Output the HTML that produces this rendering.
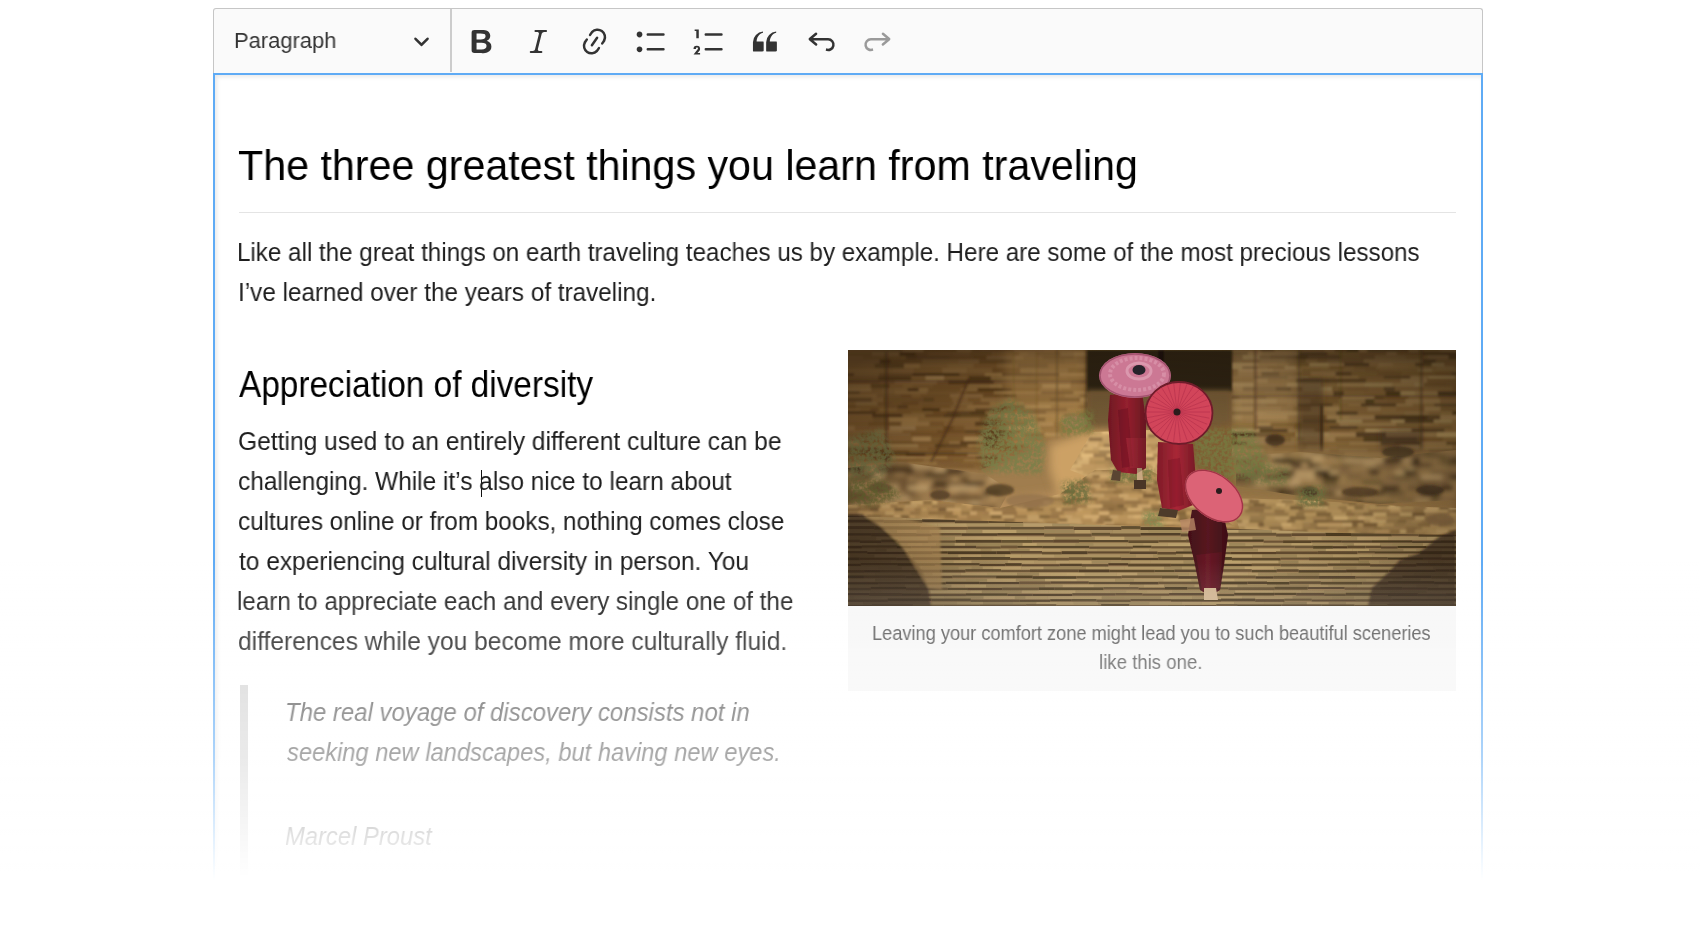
<!DOCTYPE html>
<html><head><meta charset="utf-8">
<style>
html,body{margin:0;padding:0;background:#fff;width:1700px;height:928px;overflow:hidden;position:relative;font-family:"Liberation Sans",sans-serif;}
.a{position:absolute;}
.ln{position:absolute;white-space:nowrap;line-height:1;transform-origin:0 0;will-change:transform;}
#tb{left:213px;top:8px;width:1268px;height:64px;border:1px solid #c6c6c6;border-bottom:none;background:#fafafa;border-radius:3px 3px 0 0;}
#sep{left:450px;top:9px;width:1.5px;height:63px;background:#cccccc;}
#ed{left:213px;top:72.5px;width:1266px;height:900px;border:2px solid #5fabf5;background:#fff;box-shadow:inset 2px 2px 4px rgba(0,0,0,.09);}
.ic{position:absolute;top:24.5px;width:33px;height:33px;}
.ic svg{width:33px;height:33px;display:block;fill:#333;}
.body{color:#222;}
#fade{left:0;top:0;width:1700px;height:928px;background:linear-gradient(to bottom,rgba(255,255,255,0) 0px,rgba(255,255,255,0) 560px,rgba(255,255,255,.5) 760px,rgba(255,255,255,1) 880px);}

</style></head><body>
<div id="tb" class="a"></div>
<div id="ed" class="a"></div>
<div id="sep" class="a"></div>
<!-- toolbar text -->
<svg class="a" style="left:412.8px;top:32.4px;width:17px;height:17px;fill:#333" viewBox="0 0 10 10"><path d="M.941 4.523a.75.75 0 1 1 1.06-1.06l3.006 3.005 3.005-3.005a.75.75 0 1 1 1.06 1.06l-3.549 3.55a.75.75 0 0 1-1.168-.136L.941 4.523z"/></svg>

<div class="ic" style="left:465px"><svg viewBox="0 0 20 20"><path d="M10.187 17H5.773c-.637 0-1.092-.138-1.364-.415-.273-.277-.409-.718-.409-1.323V4.738c0-.617.14-1.062.419-1.332.279-.27.73-.406 1.354-.406h4.68c.69 0 1.288.041 1.793.124.506.083.96.242 1.36.478.341.197.644.447.906.75a3.262 3.262 0 0 1 .808 2.162c0 1.401-.722 2.426-2.167 3.075C15.050 10.175 16 11.337 16 13.060a3.756 3.756 0 0 1-2.296 3.504 6.100 6.100 0 0 1-1.517.377c-.571.073-1.238.11-2 .11zm-.217-6.217H7v4.087h3.069c1.977 0 2.965-.69 2.965-2.072 0-.707-.256-1.220-.768-1.537-.512-.319-1.277-.478-2.296-.478zM7 5.130v3.619h2.606c.729 0 1.292-.067 1.690-.2a1.600 1.600 0 0 0 .910-.765c.165-.267.247-.566.247-.897 0-.707-.260-1.176-.778-1.409-.519-.232-1.310-.348-2.375-.348H7z"/></svg></div>
<div class="ic" style="left:521.6px"><svg viewBox="0 0 20 20"><path d="m9.586 14.633.021.004c-.036.335.095.655.393.962.082.083.173.150.274.201h1.474a.6.6 0 1 1 0 1.200H5.304a.6.6 0 0 1 0-1.200h1.150c.474-.070.809-.182 1.005-.334.157-.122.291-.320.404-.597l2.416-9.550a1.053 1.053 0 0 0-.281-.823 1.120 1.120 0 0 0-.442-.296H8.150a.6.6 0 0 1 0-1.200h6.443a.6.6 0 1 1 0 1.200h-1.195c-.376.056-.650.155-.823.296-.215.175-.423.439-.623.790l-2.366 9.347z"/></svg></div>
<div class="ic" style="left:578.2px"><svg viewBox="0 0 20 20"><path d="m11.077 15 .991-1.416a.75.75 0 1 1 1.229.86l-1.148 1.640a.748.748 0 0 1-.217.206 5.251 5.251 0 0 1-8.503-5.955.741.741 0 0 1 .120-.274l1.147-1.639a.75.75 0 1 1 1.228.860L4.933 10.700l.006.003a3.750 3.750 0 0 0 6.132 4.294l.006.004zm5.494-5.335a.748.748 0 0 1-.120.274l-1.147 1.639a.75.75 0 1 1-1.228-.860l.860-1.230a3.750 3.750 0 0 0-6.144-4.301l-.860 1.229a.75.75 0 0 1-1.229-.860l1.148-1.640a.748.748 0 0 1 .217-.206 5.251 5.251 0 0 1 8.503 5.955zm-4.563-2.532a.75.75 0 0 1 .184 1.045l-3.155 4.505a.75.75 0 1 1-1.229-.860l3.155-4.506a.75.75 0 0 1 1.045-.184z"/></svg></div>
<div class="ic" style="left:635.4px"><svg viewBox="0 0 20 20"><path d="M7 5.75c0 .414.336.75.75.75h9.5a.75.75 0 1 0 0-1.5h-9.5a.75.75 0 0 0-.75.75zm-6 0C1 4.784 1.777 4 2.75 4c.966 0 1.75.777 1.75 1.75 0 .966-.777 1.75-1.75 1.75C1.784 7.5 1 6.723 1 5.75zm6 9c0 .414.336.75.75.75h9.5a.75.75 0 1 0 0-1.5h-9.5a.75.75 0 0 0-.75.75zm-6 0c0-.966.777-1.75 1.75-1.75.966 0 1.75.777 1.75 1.75 0 .966-.777 1.75-1.75 1.75-.966 0-1.75-.777-1.75-1.75z"/></svg></div>
<div class="ic" style="left:692.6px"><svg viewBox="0 0 20 20"><path d="M7 5.75c0 .414.336.75.75.75h9.5a.75.75 0 1 0 0-1.5h-9.5a.75.75 0 0 0-.75.75zM3.5 3v5H2V3.7H1v-1h2.5V3zM.343 17.857l2.59-3.257H2.92a.6.6 0 1 0-1.04 0H.302a2 2 0 1 1 3.995 0h-.001c-.048.405-.16.734-.333.988-.175.254-.59.692-1.244 1.312H4.3v1h-4l.043-.043zM7 14.75a.75.75 0 0 1 .75-.75h9.5a.75.75 0 1 1 0 1.5h-9.5a.75.75 0 0 1-.75-.75z"/></svg></div>
<div class="ic" style="left:748px"><svg viewBox="0 0 20 20"><path d="M3 10.423a6.5 6.5 0 0 1 6.056-6.408l.038.67C6.448 5.423 5.354 7.663 5.22 10H9c.552 0 .5.432.5.986v4.511c0 .554-.448.503-1 .503h-5c-.552 0-.5-.449-.5-1.003v-4.574zm8 0a6.5 6.5 0 0 1 6.056-6.408l.038.67c-2.646.739-3.74 2.979-3.873 5.315H17c.552 0 .5.432.5.986v4.511c0 .554-.448.503-1 .503h-5c-.552 0-.5-.449-.5-1.003v-4.574z"/></svg></div>
<div class="ic" style="left:804.6px"><svg viewBox="0 0 20 20"><path d="m5.042 9.367 2.189 1.837a.75.75 0 0 1-.965 1.149l-3.788-3.18a.747.747 0 0 1-.21-.284.75.75 0 0 1 .17-.945L6.23 4.762a.75.75 0 1 1 .964 1.15L4.863 7.866h8.917A.75.75 0 0 1 14 7.9a4 4 0 1 1-1.477 7.718l.344-1.489a2.5 2.5 0 1 0 1.094-4.73l.008-.032H5.042z"/></svg></div>
<div class="ic" style="left:861.2px"><svg viewBox="0 0 20 20" style="fill:#9a9a9a"><path d="m14.958 9.367-2.189 1.837a.75.75 0 0 0 .965 1.149l3.788-3.18a.747.747 0 0 0 .21-.284.75.75 0 0 0-.17-.945L13.77 4.762a.75.75 0 1 0-.964 1.15l2.331 1.955H6.22A.75.75 0 0 0 6 7.9a4 4 0 1 0 1.477 7.718l-.344-1.489A2.5 2.5 0 1 1 6.039 9.4l-.008-.032h8.927z"/></svg></div>

<!-- content -->
<div class="a" style="left:239px;top:211.5px;width:1217px;height:1.5px;background:#e4e4e4"></div>

<div class="a" style="left:480.5px;top:470px;width:1.5px;height:27px;background:#111"></div>

<!-- blockquote -->
<div class="a" style="left:240px;top:685px;width:8px;height:195px;background:#d6d6d6"></div>

<!-- image -->
<div id="img" class="a" style="left:848px;top:350px;width:608px;height:256px;overflow:hidden"><svg width="608" height="256" viewBox="0 0 608 256" style="display:block">
<defs><filter id="b05" x="-2%" y="-2%" width="104%" height="104%"><feGaussianBlur stdDeviation="0.55"/></filter><filter id="b1" x="-5%" y="-5%" width="110%" height="110%"><feGaussianBlur stdDeviation="0.9"/></filter><filter id="b2" x="-20%" y="-20%" width="140%" height="140%"><feGaussianBlur stdDeviation="2.5"/></filter><filter id="b4" x="-30%" y="-30%" width="160%" height="160%"><feGaussianBlur stdDeviation="5"/></filter><filter id="bush" x="-20%" y="-20%" width="140%" height="140%"><feTurbulence type="fractalNoise" baseFrequency="0.3" numOctaves="2" seed="9" result="t"/><feColorMatrix in="t" values="0 0 0 0 0  0 0 0 0 0  0 0 0 0 0  0 0 0 -3 2.2" result="m"/><feGaussianBlur in="SourceGraphic" stdDeviation="2.5" result="g"/><feComposite in="g" in2="m" operator="in"/><feGaussianBlur stdDeviation="0.5"/></filter><filter id="sat" x="0" y="0" width="100%" height="100%" color-interpolation-filters="sRGB"><feColorMatrix type="saturate" values="1.25"/></filter></defs>
<g filter="url(#sat)">
<rect width="608" height="256" fill="#7a5e3c"/>
<clipPath id="k1"><path d="M0.0 0.0 L240.0 0.0 L240.0 90.0 L192.0 95.0 L132.0 120.0 L0.0 120.0 Z"/></clipPath>
<g clip-path="url(#k1)"><g filter="url(#b1)">
<rect x="-3.0" y="-2.0" width="29.3" height="4.6" fill="#6f5637"/>
<rect x="25.8" y="-2.0" width="29.2" height="4.6" fill="#6b5437"/>
<rect x="54.5" y="-2.0" width="21.5" height="4.6" fill="#7e6545"/>
<rect x="75.5" y="-2.0" width="33.7" height="4.6" fill="#61492c"/>
<rect x="108.7" y="-2.0" width="15.4" height="4.6" fill="#735b3b"/>
<rect x="123.7" y="-2.0" width="8.9" height="4.6" fill="#5e4629"/>
<rect x="132.0" y="-2.0" width="34.2" height="4.6" fill="#624a2d"/>
<rect x="165.7" y="-2.0" width="30.8" height="4.6" fill="#765c3c"/>
<rect x="196.0" y="-2.0" width="12.0" height="4.6" fill="#7b613f"/>
<rect x="207.5" y="-2.0" width="14.4" height="4.6" fill="#7d6341"/>
<rect x="221.4" y="-2.0" width="32.9" height="4.6" fill="#7d6241"/>
<rect x="-3.0" y="2.1" width="27.5" height="4.3" fill="#6a5233"/>
<rect x="24.0" y="2.1" width="27.8" height="4.3" fill="#7c6343"/>
<rect x="51.3" y="2.1" width="16.9" height="4.3" fill="#49351f"/>
<rect x="67.7" y="2.1" width="12.6" height="4.3" fill="#5e462a"/>
<rect x="79.8" y="2.1" width="25.4" height="4.3" fill="#664d2f"/>
<rect x="104.7" y="2.1" width="18.0" height="4.3" fill="#684f31"/>
<rect x="122.1" y="2.1" width="22.0" height="4.3" fill="#62492c"/>
<rect x="143.6" y="2.1" width="28.2" height="4.3" fill="#6c5233"/>
<rect x="171.3" y="2.1" width="9.1" height="4.3" fill="#7f6543"/>
<rect x="179.9" y="2.1" width="9.0" height="4.3" fill="#765d3c"/>
<rect x="188.4" y="2.1" width="24.7" height="4.3" fill="#6a5234"/>
<rect x="212.6" y="2.1" width="13.6" height="4.3" fill="#806747"/>
<rect x="225.7" y="2.1" width="29.7" height="4.3" fill="#8f7551"/>
<rect x="-3.0" y="5.9" width="18.4" height="3.9" fill="#735a3a"/>
<rect x="14.9" y="5.9" width="11.5" height="3.9" fill="#6c5435"/>
<rect x="26.0" y="5.9" width="32.6" height="3.9" fill="#6a5233"/>
<rect x="58.0" y="5.9" width="11.1" height="3.9" fill="#523d25"/>
<rect x="68.6" y="5.9" width="34.2" height="3.9" fill="#584329"/>
<rect x="102.3" y="5.9" width="23.8" height="3.9" fill="#5e462a"/>
<rect x="125.6" y="5.9" width="13.5" height="3.9" fill="#5b4328"/>
<rect x="138.5" y="5.9" width="27.8" height="3.9" fill="#745c3e"/>
<rect x="165.8" y="5.9" width="9.9" height="3.9" fill="#876d4b"/>
<rect x="175.2" y="5.9" width="19.9" height="3.9" fill="#755c3c"/>
<rect x="194.5" y="5.9" width="31.6" height="3.9" fill="#644e32"/>
<rect x="225.7" y="5.9" width="10.1" height="3.9" fill="#6f5738"/>
<rect x="235.2" y="5.9" width="22.3" height="3.9" fill="#715839"/>
<rect x="-3.0" y="9.3" width="35.1" height="4.8" fill="#735a3b"/>
<rect x="31.6" y="9.3" width="11.5" height="4.8" fill="#4d3921"/>
<rect x="42.6" y="9.3" width="32.2" height="4.8" fill="#61492c"/>
<rect x="74.2" y="9.3" width="36.5" height="4.8" fill="#725938"/>
<rect x="110.2" y="9.3" width="21.2" height="4.8" fill="#765d3d"/>
<rect x="130.9" y="9.3" width="21.9" height="4.8" fill="#60482b"/>
<rect x="152.3" y="9.3" width="12.6" height="4.8" fill="#5a442a"/>
<rect x="164.4" y="9.3" width="35.4" height="4.8" fill="#725939"/>
<rect x="199.3" y="9.3" width="18.0" height="4.8" fill="#6f5637"/>
<rect x="216.8" y="9.3" width="30.4" height="4.8" fill="#765c3c"/>
<rect x="-3.0" y="13.6" width="30.2" height="5.0" fill="#785d3a"/>
<rect x="26.7" y="13.6" width="29.8" height="5.0" fill="#5c462a"/>
<rect x="56.0" y="13.6" width="16.4" height="5.0" fill="#8f724b"/>
<rect x="71.8" y="13.6" width="27.8" height="5.0" fill="#7a5e3a"/>
<rect x="99.2" y="13.6" width="26.7" height="5.0" fill="#806541"/>
<rect x="125.4" y="13.6" width="23.8" height="5.0" fill="#755936"/>
<rect x="148.7" y="13.6" width="21.5" height="5.0" fill="#7e623e"/>
<rect x="169.6" y="13.6" width="30.8" height="5.0" fill="#6d5537"/>
<rect x="200.0" y="13.6" width="29.2" height="5.0" fill="#846843"/>
<rect x="228.6" y="13.6" width="32.1" height="5.0" fill="#8a6e48"/>
<rect x="-3.0" y="18.1" width="35.3" height="5.4" fill="#806541"/>
<rect x="31.8" y="18.1" width="13.2" height="5.4" fill="#7d623e"/>
<rect x="44.4" y="18.1" width="21.9" height="5.4" fill="#80633f"/>
<rect x="65.8" y="18.1" width="28.9" height="5.4" fill="#775b37"/>
<rect x="94.2" y="18.1" width="24.8" height="5.4" fill="#886c46"/>
<rect x="118.5" y="18.1" width="26.0" height="5.4" fill="#7e623d"/>
<rect x="144.0" y="18.1" width="28.7" height="5.4" fill="#6b4f2f"/>
<rect x="172.1" y="18.1" width="20.8" height="5.4" fill="#8b704b"/>
<rect x="192.5" y="18.1" width="27.7" height="5.4" fill="#886d48"/>
<rect x="219.7" y="18.1" width="21.7" height="5.4" fill="#765b39"/>
<rect x="240.9" y="18.1" width="12.2" height="5.4" fill="#6b502f"/>
<rect x="-3.0" y="23.0" width="9.5" height="3.5" fill="#564026"/>
<rect x="6.0" y="23.0" width="25.6" height="3.5" fill="#7a603d"/>
<rect x="31.1" y="23.0" width="33.8" height="3.5" fill="#6b5131"/>
<rect x="64.4" y="23.0" width="16.3" height="3.5" fill="#4e3920"/>
<rect x="80.2" y="23.0" width="31.8" height="3.5" fill="#4c371f"/>
<rect x="111.5" y="23.0" width="25.7" height="3.5" fill="#725634"/>
<rect x="136.7" y="23.0" width="18.0" height="3.5" fill="#93764e"/>
<rect x="154.2" y="23.0" width="31.4" height="3.5" fill="#5c452a"/>
<rect x="185.1" y="23.0" width="26.5" height="3.5" fill="#634c30"/>
<rect x="211.1" y="23.0" width="25.2" height="3.5" fill="#9a7d55"/>
<rect x="235.8" y="23.0" width="35.6" height="3.5" fill="#8e724c"/>
<rect x="-3.0" y="26.0" width="8.5" height="5.2" fill="#6e5433"/>
<rect x="5.0" y="26.0" width="25.7" height="5.2" fill="#705534"/>
<rect x="30.3" y="26.0" width="33.5" height="5.2" fill="#574127"/>
<rect x="63.2" y="26.0" width="14.8" height="5.2" fill="#7b5e3a"/>
<rect x="77.5" y="26.0" width="19.1" height="5.2" fill="#a0835b"/>
<rect x="96.2" y="26.0" width="25.2" height="5.2" fill="#7b5e3a"/>
<rect x="120.9" y="26.0" width="22.4" height="5.2" fill="#523c23"/>
<rect x="142.8" y="26.0" width="36.1" height="5.2" fill="#856a45"/>
<rect x="178.3" y="26.0" width="21.9" height="5.2" fill="#816541"/>
<rect x="199.7" y="26.0" width="20.9" height="5.2" fill="#856843"/>
<rect x="220.1" y="26.0" width="31.7" height="5.2" fill="#806440"/>
<rect x="-3.0" y="30.7" width="34.7" height="3.7" fill="#6f5534"/>
<rect x="31.2" y="30.7" width="16.0" height="3.7" fill="#775b39"/>
<rect x="46.7" y="30.7" width="16.7" height="3.7" fill="#896d47"/>
<rect x="62.9" y="30.7" width="26.6" height="3.7" fill="#8e724b"/>
<rect x="88.9" y="30.7" width="11.8" height="3.7" fill="#785c39"/>
<rect x="100.3" y="30.7" width="23.4" height="3.7" fill="#513c23"/>
<rect x="123.2" y="30.7" width="23.3" height="3.7" fill="#533d24"/>
<rect x="146.0" y="30.7" width="29.4" height="3.7" fill="#806541"/>
<rect x="174.9" y="30.7" width="15.6" height="3.7" fill="#725a3b"/>
<rect x="190.0" y="30.7" width="33.4" height="3.7" fill="#876c48"/>
<rect x="222.8" y="30.7" width="30.3" height="3.7" fill="#6c5436"/>
<rect x="-3.0" y="33.9" width="26.2" height="4.8" fill="#876c47"/>
<rect x="22.7" y="33.9" width="19.3" height="4.8" fill="#5f482c"/>
<rect x="41.5" y="33.9" width="14.0" height="4.8" fill="#785b38"/>
<rect x="55.0" y="33.9" width="10.3" height="4.8" fill="#7f633e"/>
<rect x="64.8" y="33.9" width="20.6" height="4.8" fill="#775b37"/>
<rect x="85.0" y="33.9" width="34.0" height="4.8" fill="#715533"/>
<rect x="118.5" y="33.9" width="23.9" height="4.8" fill="#866a45"/>
<rect x="141.8" y="33.9" width="12.8" height="4.8" fill="#90734c"/>
<rect x="154.1" y="33.9" width="10.4" height="4.8" fill="#785b38"/>
<rect x="164.1" y="33.9" width="30.7" height="4.8" fill="#806541"/>
<rect x="194.2" y="33.9" width="28.7" height="4.8" fill="#a58860"/>
<rect x="222.5" y="33.9" width="28.1" height="4.8" fill="#866944"/>
<rect x="-3.0" y="38.2" width="26.6" height="3.5" fill="#8e734e"/>
<rect x="23.1" y="38.2" width="12.3" height="3.5" fill="#755a38"/>
<rect x="34.9" y="38.2" width="12.7" height="3.5" fill="#7d6340"/>
<rect x="47.0" y="38.2" width="13.0" height="3.5" fill="#806541"/>
<rect x="59.6" y="38.2" width="11.5" height="3.5" fill="#4d3820"/>
<rect x="70.6" y="38.2" width="10.1" height="3.5" fill="#8e724b"/>
<rect x="80.2" y="38.2" width="33.1" height="3.5" fill="#705433"/>
<rect x="112.8" y="38.2" width="17.3" height="3.5" fill="#896d47"/>
<rect x="129.6" y="38.2" width="34.8" height="3.5" fill="#4d381f"/>
<rect x="163.9" y="38.2" width="28.0" height="3.5" fill="#745835"/>
<rect x="191.4" y="38.2" width="22.7" height="3.5" fill="#886b46"/>
<rect x="213.6" y="38.2" width="25.9" height="3.5" fill="#806440"/>
<rect x="239.0" y="38.2" width="15.6" height="3.5" fill="#876b46"/>
<rect x="-3.0" y="41.2" width="15.1" height="3.3" fill="#5d462b"/>
<rect x="11.6" y="41.2" width="13.5" height="3.3" fill="#785d3a"/>
<rect x="24.6" y="41.2" width="10.9" height="3.3" fill="#775d3b"/>
<rect x="35.0" y="41.2" width="12.0" height="3.3" fill="#7a603d"/>
<rect x="46.5" y="41.2" width="33.1" height="3.3" fill="#866a45"/>
<rect x="79.0" y="41.2" width="30.8" height="3.3" fill="#765a37"/>
<rect x="109.3" y="41.2" width="10.0" height="3.3" fill="#7b5e3a"/>
<rect x="118.8" y="41.2" width="27.6" height="3.3" fill="#6a4f2e"/>
<rect x="145.9" y="41.2" width="35.7" height="3.3" fill="#90734c"/>
<rect x="181.1" y="41.2" width="12.4" height="3.3" fill="#8e724c"/>
<rect x="193.0" y="41.2" width="15.1" height="3.3" fill="#6c5537"/>
<rect x="207.6" y="41.2" width="18.3" height="3.3" fill="#634c30"/>
<rect x="225.4" y="41.2" width="31.8" height="3.3" fill="#977a53"/>
<rect x="-3.0" y="44.1" width="32.3" height="4.1" fill="#816642"/>
<rect x="28.8" y="44.1" width="24.6" height="4.1" fill="#725837"/>
<rect x="52.9" y="44.1" width="11.2" height="4.1" fill="#6c502f"/>
<rect x="63.6" y="44.1" width="9.6" height="4.1" fill="#7b5f3b"/>
<rect x="72.7" y="44.1" width="29.8" height="4.1" fill="#715533"/>
<rect x="102.0" y="44.1" width="33.4" height="4.1" fill="#886c47"/>
<rect x="134.9" y="44.1" width="21.5" height="4.1" fill="#6b4f2f"/>
<rect x="156.0" y="44.1" width="13.0" height="4.1" fill="#533d24"/>
<rect x="168.4" y="44.1" width="33.1" height="4.1" fill="#7a5f3c"/>
<rect x="201.1" y="44.1" width="16.3" height="4.1" fill="#7b5f3d"/>
<rect x="216.8" y="44.1" width="15.1" height="4.1" fill="#886d48"/>
<rect x="231.4" y="44.1" width="34.4" height="4.1" fill="#735a3b"/>
<rect x="-3.0" y="47.6" width="27.4" height="4.7" fill="#614a2e"/>
<rect x="23.9" y="47.6" width="11.8" height="4.7" fill="#7b613e"/>
<rect x="35.2" y="47.6" width="27.4" height="4.7" fill="#6e5433"/>
<rect x="62.1" y="47.6" width="14.1" height="4.7" fill="#6c5130"/>
<rect x="75.7" y="47.6" width="10.7" height="4.7" fill="#5f482c"/>
<rect x="85.9" y="47.6" width="18.7" height="4.7" fill="#715533"/>
<rect x="104.1" y="47.6" width="16.4" height="4.7" fill="#80633f"/>
<rect x="120.0" y="47.6" width="13.1" height="4.7" fill="#755936"/>
<rect x="132.6" y="47.6" width="34.8" height="4.7" fill="#886c47"/>
<rect x="166.9" y="47.6" width="35.8" height="4.7" fill="#765b39"/>
<rect x="202.2" y="47.6" width="30.3" height="4.7" fill="#614a2f"/>
<rect x="232.0" y="47.6" width="23.9" height="4.7" fill="#9c8059"/>
<rect x="-3.0" y="51.9" width="11.1" height="3.9" fill="#755a38"/>
<rect x="7.6" y="51.9" width="22.3" height="3.9" fill="#816745"/>
<rect x="29.4" y="51.9" width="15.3" height="3.9" fill="#6b5131"/>
<rect x="44.2" y="51.9" width="10.2" height="3.9" fill="#705432"/>
<rect x="53.9" y="51.9" width="17.1" height="3.9" fill="#684d2d"/>
<rect x="70.4" y="51.9" width="35.7" height="3.9" fill="#725634"/>
<rect x="105.7" y="51.9" width="19.8" height="3.9" fill="#816642"/>
<rect x="124.9" y="51.9" width="17.3" height="3.9" fill="#725634"/>
<rect x="141.7" y="51.9" width="34.3" height="3.9" fill="#91744c"/>
<rect x="175.5" y="51.9" width="14.5" height="3.9" fill="#806440"/>
<rect x="189.5" y="51.9" width="22.1" height="3.9" fill="#8f734d"/>
<rect x="211.1" y="51.9" width="26.0" height="3.9" fill="#8f724b"/>
<rect x="236.6" y="51.9" width="17.1" height="3.9" fill="#71583a"/>
<rect x="-3.0" y="55.2" width="11.7" height="3.6" fill="#654b2c"/>
<rect x="8.2" y="55.2" width="30.1" height="3.6" fill="#715735"/>
<rect x="37.9" y="55.2" width="12.1" height="3.6" fill="#6c5130"/>
<rect x="49.5" y="55.2" width="10.9" height="3.6" fill="#574127"/>
<rect x="59.9" y="55.2" width="15.4" height="3.6" fill="#765936"/>
<rect x="74.7" y="55.2" width="9.8" height="3.6" fill="#6d5231"/>
<rect x="84.1" y="55.2" width="19.0" height="3.6" fill="#705432"/>
<rect x="102.5" y="55.2" width="17.3" height="3.6" fill="#7d613c"/>
<rect x="119.3" y="55.2" width="33.6" height="3.6" fill="#8f724b"/>
<rect x="152.4" y="55.2" width="24.6" height="3.6" fill="#5c452a"/>
<rect x="176.5" y="55.2" width="26.9" height="3.6" fill="#a0845c"/>
<rect x="202.9" y="55.2" width="28.1" height="3.6" fill="#856944"/>
<rect x="230.5" y="55.2" width="19.2" height="3.6" fill="#765b39"/>
<rect x="-3.0" y="58.3" width="15.9" height="3.4" fill="#7b613e"/>
<rect x="12.4" y="58.3" width="10.3" height="3.4" fill="#765b39"/>
<rect x="22.1" y="58.3" width="9.3" height="3.4" fill="#664c2d"/>
<rect x="30.9" y="58.3" width="18.5" height="3.4" fill="#7d623e"/>
<rect x="48.9" y="58.3" width="25.6" height="3.4" fill="#705433"/>
<rect x="74.0" y="58.3" width="18.6" height="3.4" fill="#4c371f"/>
<rect x="92.2" y="58.3" width="24.9" height="3.4" fill="#80643f"/>
<rect x="116.5" y="58.3" width="11.2" height="3.4" fill="#836843"/>
<rect x="127.2" y="58.3" width="28.4" height="3.4" fill="#5e472c"/>
<rect x="155.1" y="58.3" width="30.8" height="3.4" fill="#6e5231"/>
<rect x="185.3" y="58.3" width="34.1" height="3.4" fill="#695134"/>
<rect x="219.0" y="58.3" width="20.9" height="3.4" fill="#8f724c"/>
<rect x="239.3" y="58.3" width="23.4" height="3.4" fill="#997d57"/>
<rect x="-3.0" y="61.2" width="31.3" height="3.3" fill="#4f3a21"/>
<rect x="27.8" y="61.2" width="35.9" height="3.3" fill="#6f5433"/>
<rect x="63.2" y="61.2" width="22.0" height="3.3" fill="#795e3a"/>
<rect x="84.7" y="61.2" width="14.5" height="3.3" fill="#6c502f"/>
<rect x="98.7" y="61.2" width="24.2" height="3.3" fill="#5b4429"/>
<rect x="122.5" y="61.2" width="15.3" height="3.3" fill="#503b22"/>
<rect x="137.2" y="61.2" width="36.0" height="3.3" fill="#826640"/>
<rect x="172.7" y="61.2" width="25.8" height="3.3" fill="#634c30"/>
<rect x="198.0" y="61.2" width="31.8" height="3.3" fill="#886d48"/>
<rect x="229.3" y="61.2" width="13.2" height="3.3" fill="#836743"/>
<rect x="242.1" y="61.2" width="33.7" height="3.3" fill="#775b38"/>
<rect x="-3.0" y="64.0" width="27.6" height="3.8" fill="#775c3a"/>
<rect x="24.1" y="64.0" width="30.9" height="3.8" fill="#4e3921"/>
<rect x="54.5" y="64.0" width="22.8" height="3.8" fill="#836843"/>
<rect x="76.9" y="64.0" width="19.4" height="3.8" fill="#684d2d"/>
<rect x="95.8" y="64.0" width="17.2" height="3.8" fill="#553f25"/>
<rect x="112.5" y="64.0" width="28.2" height="3.8" fill="#5f482c"/>
<rect x="140.2" y="64.0" width="31.3" height="3.8" fill="#9b7f58"/>
<rect x="171.0" y="64.0" width="27.3" height="3.8" fill="#977a53"/>
<rect x="197.8" y="64.0" width="18.7" height="3.8" fill="#957851"/>
<rect x="215.9" y="64.0" width="23.1" height="3.8" fill="#775b3a"/>
<rect x="238.6" y="64.0" width="10.9" height="3.8" fill="#6c5436"/>
<rect x="-3.0" y="67.3" width="28.5" height="4.9" fill="#765a38"/>
<rect x="25.0" y="67.3" width="16.2" height="4.9" fill="#6c5232"/>
<rect x="40.7" y="67.3" width="29.6" height="4.9" fill="#93764e"/>
<rect x="69.8" y="67.3" width="33.6" height="4.9" fill="#826640"/>
<rect x="102.9" y="67.3" width="29.2" height="4.9" fill="#846843"/>
<rect x="131.6" y="67.3" width="23.0" height="4.9" fill="#765b38"/>
<rect x="154.1" y="67.3" width="35.8" height="4.9" fill="#876c46"/>
<rect x="189.3" y="67.3" width="8.6" height="4.9" fill="#644d30"/>
<rect x="197.4" y="67.3" width="26.8" height="4.9" fill="#8f724b"/>
<rect x="223.7" y="67.3" width="25.7" height="4.9" fill="#624b30"/>
<rect x="-3.0" y="71.7" width="24.0" height="4.7" fill="#725836"/>
<rect x="20.5" y="71.7" width="33.3" height="4.7" fill="#694f2f"/>
<rect x="53.3" y="71.7" width="16.0" height="4.7" fill="#91754d"/>
<rect x="68.8" y="71.7" width="13.2" height="4.7" fill="#8f724b"/>
<rect x="81.5" y="71.7" width="14.8" height="4.7" fill="#735734"/>
<rect x="95.8" y="71.7" width="31.7" height="4.7" fill="#80643f"/>
<rect x="127.0" y="71.7" width="20.2" height="4.7" fill="#564026"/>
<rect x="146.7" y="71.7" width="33.8" height="4.7" fill="#6d5230"/>
<rect x="180.0" y="71.7" width="25.5" height="4.7" fill="#957a55"/>
<rect x="205.0" y="71.7" width="9.4" height="4.7" fill="#806440"/>
<rect x="213.9" y="71.7" width="25.4" height="4.7" fill="#795d3b"/>
<rect x="238.8" y="71.7" width="25.1" height="4.7" fill="#957851"/>
<rect x="-3.0" y="75.9" width="10.2" height="4.8" fill="#866b46"/>
<rect x="6.7" y="75.9" width="35.3" height="4.8" fill="#745937"/>
<rect x="41.5" y="75.9" width="26.6" height="4.8" fill="#927752"/>
<rect x="67.6" y="75.9" width="28.0" height="4.8" fill="#7b5f3b"/>
<rect x="95.1" y="75.9" width="11.3" height="4.8" fill="#6b4f2f"/>
<rect x="105.9" y="75.9" width="11.1" height="4.8" fill="#745835"/>
<rect x="116.5" y="75.9" width="11.4" height="4.8" fill="#80643f"/>
<rect x="127.5" y="75.9" width="31.4" height="4.8" fill="#80633e"/>
<rect x="158.3" y="75.9" width="34.4" height="4.8" fill="#9a7e57"/>
<rect x="192.2" y="75.9" width="35.5" height="4.8" fill="#775c3a"/>
<rect x="227.2" y="75.9" width="10.3" height="4.8" fill="#7c613e"/>
<rect x="237.0" y="75.9" width="21.3" height="4.8" fill="#8b6f49"/>
<rect x="-3.0" y="80.2" width="19.8" height="3.2" fill="#7d623f"/>
<rect x="16.3" y="80.2" width="11.8" height="3.2" fill="#7c623f"/>
<rect x="27.6" y="80.2" width="27.6" height="3.2" fill="#886d47"/>
<rect x="54.7" y="80.2" width="35.0" height="3.2" fill="#775a37"/>
<rect x="89.2" y="80.2" width="28.7" height="3.2" fill="#6a4f2e"/>
<rect x="117.4" y="80.2" width="21.9" height="3.2" fill="#5a4429"/>
<rect x="138.8" y="80.2" width="34.2" height="3.2" fill="#513c23"/>
<rect x="172.5" y="80.2" width="22.5" height="3.2" fill="#8c704a"/>
<rect x="194.5" y="80.2" width="24.6" height="3.2" fill="#7c603d"/>
<rect x="218.6" y="80.2" width="32.2" height="3.2" fill="#886d48"/>
<rect x="-3.0" y="82.9" width="15.2" height="4.1" fill="#765d3b"/>
<rect x="11.7" y="82.9" width="16.1" height="4.1" fill="#6d5232"/>
<rect x="27.2" y="82.9" width="36.1" height="4.1" fill="#7d623f"/>
<rect x="62.8" y="82.9" width="34.6" height="4.1" fill="#6f5331"/>
<rect x="97.0" y="82.9" width="31.2" height="4.1" fill="#775a37"/>
<rect x="127.7" y="82.9" width="18.6" height="4.1" fill="#6d5130"/>
<rect x="145.8" y="82.9" width="21.3" height="4.1" fill="#564026"/>
<rect x="166.6" y="82.9" width="10.0" height="4.1" fill="#886c46"/>
<rect x="176.1" y="82.9" width="20.9" height="4.1" fill="#624b2f"/>
<rect x="196.5" y="82.9" width="16.3" height="4.1" fill="#9f835c"/>
<rect x="212.3" y="82.9" width="22.7" height="4.1" fill="#7d613e"/>
<rect x="234.5" y="82.9" width="30.3" height="4.1" fill="#6c5436"/>
<rect x="-3.0" y="86.5" width="26.6" height="5.3" fill="#765c3b"/>
<rect x="23.1" y="86.5" width="9.2" height="5.3" fill="#735837"/>
<rect x="31.7" y="86.5" width="33.0" height="5.3" fill="#7d613e"/>
<rect x="64.2" y="86.5" width="19.1" height="5.3" fill="#9d8059"/>
<rect x="82.8" y="86.5" width="33.5" height="5.3" fill="#775b37"/>
<rect x="115.8" y="86.5" width="20.3" height="5.3" fill="#a1845c"/>
<rect x="135.6" y="86.5" width="14.6" height="5.3" fill="#513b22"/>
<rect x="149.7" y="86.5" width="21.7" height="5.3" fill="#755836"/>
<rect x="170.8" y="86.5" width="12.0" height="5.3" fill="#7e623f"/>
<rect x="182.3" y="86.5" width="10.6" height="5.3" fill="#725a3b"/>
<rect x="192.3" y="86.5" width="33.3" height="5.3" fill="#755a39"/>
<rect x="225.1" y="86.5" width="31.7" height="5.3" fill="#9d815a"/>
<rect x="-3.0" y="91.2" width="15.1" height="3.3" fill="#927752"/>
<rect x="11.6" y="91.2" width="9.4" height="3.3" fill="#6c5131"/>
<rect x="20.5" y="91.2" width="16.0" height="3.3" fill="#725836"/>
<rect x="36.0" y="91.2" width="30.2" height="3.3" fill="#6d5332"/>
<rect x="65.7" y="91.2" width="35.8" height="3.3" fill="#735836"/>
<rect x="101.0" y="91.2" width="11.6" height="3.3" fill="#876b46"/>
<rect x="112.1" y="91.2" width="18.8" height="3.3" fill="#574127"/>
<rect x="130.4" y="91.2" width="35.5" height="3.3" fill="#735734"/>
<rect x="165.4" y="91.2" width="15.9" height="3.3" fill="#8e724b"/>
<rect x="180.8" y="91.2" width="12.2" height="3.3" fill="#8e714a"/>
<rect x="192.5" y="91.2" width="8.7" height="3.3" fill="#7a5e3a"/>
<rect x="200.8" y="91.2" width="22.6" height="3.3" fill="#8f734c"/>
<rect x="222.9" y="91.2" width="10.1" height="3.3" fill="#806541"/>
<rect x="232.5" y="91.2" width="19.3" height="3.3" fill="#4c371f"/>
<rect x="-3.0" y="94.1" width="21.1" height="3.7" fill="#876c47"/>
<rect x="17.6" y="94.1" width="18.9" height="3.7" fill="#836844"/>
<rect x="36.0" y="94.1" width="34.7" height="3.7" fill="#937852"/>
<rect x="70.2" y="94.1" width="16.9" height="3.7" fill="#7a5d3a"/>
<rect x="86.7" y="94.1" width="10.7" height="3.7" fill="#5a4429"/>
<rect x="96.8" y="94.1" width="23.3" height="3.7" fill="#5e472b"/>
<rect x="119.6" y="94.1" width="16.9" height="3.7" fill="#90734c"/>
<rect x="136.0" y="94.1" width="12.4" height="3.7" fill="#553f25"/>
<rect x="147.9" y="94.1" width="24.3" height="3.7" fill="#715533"/>
<rect x="171.7" y="94.1" width="10.2" height="3.7" fill="#6e5331"/>
<rect x="181.4" y="94.1" width="12.5" height="3.7" fill="#937752"/>
<rect x="193.4" y="94.1" width="16.2" height="3.7" fill="#80643f"/>
<rect x="209.1" y="94.1" width="15.8" height="3.7" fill="#7e623d"/>
<rect x="224.5" y="94.1" width="19.4" height="3.7" fill="#846944"/>
<rect x="-3.0" y="97.3" width="33.0" height="3.7" fill="#60492d"/>
<rect x="29.5" y="97.3" width="13.5" height="3.7" fill="#644a2c"/>
<rect x="42.5" y="97.3" width="29.2" height="3.7" fill="#806541"/>
<rect x="71.2" y="97.3" width="9.7" height="3.7" fill="#7b5f3b"/>
<rect x="80.4" y="97.3" width="32.9" height="3.7" fill="#735735"/>
<rect x="112.8" y="97.3" width="11.8" height="3.7" fill="#7e623d"/>
<rect x="124.1" y="97.3" width="25.6" height="3.7" fill="#7a5e3a"/>
<rect x="149.2" y="97.3" width="11.6" height="3.7" fill="#755936"/>
<rect x="160.4" y="97.3" width="11.1" height="3.7" fill="#715533"/>
<rect x="171.0" y="97.3" width="26.7" height="3.7" fill="#80633f"/>
<rect x="197.1" y="97.3" width="10.4" height="3.7" fill="#90744c"/>
<rect x="207.1" y="97.3" width="11.9" height="3.7" fill="#775b38"/>
<rect x="218.4" y="97.3" width="16.9" height="3.7" fill="#775a37"/>
<rect x="234.8" y="97.3" width="22.9" height="3.7" fill="#7b5f3b"/>
<rect x="-3.0" y="100.5" width="14.6" height="3.4" fill="#765b38"/>
<rect x="11.1" y="100.5" width="14.2" height="3.4" fill="#6a5030"/>
<rect x="24.8" y="100.5" width="10.7" height="3.4" fill="#5a4429"/>
<rect x="35.0" y="100.5" width="26.7" height="3.4" fill="#664c2d"/>
<rect x="61.2" y="100.5" width="22.3" height="3.4" fill="#7a5f3b"/>
<rect x="83.0" y="100.5" width="24.6" height="3.4" fill="#745937"/>
<rect x="107.0" y="100.5" width="16.0" height="3.4" fill="#8a6e48"/>
<rect x="122.5" y="100.5" width="33.7" height="3.4" fill="#8d704a"/>
<rect x="155.7" y="100.5" width="20.2" height="3.4" fill="#826640"/>
<rect x="175.5" y="100.5" width="16.7" height="3.4" fill="#6d5130"/>
<rect x="191.7" y="100.5" width="18.5" height="3.4" fill="#775b38"/>
<rect x="209.7" y="100.5" width="26.1" height="3.4" fill="#93764e"/>
<rect x="235.4" y="100.5" width="11.8" height="3.4" fill="#785d39"/>
<rect x="-3.0" y="103.4" width="26.2" height="3.3" fill="#765b39"/>
<rect x="22.7" y="103.4" width="9.9" height="3.3" fill="#876d4a"/>
<rect x="32.1" y="103.4" width="26.3" height="3.3" fill="#705635"/>
<rect x="57.9" y="103.4" width="19.9" height="3.3" fill="#4d3820"/>
<rect x="77.3" y="103.4" width="10.3" height="3.3" fill="#7a5e3a"/>
<rect x="87.1" y="103.4" width="32.9" height="3.3" fill="#6e5231"/>
<rect x="119.5" y="103.4" width="13.5" height="3.3" fill="#9d815a"/>
<rect x="132.5" y="103.4" width="33.6" height="3.3" fill="#826642"/>
<rect x="165.6" y="103.4" width="20.2" height="3.3" fill="#684d2d"/>
<rect x="185.3" y="103.4" width="24.3" height="3.3" fill="#6a4e2e"/>
<rect x="209.1" y="103.4" width="22.8" height="3.3" fill="#a0845c"/>
<rect x="231.4" y="103.4" width="21.6" height="3.3" fill="#775a37"/>
<rect x="-3.0" y="106.1" width="23.5" height="3.3" fill="#775b39"/>
<rect x="20.0" y="106.1" width="23.7" height="3.3" fill="#533e24"/>
<rect x="43.2" y="106.1" width="23.9" height="3.3" fill="#967a54"/>
<rect x="66.7" y="106.1" width="14.4" height="3.3" fill="#92754d"/>
<rect x="80.5" y="106.1" width="19.2" height="3.3" fill="#92754d"/>
<rect x="99.2" y="106.1" width="17.6" height="3.3" fill="#7c603c"/>
<rect x="116.3" y="106.1" width="12.4" height="3.3" fill="#7a5d3a"/>
<rect x="128.2" y="106.1" width="21.5" height="3.3" fill="#5e472b"/>
<rect x="149.3" y="106.1" width="24.6" height="3.3" fill="#856a44"/>
<rect x="173.4" y="106.1" width="29.3" height="3.3" fill="#715533"/>
<rect x="202.2" y="106.1" width="29.7" height="3.3" fill="#826742"/>
<rect x="231.4" y="106.1" width="14.2" height="3.3" fill="#80643f"/>
<rect x="-3.0" y="108.9" width="36.4" height="3.3" fill="#664d2d"/>
<rect x="32.9" y="108.9" width="11.0" height="3.3" fill="#5a4429"/>
<rect x="43.4" y="108.9" width="32.5" height="3.3" fill="#755936"/>
<rect x="75.4" y="108.9" width="11.4" height="3.3" fill="#856944"/>
<rect x="86.4" y="108.9" width="18.5" height="3.3" fill="#765937"/>
<rect x="104.4" y="108.9" width="11.9" height="3.3" fill="#785d39"/>
<rect x="115.8" y="108.9" width="25.1" height="3.3" fill="#896d47"/>
<rect x="140.4" y="108.9" width="33.0" height="3.3" fill="#775c38"/>
<rect x="172.8" y="108.9" width="17.8" height="3.3" fill="#745936"/>
<rect x="190.2" y="108.9" width="20.3" height="3.3" fill="#5f482c"/>
<rect x="209.9" y="108.9" width="12.1" height="3.3" fill="#8f724b"/>
<rect x="221.5" y="108.9" width="28.9" height="3.3" fill="#7a5d3a"/>
<rect x="-3.0" y="111.7" width="32.4" height="3.8" fill="#7d6340"/>
<rect x="28.9" y="111.7" width="32.0" height="3.8" fill="#7c623f"/>
<rect x="60.3" y="111.7" width="29.0" height="3.8" fill="#8e714a"/>
<rect x="88.8" y="111.7" width="25.7" height="3.8" fill="#755937"/>
<rect x="114.0" y="111.7" width="22.3" height="3.8" fill="#775b38"/>
<rect x="135.9" y="111.7" width="30.1" height="3.8" fill="#725735"/>
<rect x="165.5" y="111.7" width="23.5" height="3.8" fill="#4e3920"/>
<rect x="188.5" y="111.7" width="14.2" height="3.8" fill="#9f825a"/>
<rect x="202.1" y="111.7" width="15.2" height="3.8" fill="#7f623e"/>
<rect x="216.8" y="111.7" width="19.3" height="3.8" fill="#846944"/>
<rect x="235.6" y="111.7" width="16.2" height="3.8" fill="#755836"/>
<rect x="-3.0" y="115.0" width="29.3" height="4.5" fill="#7e6340"/>
<rect x="25.8" y="115.0" width="17.1" height="4.5" fill="#725836"/>
<rect x="42.4" y="115.0" width="25.2" height="4.5" fill="#7a5f3b"/>
<rect x="67.1" y="115.0" width="27.7" height="4.5" fill="#6d5130"/>
<rect x="94.3" y="115.0" width="32.0" height="4.5" fill="#694e2d"/>
<rect x="125.9" y="115.0" width="8.9" height="4.5" fill="#745836"/>
<rect x="134.3" y="115.0" width="21.3" height="4.5" fill="#5c452a"/>
<rect x="155.1" y="115.0" width="21.8" height="4.5" fill="#806541"/>
<rect x="176.4" y="115.0" width="30.8" height="4.5" fill="#7e623d"/>
<rect x="206.7" y="115.0" width="31.9" height="4.5" fill="#8e714b"/>
<rect x="238.1" y="115.0" width="32.3" height="4.5" fill="#806541"/>
<rect x="-3.0" y="118.9" width="36.2" height="5.2" fill="#644b2c"/>
<rect x="32.7" y="118.9" width="18.0" height="5.2" fill="#6a5030"/>
<rect x="50.2" y="118.9" width="11.0" height="5.2" fill="#684d2d"/>
<rect x="60.7" y="118.9" width="20.5" height="5.2" fill="#765a37"/>
<rect x="80.7" y="118.9" width="19.4" height="5.2" fill="#7b5e3a"/>
<rect x="99.6" y="118.9" width="33.5" height="5.2" fill="#765a38"/>
<rect x="132.7" y="118.9" width="19.8" height="5.2" fill="#543e24"/>
<rect x="151.9" y="118.9" width="9.2" height="5.2" fill="#5b4429"/>
<rect x="160.7" y="118.9" width="27.9" height="5.2" fill="#7f633e"/>
<rect x="188.1" y="118.9" width="29.9" height="5.2" fill="#846741"/>
<rect x="217.4" y="118.9" width="30.7" height="5.2" fill="#594228"/>
</g></g>
<clipPath id="k2"><path d="M383.0 0.0 L608.0 0.0 L608.0 108.0 L384.0 112.0 Z"/></clipPath>
<g clip-path="url(#k2)"><g filter="url(#b1)">
<rect x="380.0" y="-2.0" width="33.2" height="4.6" fill="#6c5638"/>
<rect x="412.7" y="-2.0" width="13.8" height="4.6" fill="#4a3924"/>
<rect x="426.1" y="-2.0" width="27.6" height="4.6" fill="#675234"/>
<rect x="453.2" y="-2.0" width="23.4" height="4.6" fill="#6a5537"/>
<rect x="476.1" y="-2.0" width="11.2" height="4.6" fill="#745e40"/>
<rect x="486.7" y="-2.0" width="12.5" height="4.6" fill="#5c472c"/>
<rect x="498.8" y="-2.0" width="12.7" height="4.6" fill="#473722"/>
<rect x="510.9" y="-2.0" width="8.7" height="4.6" fill="#806949"/>
<rect x="519.1" y="-2.0" width="31.9" height="4.6" fill="#58462e"/>
<rect x="550.5" y="-2.0" width="10.7" height="4.6" fill="#5c472c"/>
<rect x="560.7" y="-2.0" width="10.1" height="4.6" fill="#7c6646"/>
<rect x="570.3" y="-2.0" width="21.9" height="4.6" fill="#6c5638"/>
<rect x="591.7" y="-2.0" width="34.2" height="4.6" fill="#776243"/>
<rect x="380.0" y="2.1" width="20.4" height="3.4" fill="#56442c"/>
<rect x="399.9" y="2.1" width="14.9" height="3.4" fill="#806948"/>
<rect x="414.4" y="2.1" width="10.5" height="3.4" fill="#715c3e"/>
<rect x="424.4" y="2.1" width="27.1" height="3.4" fill="#6e5a3d"/>
<rect x="451.0" y="2.1" width="28.9" height="3.4" fill="#4c3b25"/>
<rect x="479.4" y="2.1" width="32.5" height="3.4" fill="#695436"/>
<rect x="511.4" y="2.1" width="27.5" height="3.4" fill="#665033"/>
<rect x="538.4" y="2.1" width="10.8" height="3.4" fill="#7f6848"/>
<rect x="548.7" y="2.1" width="26.3" height="3.4" fill="#665033"/>
<rect x="574.5" y="2.1" width="21.6" height="3.4" fill="#483823"/>
<rect x="595.7" y="2.1" width="16.3" height="3.4" fill="#473622"/>
<rect x="380.0" y="5.1" width="15.3" height="4.7" fill="#5e492d"/>
<rect x="394.8" y="5.1" width="17.0" height="4.7" fill="#887453"/>
<rect x="411.3" y="5.1" width="11.2" height="4.7" fill="#58462e"/>
<rect x="422.0" y="5.1" width="11.0" height="4.7" fill="#493924"/>
<rect x="432.4" y="5.1" width="27.6" height="4.7" fill="#473722"/>
<rect x="459.5" y="5.1" width="32.6" height="4.7" fill="#53412a"/>
<rect x="491.7" y="5.1" width="21.2" height="4.7" fill="#644f32"/>
<rect x="512.4" y="5.1" width="14.9" height="4.7" fill="#614c30"/>
<rect x="526.7" y="5.1" width="31.5" height="4.7" fill="#735e40"/>
<rect x="557.8" y="5.1" width="22.7" height="4.7" fill="#6e5839"/>
<rect x="579.9" y="5.1" width="21.1" height="4.7" fill="#796344"/>
<rect x="600.6" y="5.1" width="19.9" height="4.7" fill="#483723"/>
<rect x="380.0" y="9.3" width="33.1" height="4.1" fill="#634e31"/>
<rect x="412.6" y="9.3" width="25.4" height="4.1" fill="#705b3e"/>
<rect x="437.5" y="9.3" width="21.0" height="4.1" fill="#644f32"/>
<rect x="458.0" y="9.3" width="11.5" height="4.1" fill="#755e3e"/>
<rect x="469.0" y="9.3" width="10.4" height="4.1" fill="#685235"/>
<rect x="478.9" y="9.3" width="16.5" height="4.1" fill="#6d593c"/>
<rect x="494.9" y="9.3" width="21.3" height="4.1" fill="#624d31"/>
<rect x="515.7" y="9.3" width="27.9" height="4.1" fill="#7e6747"/>
<rect x="543.1" y="9.3" width="32.1" height="4.1" fill="#7d6747"/>
<rect x="574.7" y="9.3" width="13.5" height="4.1" fill="#4c3b25"/>
<rect x="587.6" y="9.3" width="26.0" height="4.1" fill="#6d5738"/>
<rect x="380.0" y="12.9" width="30.4" height="3.9" fill="#a28b64"/>
<rect x="409.9" y="12.9" width="19.4" height="3.9" fill="#876e48"/>
<rect x="428.9" y="12.9" width="12.1" height="3.9" fill="#826a45"/>
<rect x="440.5" y="12.9" width="21.3" height="3.9" fill="#6d5635"/>
<rect x="461.3" y="12.9" width="20.0" height="3.9" fill="#98825c"/>
<rect x="480.9" y="12.9" width="15.7" height="3.9" fill="#8a724f"/>
<rect x="496.0" y="12.9" width="25.7" height="3.9" fill="#4f3e27"/>
<rect x="521.2" y="12.9" width="9.5" height="3.9" fill="#816844"/>
<rect x="530.2" y="12.9" width="15.3" height="3.9" fill="#8d7551"/>
<rect x="545.0" y="12.9" width="22.6" height="3.9" fill="#836b45"/>
<rect x="567.1" y="12.9" width="17.1" height="3.9" fill="#56442b"/>
<rect x="583.7" y="12.9" width="13.0" height="3.9" fill="#907b57"/>
<rect x="596.2" y="12.9" width="22.5" height="3.9" fill="#745c3a"/>
<rect x="380.0" y="16.3" width="14.8" height="3.1" fill="#9f8962"/>
<rect x="394.3" y="16.3" width="14.7" height="3.1" fill="#645137"/>
<rect x="408.5" y="16.3" width="11.9" height="3.1" fill="#7d6440"/>
<rect x="419.9" y="16.3" width="17.2" height="3.1" fill="#6b5433"/>
<rect x="436.6" y="16.3" width="11.6" height="3.1" fill="#9e8861"/>
<rect x="447.7" y="16.3" width="34.3" height="3.1" fill="#836b45"/>
<rect x="481.5" y="16.3" width="15.6" height="3.1" fill="#6f5736"/>
<rect x="496.6" y="16.3" width="10.3" height="3.1" fill="#785f3d"/>
<rect x="506.4" y="16.3" width="22.2" height="3.1" fill="#705837"/>
<rect x="528.2" y="16.3" width="32.3" height="3.1" fill="#826a45"/>
<rect x="560.0" y="16.3" width="29.0" height="3.1" fill="#7f6742"/>
<rect x="588.4" y="16.3" width="19.2" height="3.1" fill="#87704c"/>
<rect x="607.2" y="16.3" width="9.5" height="3.1" fill="#735b39"/>
<rect x="380.0" y="18.9" width="10.8" height="3.3" fill="#715938"/>
<rect x="390.3" y="18.9" width="35.3" height="3.3" fill="#9b835d"/>
<rect x="425.1" y="18.9" width="29.3" height="3.3" fill="#88704d"/>
<rect x="453.9" y="18.9" width="19.5" height="3.3" fill="#765e3b"/>
<rect x="472.9" y="18.9" width="32.4" height="3.3" fill="#79623f"/>
<rect x="504.8" y="18.9" width="12.7" height="3.3" fill="#755d3b"/>
<rect x="517.0" y="18.9" width="14.9" height="3.3" fill="#705837"/>
<rect x="531.4" y="18.9" width="14.9" height="3.3" fill="#775e3c"/>
<rect x="545.8" y="18.9" width="24.9" height="3.3" fill="#78603d"/>
<rect x="570.2" y="18.9" width="14.3" height="3.3" fill="#927d58"/>
<rect x="583.9" y="18.9" width="25.1" height="3.3" fill="#826a45"/>
<rect x="608.5" y="18.9" width="22.1" height="3.3" fill="#806843"/>
<rect x="380.0" y="21.7" width="10.7" height="4.7" fill="#735b39"/>
<rect x="390.2" y="21.7" width="23.8" height="4.7" fill="#89704c"/>
<rect x="413.5" y="21.7" width="18.2" height="4.7" fill="#54422a"/>
<rect x="431.2" y="21.7" width="32.0" height="4.7" fill="#755d3a"/>
<rect x="462.7" y="21.7" width="25.5" height="4.7" fill="#88704d"/>
<rect x="487.6" y="21.7" width="16.3" height="4.7" fill="#56432b"/>
<rect x="503.4" y="21.7" width="26.6" height="4.7" fill="#725b39"/>
<rect x="529.5" y="21.7" width="24.2" height="4.7" fill="#6c5434"/>
<rect x="553.2" y="21.7" width="34.5" height="4.7" fill="#735b39"/>
<rect x="587.2" y="21.7" width="16.8" height="4.7" fill="#6f5736"/>
<rect x="603.4" y="21.7" width="13.0" height="4.7" fill="#5c492f"/>
<rect x="380.0" y="25.9" width="18.3" height="3.2" fill="#806843"/>
<rect x="397.8" y="25.9" width="9.1" height="3.2" fill="#7f6845"/>
<rect x="406.4" y="25.9" width="33.6" height="3.2" fill="#68553a"/>
<rect x="439.5" y="25.9" width="21.9" height="3.2" fill="#846d4b"/>
<rect x="460.9" y="25.9" width="27.2" height="3.2" fill="#7d6541"/>
<rect x="487.6" y="25.9" width="23.5" height="3.2" fill="#876e48"/>
<rect x="510.7" y="25.9" width="25.7" height="3.2" fill="#745c3a"/>
<rect x="535.8" y="25.9" width="27.0" height="3.2" fill="#57452c"/>
<rect x="562.4" y="25.9" width="18.8" height="3.2" fill="#8e7651"/>
<rect x="580.7" y="25.9" width="27.3" height="3.2" fill="#9e8760"/>
<rect x="607.4" y="25.9" width="28.4" height="3.2" fill="#78613e"/>
<rect x="380.0" y="28.6" width="25.9" height="4.5" fill="#79603d"/>
<rect x="405.4" y="28.6" width="14.8" height="4.5" fill="#957d58"/>
<rect x="419.7" y="28.6" width="28.7" height="4.5" fill="#7d6541"/>
<rect x="447.9" y="28.6" width="34.8" height="4.5" fill="#55432a"/>
<rect x="482.3" y="28.6" width="36.3" height="4.5" fill="#58452c"/>
<rect x="518.0" y="28.6" width="35.3" height="4.5" fill="#79603d"/>
<rect x="552.8" y="28.6" width="26.8" height="4.5" fill="#917954"/>
<rect x="579.0" y="28.6" width="32.6" height="4.5" fill="#735b39"/>
<rect x="380.0" y="32.7" width="28.1" height="4.5" fill="#a08962"/>
<rect x="407.6" y="32.7" width="31.7" height="4.5" fill="#826a47"/>
<rect x="438.8" y="32.7" width="34.1" height="4.5" fill="#9f8861"/>
<rect x="472.3" y="32.7" width="17.8" height="4.5" fill="#7e6642"/>
<rect x="489.7" y="32.7" width="27.2" height="4.5" fill="#937a55"/>
<rect x="516.4" y="32.7" width="28.5" height="4.5" fill="#99835d"/>
<rect x="544.4" y="32.7" width="22.3" height="4.5" fill="#8d7550"/>
<rect x="566.2" y="32.7" width="9.9" height="4.5" fill="#96805b"/>
<rect x="575.6" y="32.7" width="22.5" height="4.5" fill="#6d5635"/>
<rect x="597.5" y="32.7" width="34.5" height="4.5" fill="#6f5837"/>
<rect x="380.0" y="36.7" width="15.3" height="5.0" fill="#8d7550"/>
<rect x="394.8" y="36.7" width="33.6" height="5.0" fill="#6a563b"/>
<rect x="427.9" y="36.7" width="15.8" height="5.0" fill="#4a3923"/>
<rect x="443.1" y="36.7" width="11.8" height="5.0" fill="#705837"/>
<rect x="454.5" y="36.7" width="30.0" height="5.0" fill="#97815b"/>
<rect x="484.0" y="36.7" width="15.5" height="5.0" fill="#765e3b"/>
<rect x="499.0" y="36.7" width="21.9" height="5.0" fill="#745c3a"/>
<rect x="520.4" y="36.7" width="16.0" height="5.0" fill="#79613d"/>
<rect x="535.9" y="36.7" width="11.4" height="5.0" fill="#59462d"/>
<rect x="546.8" y="36.7" width="23.7" height="5.0" fill="#7a623f"/>
<rect x="570.0" y="36.7" width="35.0" height="5.0" fill="#7b633f"/>
<rect x="604.5" y="36.7" width="20.4" height="5.0" fill="#6f5736"/>
<rect x="380.0" y="41.2" width="28.6" height="5.5" fill="#846b46"/>
<rect x="408.1" y="41.2" width="8.7" height="5.5" fill="#735b39"/>
<rect x="416.2" y="41.2" width="34.0" height="5.5" fill="#765f3d"/>
<rect x="449.7" y="41.2" width="36.1" height="5.5" fill="#88704d"/>
<rect x="485.3" y="41.2" width="10.8" height="5.5" fill="#54422a"/>
<rect x="495.7" y="41.2" width="21.2" height="5.5" fill="#7c6440"/>
<rect x="516.4" y="41.2" width="21.8" height="5.5" fill="#79603d"/>
<rect x="537.7" y="41.2" width="15.3" height="5.5" fill="#4c3a24"/>
<rect x="552.5" y="41.2" width="15.2" height="5.5" fill="#9c865f"/>
<rect x="567.2" y="41.2" width="23.2" height="5.5" fill="#8f7752"/>
<rect x="589.8" y="41.2" width="23.1" height="5.5" fill="#4c3b25"/>
<rect x="380.0" y="46.2" width="11.9" height="3.1" fill="#4a3923"/>
<rect x="391.4" y="46.2" width="27.4" height="3.1" fill="#68553a"/>
<rect x="418.3" y="46.2" width="17.3" height="3.1" fill="#866e4b"/>
<rect x="435.1" y="46.2" width="32.4" height="3.1" fill="#836c49"/>
<rect x="466.9" y="46.2" width="10.9" height="3.1" fill="#7f6743"/>
<rect x="477.3" y="46.2" width="16.7" height="3.1" fill="#745d3b"/>
<rect x="493.5" y="46.2" width="33.4" height="3.1" fill="#9d8660"/>
<rect x="526.4" y="46.2" width="9.9" height="3.1" fill="#5a482e"/>
<rect x="535.8" y="46.2" width="25.1" height="3.1" fill="#6e5736"/>
<rect x="560.4" y="46.2" width="10.3" height="3.1" fill="#856e4b"/>
<rect x="570.2" y="46.2" width="21.0" height="3.1" fill="#866d47"/>
<rect x="590.6" y="46.2" width="22.3" height="3.1" fill="#765f3c"/>
<rect x="380.0" y="48.8" width="32.7" height="5.4" fill="#937a55"/>
<rect x="412.2" y="48.8" width="16.8" height="5.4" fill="#96805b"/>
<rect x="428.6" y="48.8" width="34.4" height="5.4" fill="#866d48"/>
<rect x="462.4" y="48.8" width="28.9" height="5.4" fill="#6f5836"/>
<rect x="490.8" y="48.8" width="26.9" height="5.4" fill="#816944"/>
<rect x="517.2" y="48.8" width="9.6" height="5.4" fill="#503f27"/>
<rect x="526.2" y="48.8" width="13.3" height="5.4" fill="#745c3a"/>
<rect x="539.0" y="48.8" width="18.9" height="5.4" fill="#725a38"/>
<rect x="557.5" y="48.8" width="35.0" height="5.4" fill="#917853"/>
<rect x="592.0" y="48.8" width="34.6" height="5.4" fill="#7b623f"/>
<rect x="380.0" y="53.6" width="14.0" height="3.2" fill="#836a45"/>
<rect x="393.5" y="53.6" width="25.7" height="3.2" fill="#725d40"/>
<rect x="418.7" y="53.6" width="20.5" height="3.2" fill="#6e5636"/>
<rect x="438.7" y="53.6" width="11.7" height="3.2" fill="#7d6440"/>
<rect x="449.8" y="53.6" width="35.1" height="3.2" fill="#524028"/>
<rect x="484.5" y="53.6" width="16.3" height="3.2" fill="#7d6541"/>
<rect x="500.3" y="53.6" width="13.3" height="3.2" fill="#866d48"/>
<rect x="513.0" y="53.6" width="9.8" height="3.2" fill="#4e3c26"/>
<rect x="522.3" y="53.6" width="26.4" height="3.2" fill="#4f3e27"/>
<rect x="548.2" y="53.6" width="17.0" height="3.2" fill="#8c7450"/>
<rect x="564.7" y="53.6" width="22.2" height="3.2" fill="#7d6541"/>
<rect x="586.4" y="53.6" width="35.0" height="3.2" fill="#59472e"/>
<rect x="380.0" y="56.4" width="25.9" height="5.3" fill="#917954"/>
<rect x="405.4" y="56.4" width="28.4" height="5.3" fill="#826a47"/>
<rect x="433.3" y="56.4" width="12.9" height="5.3" fill="#775f3c"/>
<rect x="445.7" y="56.4" width="17.7" height="5.3" fill="#6a5333"/>
<rect x="462.9" y="56.4" width="9.1" height="5.3" fill="#89714e"/>
<rect x="471.6" y="56.4" width="20.7" height="5.3" fill="#947b55"/>
<rect x="491.8" y="56.4" width="28.1" height="5.3" fill="#7d6440"/>
<rect x="519.4" y="56.4" width="13.6" height="5.3" fill="#8e7652"/>
<rect x="532.6" y="56.4" width="16.5" height="5.3" fill="#806743"/>
<rect x="548.6" y="56.4" width="28.4" height="5.3" fill="#7a613e"/>
<rect x="576.5" y="56.4" width="16.5" height="5.3" fill="#907853"/>
<rect x="592.5" y="56.4" width="17.5" height="5.3" fill="#705837"/>
<rect x="609.5" y="56.4" width="35.9" height="5.3" fill="#8b734f"/>
<rect x="380.0" y="61.2" width="26.9" height="4.4" fill="#6b5434"/>
<rect x="406.4" y="61.2" width="11.6" height="4.4" fill="#967e59"/>
<rect x="417.4" y="61.2" width="35.9" height="4.4" fill="#937a54"/>
<rect x="452.8" y="61.2" width="36.1" height="4.4" fill="#8a724e"/>
<rect x="488.4" y="61.2" width="21.7" height="4.4" fill="#59462d"/>
<rect x="509.6" y="61.2" width="24.6" height="4.4" fill="#7d6440"/>
<rect x="533.7" y="61.2" width="23.2" height="4.4" fill="#7e6642"/>
<rect x="556.5" y="61.2" width="25.0" height="4.4" fill="#846d4a"/>
<rect x="580.9" y="61.2" width="12.2" height="4.4" fill="#7a633f"/>
<rect x="592.6" y="61.2" width="12.1" height="4.4" fill="#826a45"/>
<rect x="604.2" y="61.2" width="29.9" height="4.4" fill="#4c3b24"/>
<rect x="380.0" y="65.1" width="14.5" height="4.9" fill="#8f7752"/>
<rect x="394.0" y="65.1" width="16.2" height="4.9" fill="#866d4a"/>
<rect x="409.7" y="65.1" width="30.6" height="4.9" fill="#957c56"/>
<rect x="439.8" y="65.1" width="14.9" height="4.9" fill="#7c6441"/>
<rect x="454.2" y="65.1" width="24.7" height="4.9" fill="#6e5736"/>
<rect x="478.5" y="65.1" width="23.9" height="4.9" fill="#947b55"/>
<rect x="501.8" y="65.1" width="25.4" height="4.9" fill="#8f7652"/>
<rect x="526.7" y="65.1" width="26.1" height="4.9" fill="#4f3d26"/>
<rect x="552.3" y="65.1" width="27.6" height="4.9" fill="#4a3923"/>
<rect x="579.4" y="65.1" width="13.3" height="4.9" fill="#57452c"/>
<rect x="592.2" y="65.1" width="26.9" height="4.9" fill="#927954"/>
<rect x="380.0" y="69.5" width="18.3" height="3.8" fill="#816944"/>
<rect x="397.8" y="69.5" width="20.4" height="3.8" fill="#816a47"/>
<rect x="417.8" y="69.5" width="23.5" height="3.8" fill="#856c47"/>
<rect x="440.8" y="69.5" width="13.9" height="3.8" fill="#7e6642"/>
<rect x="454.2" y="69.5" width="34.7" height="3.8" fill="#57442c"/>
<rect x="488.4" y="69.5" width="26.5" height="3.8" fill="#96815b"/>
<rect x="514.3" y="69.5" width="19.4" height="3.8" fill="#775f3c"/>
<rect x="533.2" y="69.5" width="10.5" height="3.8" fill="#765f3d"/>
<rect x="543.2" y="69.5" width="13.8" height="3.8" fill="#99835d"/>
<rect x="556.6" y="69.5" width="29.6" height="3.8" fill="#4e3d26"/>
<rect x="585.7" y="69.5" width="18.8" height="3.8" fill="#937e59"/>
<rect x="604.0" y="69.5" width="33.8" height="3.8" fill="#816944"/>
<rect x="380.0" y="72.8" width="29.0" height="3.7" fill="#7f6743"/>
<rect x="408.5" y="72.8" width="14.7" height="3.7" fill="#957c56"/>
<rect x="422.6" y="72.8" width="25.0" height="3.7" fill="#6e5635"/>
<rect x="447.2" y="72.8" width="26.1" height="3.7" fill="#6a5333"/>
<rect x="472.8" y="72.8" width="19.0" height="3.7" fill="#735b39"/>
<rect x="491.3" y="72.8" width="10.6" height="3.7" fill="#8f7752"/>
<rect x="501.3" y="72.8" width="17.4" height="3.7" fill="#8c7450"/>
<rect x="518.2" y="72.8" width="30.6" height="3.7" fill="#8e7651"/>
<rect x="548.3" y="72.8" width="24.3" height="3.7" fill="#755e3c"/>
<rect x="572.1" y="72.8" width="11.7" height="3.7" fill="#846c46"/>
<rect x="583.3" y="72.8" width="8.7" height="3.7" fill="#806743"/>
<rect x="591.5" y="72.8" width="32.5" height="3.7" fill="#7b6340"/>
<rect x="380.0" y="76.0" width="29.9" height="3.3" fill="#7d6541"/>
<rect x="409.4" y="76.0" width="16.1" height="3.3" fill="#5c4930"/>
<rect x="425.0" y="76.0" width="21.5" height="3.3" fill="#7d6440"/>
<rect x="446.0" y="76.0" width="35.9" height="3.3" fill="#6d5635"/>
<rect x="481.4" y="76.0" width="28.9" height="3.3" fill="#534129"/>
<rect x="509.8" y="76.0" width="27.7" height="3.3" fill="#755d3b"/>
<rect x="536.9" y="76.0" width="14.2" height="3.3" fill="#745c3a"/>
<rect x="550.7" y="76.0" width="20.5" height="3.3" fill="#765f3d"/>
<rect x="570.6" y="76.0" width="34.2" height="3.3" fill="#705937"/>
<rect x="604.3" y="76.0" width="11.5" height="3.3" fill="#7d6440"/>
<rect x="380.0" y="78.8" width="31.9" height="3.9" fill="#9d8760"/>
<rect x="411.4" y="78.8" width="13.7" height="3.9" fill="#4d3c25"/>
<rect x="424.6" y="78.8" width="15.5" height="3.9" fill="#4d3b25"/>
<rect x="439.6" y="78.8" width="27.5" height="3.9" fill="#87704d"/>
<rect x="466.6" y="78.8" width="15.6" height="3.9" fill="#6c5534"/>
<rect x="481.7" y="78.8" width="20.8" height="3.9" fill="#745c3a"/>
<rect x="502.0" y="78.8" width="15.6" height="3.9" fill="#79613e"/>
<rect x="517.2" y="78.8" width="32.5" height="3.9" fill="#a28b64"/>
<rect x="549.1" y="78.8" width="14.9" height="3.9" fill="#99835d"/>
<rect x="563.5" y="78.8" width="33.3" height="3.9" fill="#54422a"/>
<rect x="596.3" y="78.8" width="15.7" height="3.9" fill="#7b6340"/>
<rect x="380.0" y="82.2" width="28.3" height="5.2" fill="#4a3923"/>
<rect x="407.8" y="82.2" width="16.0" height="5.2" fill="#6b573b"/>
<rect x="423.3" y="82.2" width="24.8" height="5.2" fill="#735b39"/>
<rect x="447.6" y="82.2" width="33.5" height="5.2" fill="#9d8760"/>
<rect x="480.6" y="82.2" width="27.7" height="5.2" fill="#957c56"/>
<rect x="507.9" y="82.2" width="30.6" height="5.2" fill="#534129"/>
<rect x="538.0" y="82.2" width="34.8" height="5.2" fill="#8d7551"/>
<rect x="572.3" y="82.2" width="17.1" height="5.2" fill="#8b734f"/>
<rect x="588.9" y="82.2" width="34.9" height="5.2" fill="#a38c64"/>
<rect x="380.0" y="86.9" width="9.7" height="5.4" fill="#705937"/>
<rect x="389.2" y="86.9" width="31.7" height="5.4" fill="#907854"/>
<rect x="420.4" y="86.9" width="11.3" height="5.4" fill="#6c5534"/>
<rect x="431.2" y="86.9" width="12.5" height="5.4" fill="#77603d"/>
<rect x="443.2" y="86.9" width="13.2" height="5.4" fill="#846d4a"/>
<rect x="455.9" y="86.9" width="31.8" height="5.4" fill="#937a55"/>
<rect x="487.2" y="86.9" width="28.8" height="5.4" fill="#79613e"/>
<rect x="515.5" y="86.9" width="20.3" height="5.4" fill="#514028"/>
<rect x="535.4" y="86.9" width="34.0" height="5.4" fill="#59472e"/>
<rect x="568.9" y="86.9" width="26.2" height="5.4" fill="#6e5635"/>
<rect x="594.6" y="86.9" width="24.7" height="5.4" fill="#78613e"/>
<rect x="380.0" y="91.8" width="19.1" height="3.6" fill="#524028"/>
<rect x="398.6" y="91.8" width="34.4" height="3.6" fill="#907955"/>
<rect x="432.5" y="91.8" width="18.1" height="3.6" fill="#856d4b"/>
<rect x="450.1" y="91.8" width="19.5" height="3.6" fill="#775e3c"/>
<rect x="469.1" y="91.8" width="32.8" height="3.6" fill="#7f6743"/>
<rect x="501.3" y="91.8" width="19.3" height="3.6" fill="#8d7450"/>
<rect x="520.1" y="91.8" width="13.4" height="3.6" fill="#8b734f"/>
<rect x="533.1" y="91.8" width="14.0" height="3.6" fill="#5a482e"/>
<rect x="546.6" y="91.8" width="26.5" height="3.6" fill="#4e3d26"/>
<rect x="572.5" y="91.8" width="26.1" height="3.6" fill="#87704d"/>
<rect x="598.2" y="91.8" width="21.7" height="3.6" fill="#56442b"/>
<rect x="380.0" y="94.9" width="18.9" height="5.2" fill="#8d7550"/>
<rect x="398.4" y="94.9" width="27.2" height="5.2" fill="#7f6745"/>
<rect x="425.1" y="94.9" width="34.3" height="5.2" fill="#775f3c"/>
<rect x="458.9" y="94.9" width="15.8" height="5.2" fill="#8b734f"/>
<rect x="474.2" y="94.9" width="15.2" height="5.2" fill="#7d6440"/>
<rect x="488.9" y="94.9" width="9.6" height="5.2" fill="#78603d"/>
<rect x="498.0" y="94.9" width="18.9" height="5.2" fill="#79603d"/>
<rect x="516.4" y="94.9" width="36.0" height="5.2" fill="#785f3c"/>
<rect x="551.9" y="94.9" width="19.6" height="5.2" fill="#9b855f"/>
<rect x="571.0" y="94.9" width="33.6" height="5.2" fill="#846d4a"/>
<rect x="604.0" y="94.9" width="20.9" height="5.2" fill="#775f3d"/>
<rect x="380.0" y="99.6" width="36.2" height="3.2" fill="#9d8660"/>
<rect x="415.7" y="99.6" width="10.3" height="3.2" fill="#876e48"/>
<rect x="425.5" y="99.6" width="30.4" height="3.2" fill="#7c6441"/>
<rect x="455.4" y="99.6" width="26.2" height="3.2" fill="#99835d"/>
<rect x="481.1" y="99.6" width="10.6" height="3.2" fill="#7d6440"/>
<rect x="491.2" y="99.6" width="28.4" height="3.2" fill="#927d59"/>
<rect x="519.1" y="99.6" width="11.5" height="3.2" fill="#7c6440"/>
<rect x="530.0" y="99.6" width="21.5" height="3.2" fill="#79603d"/>
<rect x="551.0" y="99.6" width="30.4" height="3.2" fill="#7c6441"/>
<rect x="580.9" y="99.6" width="22.2" height="3.2" fill="#534129"/>
<rect x="602.6" y="99.6" width="17.6" height="3.2" fill="#5d4a30"/>
<rect x="380.0" y="102.3" width="12.3" height="5.0" fill="#927954"/>
<rect x="391.8" y="102.3" width="18.2" height="5.0" fill="#947b54"/>
<rect x="409.4" y="102.3" width="10.5" height="5.0" fill="#89714e"/>
<rect x="419.4" y="102.3" width="21.6" height="5.0" fill="#937a55"/>
<rect x="440.5" y="102.3" width="26.2" height="5.0" fill="#78613e"/>
<rect x="466.1" y="102.3" width="30.8" height="5.0" fill="#4d3c25"/>
<rect x="496.5" y="102.3" width="31.0" height="5.0" fill="#866f4c"/>
<rect x="526.9" y="102.3" width="33.5" height="5.0" fill="#8f7752"/>
<rect x="560.0" y="102.3" width="36.1" height="5.0" fill="#54422a"/>
<rect x="595.6" y="102.3" width="23.8" height="5.0" fill="#745c3a"/>
<rect x="380.0" y="106.8" width="28.0" height="5.4" fill="#775f3c"/>
<rect x="407.5" y="106.8" width="25.7" height="5.4" fill="#715d40"/>
<rect x="432.8" y="106.8" width="19.0" height="5.4" fill="#7b6340"/>
<rect x="451.3" y="106.8" width="31.6" height="5.4" fill="#6d5635"/>
<rect x="482.4" y="106.8" width="17.7" height="5.4" fill="#7b623f"/>
<rect x="499.6" y="106.8" width="36.4" height="5.4" fill="#4e3d26"/>
<rect x="535.5" y="106.8" width="33.2" height="5.4" fill="#78613e"/>
<rect x="568.2" y="106.8" width="17.1" height="5.4" fill="#846d4a"/>
<rect x="584.7" y="106.8" width="14.4" height="5.4" fill="#4c3b24"/>
<rect x="598.6" y="106.8" width="12.5" height="5.4" fill="#88704d"/>
<rect x="610.7" y="106.8" width="34.1" height="5.4" fill="#9d8760"/>
<rect x="380.0" y="111.7" width="29.8" height="3.7" fill="#5b482f"/>
<rect x="409.3" y="111.7" width="20.4" height="3.7" fill="#836a45"/>
<rect x="429.1" y="111.7" width="28.2" height="3.7" fill="#7a633f"/>
<rect x="456.8" y="111.7" width="12.8" height="3.7" fill="#5d4a30"/>
<rect x="469.1" y="111.7" width="9.5" height="3.7" fill="#705837"/>
<rect x="478.1" y="111.7" width="20.8" height="3.7" fill="#77603d"/>
<rect x="498.4" y="111.7" width="11.4" height="3.7" fill="#705937"/>
<rect x="509.3" y="111.7" width="28.8" height="3.7" fill="#56442c"/>
<rect x="537.7" y="111.7" width="22.9" height="3.7" fill="#524028"/>
<rect x="560.0" y="111.7" width="9.6" height="3.7" fill="#9e8861"/>
<rect x="569.2" y="111.7" width="11.2" height="3.7" fill="#79613d"/>
<rect x="579.9" y="111.7" width="22.7" height="3.7" fill="#836a45"/>
<rect x="602.1" y="111.7" width="12.6" height="3.7" fill="#78603d"/>
</g></g>
<g filter="url(#b2)">
<path d="M450.0 28.0 L475.0 28.0 L475.0 105.0 L450.0 105.0 Z" fill="#4a3a28" opacity="0.55"/>
<path d="M384.0 0.0 L450.0 0.0 L450.0 70.0 L384.0 70.0 Z" fill="#b09674" opacity="0.25"/>
<path d="M532.0 80.0 L574.0 80.0 L574.0 110.0 L532.0 110.0 Z" fill="#3a2c1e" opacity="0.45"/>
</g>
<g filter="url(#b1)">
<rect x="37" y="2" width="2.5" height="116" fill="#3a2a1a" opacity="0.5"/>
<rect x="208" y="0" width="2" height="90" fill="#3a2a1a" opacity="0.55"/>
<rect x="188" y="2" width="1.5" height="88" fill="#3a2a1a" opacity="0.35"/>
<rect x="237" y="0" width="3" height="88" fill="#3a2a1a" opacity="0.5"/>
<rect x="165" y="2" width="1.5" height="68" fill="#3a2a1a" opacity="0.3"/>
<rect x="406" y="0" width="2.5" height="80" fill="#3a2a1a" opacity="0.55"/>
<rect x="450" y="0" width="2" height="90" fill="#3a2a1a" opacity="0.35"/>
<rect x="472" y="55" width="3" height="47" fill="#3a2a1a" opacity="0.85"/>
<rect x="572" y="0" width="2.5" height="100" fill="#3a2a1a" opacity="0.45"/>
<rect x="492" y="0" width="1.5" height="70" fill="#3a2a1a" opacity="0.3"/>
<path d="M121 28 L104 70 L83 112" stroke="#3e2c1c" stroke-width="2.5" fill="none" opacity="0.55"/>
<rect x="0" y="30" width="240" height="2.5" fill="#3e2c1c" opacity="0.35"/>
<rect x="0" y="102" width="132" height="2.5" fill="#3e2c1c" opacity="0.4"/>
<rect x="383" y="45" width="225" height="2.5" fill="#3e2c1c" opacity="0.3"/>
<rect x="452" y="100" width="156" height="2.5" fill="#3e2c1c" opacity="0.35"/>
</g>
<g filter="url(#b4)">
<rect x="157" y="0" width="80" height="95" fill="#c8a670" opacity="0.35"/>
<rect x="384" y="0" width="60" height="80" fill="#b89a6c" opacity="0.2"/>
</g>
<g filter="url(#b1)">
<path d="M239.0 0.0 L384.0 0.0 L384.0 42.0 L239.0 42.0 Z" fill="#2a2017"/>
<rect x="310" y="0" width="6" height="42" fill="#16110c"/>
</g>
<g filter="url(#b2)">
<path d="M239.0 40.0 L384.0 40.0 L384.0 75.0 L342.0 78.0 L302.0 84.0 L252.0 82.0 L239.0 78.0 Z" fill="#6e5a3e"/>
</g>
<path d="M0.0 112.0 L137.0 120.0 L197.0 90.0 L242.0 78.0 L252.0 170.0 L0.0 170.0 Z" fill="#9a7e58" filter="url(#b4)" opacity="1"/>
<path d="M384.0 100.0 L608.0 100.0 L608.0 158.0 L384.0 150.0 Z" fill="#8a724e" filter="url(#b4)" opacity="1"/>
<path d="M0.0 150.0 L112.0 154.0 L212.0 142.0 L252.0 120.0 L282.0 175.0 L0.0 172.0 Z" fill="#b09068" filter="url(#b4)" opacity="1"/>
<path d="M202.0 95.0 L247.0 80.0 L302.0 80.0 L327.0 92.0 L347.0 125.0 L377.0 150.0 L392.0 178.0 L252.0 178.0 L214.0 155.0 L202.0 120.0 Z" fill="#c4a272" filter="url(#b4)" opacity="1"/>
<path d="M377.0 148.0 L452.0 152.0 L552.0 158.0 L608.0 160.0 L608.0 186.0 L532.0 190.0 L392.0 183.0 Z" fill="#a88c62" filter="url(#b4)" opacity="1"/>
<clipPath id="k3"><path d="M0.0 118.0 L52.0 112.0 L137.0 124.0 L162.0 140.0 L152.0 158.0 L82.0 150.0 L0.0 156.0 Z"/></clipPath>
<g clip-path="url(#k3)"><g filter="url(#b2)">
<rect x="-3.0" y="110.0" width="18.5" height="3.9" fill="#826a4b"/>
<rect x="15.0" y="110.0" width="12.7" height="3.9" fill="#b39a73"/>
<rect x="27.1" y="110.0" width="13.6" height="3.9" fill="#7e6748"/>
<rect x="40.2" y="110.0" width="21.6" height="3.9" fill="#8f7654"/>
<rect x="61.3" y="110.0" width="10.4" height="3.9" fill="#9e825d"/>
<rect x="71.3" y="110.0" width="9.2" height="3.9" fill="#876f4e"/>
<rect x="80.0" y="110.0" width="20.0" height="3.9" fill="#6d573b"/>
<rect x="99.5" y="110.0" width="21.8" height="3.9" fill="#9a7f5a"/>
<rect x="120.8" y="110.0" width="20.2" height="3.9" fill="#4b3b27"/>
<rect x="140.5" y="110.0" width="22.4" height="3.9" fill="#ba9f77"/>
<rect x="162.4" y="110.0" width="18.5" height="3.9" fill="#403020"/>
<rect x="-3.0" y="113.4" width="21.3" height="4.5" fill="#3c2d1d"/>
<rect x="17.8" y="113.4" width="16.8" height="4.5" fill="#88704f"/>
<rect x="34.1" y="113.4" width="14.4" height="4.5" fill="#705a3d"/>
<rect x="47.9" y="113.4" width="16.3" height="4.5" fill="#765f41"/>
<rect x="63.8" y="113.4" width="20.7" height="4.5" fill="#bca279"/>
<rect x="84.0" y="113.4" width="18.0" height="4.5" fill="#9f835d"/>
<rect x="101.5" y="113.4" width="10.8" height="4.5" fill="#a98c64"/>
<rect x="111.7" y="113.4" width="10.2" height="4.5" fill="#8c7452"/>
<rect x="121.4" y="113.4" width="13.0" height="4.5" fill="#997e59"/>
<rect x="133.9" y="113.4" width="16.8" height="4.5" fill="#b59b73"/>
<rect x="150.2" y="113.4" width="16.1" height="4.5" fill="#a38660"/>
<rect x="-3.0" y="117.4" width="19.0" height="5.8" fill="#473725"/>
<rect x="15.5" y="117.4" width="6.5" height="5.8" fill="#9e825c"/>
<rect x="21.6" y="117.4" width="7.7" height="5.8" fill="#a98c64"/>
<rect x="28.7" y="117.4" width="17.4" height="5.8" fill="#493926"/>
<rect x="45.7" y="117.4" width="20.4" height="5.8" fill="#443422"/>
<rect x="65.6" y="117.4" width="12.8" height="5.8" fill="#8f7654"/>
<rect x="77.8" y="117.4" width="8.9" height="5.8" fill="#88704f"/>
<rect x="86.3" y="117.4" width="12.0" height="5.8" fill="#b39972"/>
<rect x="97.8" y="117.4" width="18.4" height="5.8" fill="#473725"/>
<rect x="115.7" y="117.4" width="7.4" height="5.8" fill="#8f7654"/>
<rect x="122.6" y="117.4" width="18.7" height="5.8" fill="#a48861"/>
<rect x="140.8" y="117.4" width="8.4" height="5.8" fill="#423321"/>
<rect x="148.6" y="117.4" width="14.0" height="5.8" fill="#977c57"/>
<rect x="162.2" y="117.4" width="13.5" height="5.8" fill="#997e59"/>
<rect x="-3.0" y="122.7" width="8.5" height="4.5" fill="#a98c64"/>
<rect x="5.0" y="122.7" width="7.4" height="4.5" fill="#846c4c"/>
<rect x="11.9" y="122.7" width="8.4" height="4.5" fill="#6e583c"/>
<rect x="19.8" y="122.7" width="7.4" height="4.5" fill="#3c2d1d"/>
<rect x="26.7" y="122.7" width="11.3" height="4.5" fill="#bea47a"/>
<rect x="37.5" y="122.7" width="9.3" height="4.5" fill="#766042"/>
<rect x="46.3" y="122.7" width="11.5" height="4.5" fill="#9a7f5a"/>
<rect x="57.4" y="122.7" width="20.3" height="4.5" fill="#715a3e"/>
<rect x="77.2" y="122.7" width="21.5" height="4.5" fill="#3f301f"/>
<rect x="98.2" y="122.7" width="14.2" height="4.5" fill="#6d573b"/>
<rect x="111.9" y="122.7" width="16.3" height="4.5" fill="#897150"/>
<rect x="127.8" y="122.7" width="14.6" height="4.5" fill="#866e4e"/>
<rect x="141.9" y="122.7" width="9.6" height="4.5" fill="#b39972"/>
<rect x="151.0" y="122.7" width="9.9" height="4.5" fill="#6d573b"/>
<rect x="160.4" y="122.7" width="7.0" height="4.5" fill="#776042"/>
<rect x="-3.0" y="126.7" width="12.4" height="5.0" fill="#715b3e"/>
<rect x="8.9" y="126.7" width="14.5" height="5.0" fill="#6f593d"/>
<rect x="22.9" y="126.7" width="10.9" height="5.0" fill="#b69c74"/>
<rect x="33.3" y="126.7" width="17.8" height="5.0" fill="#705a3d"/>
<rect x="50.6" y="126.7" width="9.6" height="5.0" fill="#6d573b"/>
<rect x="59.8" y="126.7" width="6.7" height="5.0" fill="#9f835d"/>
<rect x="66.0" y="126.7" width="18.7" height="5.0" fill="#8c7452"/>
<rect x="84.3" y="126.7" width="19.4" height="5.0" fill="#7f6849"/>
<rect x="103.2" y="126.7" width="8.9" height="5.0" fill="#a58962"/>
<rect x="111.6" y="126.7" width="9.5" height="5.0" fill="#665136"/>
<rect x="120.6" y="126.7" width="21.0" height="5.0" fill="#9a7f5a"/>
<rect x="141.1" y="126.7" width="16.0" height="5.0" fill="#ae956f"/>
<rect x="156.7" y="126.7" width="15.8" height="5.0" fill="#473624"/>
<rect x="-3.0" y="131.3" width="19.3" height="5.0" fill="#8d7453"/>
<rect x="15.8" y="131.3" width="11.8" height="5.0" fill="#9f835d"/>
<rect x="27.1" y="131.3" width="6.9" height="5.0" fill="#453523"/>
<rect x="33.5" y="131.3" width="18.4" height="5.0" fill="#8a7251"/>
<rect x="51.4" y="131.3" width="17.6" height="5.0" fill="#725c3f"/>
<rect x="68.5" y="131.3" width="16.7" height="5.0" fill="#a78a63"/>
<rect x="84.8" y="131.3" width="14.1" height="5.0" fill="#3f301f"/>
<rect x="98.3" y="131.3" width="19.8" height="5.0" fill="#725c3f"/>
<rect x="117.6" y="131.3" width="20.0" height="5.0" fill="#473725"/>
<rect x="137.1" y="131.3" width="13.9" height="5.0" fill="#a58962"/>
<rect x="150.5" y="131.3" width="21.2" height="5.0" fill="#967b57"/>
<rect x="-3.0" y="135.8" width="7.8" height="4.9" fill="#6a5539"/>
<rect x="4.3" y="135.8" width="10.4" height="4.9" fill="#b99f77"/>
<rect x="14.1" y="135.8" width="21.2" height="4.9" fill="#9d815c"/>
<rect x="34.9" y="135.8" width="16.4" height="4.9" fill="#b69c74"/>
<rect x="50.8" y="135.8" width="9.5" height="4.9" fill="#6f593c"/>
<rect x="59.7" y="135.8" width="22.0" height="4.9" fill="#bea47a"/>
<rect x="81.2" y="135.8" width="19.8" height="4.9" fill="#6e583c"/>
<rect x="100.5" y="135.8" width="19.8" height="4.9" fill="#b59c74"/>
<rect x="119.9" y="135.8" width="9.5" height="4.9" fill="#b39a73"/>
<rect x="128.9" y="135.8" width="10.7" height="4.9" fill="#a38760"/>
<rect x="139.1" y="135.8" width="16.8" height="4.9" fill="#876f4f"/>
<rect x="155.5" y="135.8" width="14.2" height="4.9" fill="#7e6748"/>
<rect x="-3.0" y="140.2" width="22.3" height="5.3" fill="#675137"/>
<rect x="18.8" y="140.2" width="8.3" height="5.3" fill="#a48861"/>
<rect x="26.6" y="140.2" width="13.1" height="5.3" fill="#8c7452"/>
<rect x="39.2" y="140.2" width="6.9" height="5.3" fill="#9b7f5a"/>
<rect x="45.6" y="140.2" width="10.7" height="5.3" fill="#9b7f5a"/>
<rect x="55.9" y="140.2" width="11.9" height="5.3" fill="#6e583c"/>
<rect x="67.3" y="140.2" width="22.3" height="5.3" fill="#987d58"/>
<rect x="89.1" y="140.2" width="21.0" height="5.3" fill="#a0845e"/>
<rect x="109.5" y="140.2" width="11.4" height="5.3" fill="#8e7554"/>
<rect x="120.4" y="140.2" width="15.6" height="5.3" fill="#9d815c"/>
<rect x="135.5" y="140.2" width="17.8" height="5.3" fill="#413220"/>
<rect x="152.8" y="140.2" width="12.9" height="5.3" fill="#9e825c"/>
<rect x="-3.0" y="145.0" width="12.7" height="6.0" fill="#675237"/>
<rect x="9.2" y="145.0" width="17.9" height="6.0" fill="#6b553a"/>
<rect x="26.6" y="145.0" width="18.9" height="6.0" fill="#977c58"/>
<rect x="45.0" y="145.0" width="16.8" height="6.0" fill="#af956f"/>
<rect x="61.2" y="145.0" width="12.0" height="6.0" fill="#866e4e"/>
<rect x="72.8" y="145.0" width="13.0" height="6.0" fill="#9b805b"/>
<rect x="85.3" y="145.0" width="15.9" height="6.0" fill="#897050"/>
<rect x="100.7" y="145.0" width="22.0" height="6.0" fill="#655035"/>
<rect x="122.2" y="145.0" width="12.0" height="6.0" fill="#655035"/>
<rect x="133.6" y="145.0" width="7.8" height="6.0" fill="#8d7553"/>
<rect x="140.9" y="145.0" width="8.6" height="6.0" fill="#a98c64"/>
<rect x="149.1" y="145.0" width="9.2" height="6.0" fill="#9a7f5a"/>
<rect x="157.7" y="145.0" width="9.8" height="6.0" fill="#9f835d"/>
<rect x="-3.0" y="150.5" width="7.6" height="5.8" fill="#665136"/>
<rect x="4.1" y="150.5" width="19.1" height="5.8" fill="#8d7453"/>
<rect x="22.7" y="150.5" width="15.0" height="5.8" fill="#a48761"/>
<rect x="37.3" y="150.5" width="7.6" height="5.8" fill="#b39a73"/>
<rect x="44.4" y="150.5" width="20.8" height="5.8" fill="#a48861"/>
<rect x="64.7" y="150.5" width="14.4" height="5.8" fill="#9f835d"/>
<rect x="78.6" y="150.5" width="13.4" height="5.8" fill="#a0845e"/>
<rect x="91.5" y="150.5" width="15.0" height="5.8" fill="#b49b73"/>
<rect x="106.0" y="150.5" width="16.3" height="5.8" fill="#a0845e"/>
<rect x="121.8" y="150.5" width="10.3" height="5.8" fill="#b19871"/>
<rect x="131.7" y="150.5" width="11.2" height="5.8" fill="#9b805b"/>
<rect x="142.3" y="150.5" width="15.2" height="5.8" fill="#987d58"/>
<rect x="157.0" y="150.5" width="20.8" height="5.8" fill="#685238"/>
<rect x="-3.0" y="155.8" width="20.0" height="4.7" fill="#c0a57b"/>
<rect x="16.5" y="155.8" width="15.2" height="4.7" fill="#6e583c"/>
<rect x="31.2" y="155.8" width="7.4" height="4.7" fill="#bea47a"/>
<rect x="38.1" y="155.8" width="21.1" height="4.7" fill="#887050"/>
<rect x="58.8" y="155.8" width="19.4" height="4.7" fill="#a1855e"/>
<rect x="77.6" y="155.8" width="9.1" height="4.7" fill="#866e4e"/>
<rect x="86.3" y="155.8" width="9.3" height="4.7" fill="#88704f"/>
<rect x="95.1" y="155.8" width="9.9" height="4.7" fill="#88704f"/>
<rect x="104.5" y="155.8" width="16.5" height="4.7" fill="#826a4b"/>
<rect x="120.4" y="155.8" width="10.9" height="4.7" fill="#40301f"/>
<rect x="130.9" y="155.8" width="17.7" height="4.7" fill="#685237"/>
<rect x="148.1" y="155.8" width="8.5" height="4.7" fill="#a1855f"/>
<rect x="156.0" y="155.8" width="21.1" height="4.7" fill="#8c7452"/>
<rect x="-3.0" y="160.0" width="19.3" height="5.2" fill="#6b553a"/>
<rect x="15.8" y="160.0" width="21.0" height="5.2" fill="#a2865f"/>
<rect x="36.3" y="160.0" width="15.6" height="5.2" fill="#a1855e"/>
<rect x="51.4" y="160.0" width="19.3" height="5.2" fill="#846c4c"/>
<rect x="70.1" y="160.0" width="20.9" height="5.2" fill="#a88b63"/>
<rect x="90.5" y="160.0" width="17.4" height="5.2" fill="#846d4d"/>
<rect x="107.4" y="160.0" width="15.9" height="5.2" fill="#80694a"/>
<rect x="122.8" y="160.0" width="9.4" height="5.2" fill="#bfa47b"/>
<rect x="131.7" y="160.0" width="10.1" height="5.2" fill="#463624"/>
<rect x="141.4" y="160.0" width="11.5" height="5.2" fill="#816a4a"/>
<rect x="152.3" y="160.0" width="19.0" height="5.2" fill="#665137"/>
</g></g>
<clipPath id="k4"><path d="M388.0 106.0 L452.0 102.0 L532.0 108.0 L608.0 100.0 L608.0 150.0 L532.0 154.0 L452.0 146.0 L388.0 136.0 Z"/></clipPath>
<g clip-path="url(#k4)"><g filter="url(#b2)">
<rect x="385.0" y="98.0" width="8.9" height="6.4" fill="#846d4b"/>
<rect x="393.4" y="98.0" width="12.1" height="6.4" fill="#876f4d"/>
<rect x="405.0" y="98.0" width="21.6" height="6.4" fill="#927955"/>
<rect x="426.0" y="98.0" width="9.9" height="6.4" fill="#846d4b"/>
<rect x="435.4" y="98.0" width="8.5" height="6.4" fill="#7b6547"/>
<rect x="443.4" y="98.0" width="10.5" height="6.4" fill="#907853"/>
<rect x="453.4" y="98.0" width="11.6" height="6.4" fill="#8c7451"/>
<rect x="464.4" y="98.0" width="17.9" height="6.4" fill="#69573a"/>
<rect x="481.8" y="98.0" width="9.5" height="6.4" fill="#36291b"/>
<rect x="490.8" y="98.0" width="21.3" height="6.4" fill="#7d6749"/>
<rect x="511.6" y="98.0" width="14.1" height="6.4" fill="#6c5a3d"/>
<rect x="525.2" y="98.0" width="15.8" height="6.4" fill="#a68e69"/>
<rect x="540.4" y="98.0" width="12.9" height="6.4" fill="#a18a65"/>
<rect x="552.8" y="98.0" width="12.0" height="6.4" fill="#88704d"/>
<rect x="564.3" y="98.0" width="20.3" height="6.4" fill="#6c5a3d"/>
<rect x="584.1" y="98.0" width="7.3" height="6.4" fill="#7b6547"/>
<rect x="590.9" y="98.0" width="18.4" height="6.4" fill="#907753"/>
<rect x="608.8" y="98.0" width="19.5" height="6.4" fill="#856e4c"/>
<rect x="385.0" y="103.9" width="18.8" height="4.6" fill="#9f8863"/>
<rect x="403.3" y="103.9" width="11.7" height="4.6" fill="#776245"/>
<rect x="414.5" y="103.9" width="7.9" height="4.6" fill="#826b4c"/>
<rect x="421.9" y="103.9" width="13.6" height="4.6" fill="#ad946d"/>
<rect x="435.0" y="103.9" width="19.9" height="4.6" fill="#927a55"/>
<rect x="454.4" y="103.9" width="21.3" height="4.6" fill="#a8906a"/>
<rect x="475.2" y="103.9" width="12.8" height="4.6" fill="#856e4e"/>
<rect x="487.5" y="103.9" width="19.4" height="4.6" fill="#6f5d3f"/>
<rect x="506.3" y="103.9" width="20.5" height="4.6" fill="#604f34"/>
<rect x="526.3" y="103.9" width="16.3" height="4.6" fill="#8a734f"/>
<rect x="542.1" y="103.9" width="15.6" height="4.6" fill="#6a583c"/>
<rect x="557.2" y="103.9" width="19.6" height="4.6" fill="#786245"/>
<rect x="576.4" y="103.9" width="21.8" height="4.6" fill="#645337"/>
<rect x="597.6" y="103.9" width="18.6" height="4.6" fill="#7c6648"/>
<rect x="385.0" y="108.0" width="19.7" height="5.9" fill="#6a583b"/>
<rect x="404.2" y="108.0" width="21.5" height="5.9" fill="#866f4c"/>
<rect x="425.2" y="108.0" width="20.5" height="5.9" fill="#3e3020"/>
<rect x="445.2" y="108.0" width="19.2" height="5.9" fill="#604f34"/>
<rect x="463.9" y="108.0" width="12.1" height="5.9" fill="#aa926b"/>
<rect x="475.5" y="108.0" width="14.4" height="5.9" fill="#977e58"/>
<rect x="489.4" y="108.0" width="7.8" height="5.9" fill="#937b56"/>
<rect x="496.7" y="108.0" width="21.5" height="5.9" fill="#a58d68"/>
<rect x="517.7" y="108.0" width="18.4" height="5.9" fill="#a9916b"/>
<rect x="535.6" y="108.0" width="19.1" height="5.9" fill="#403222"/>
<rect x="554.2" y="108.0" width="10.6" height="5.9" fill="#a08864"/>
<rect x="564.3" y="108.0" width="8.0" height="5.9" fill="#36291b"/>
<rect x="571.8" y="108.0" width="20.5" height="5.9" fill="#8d7551"/>
<rect x="591.8" y="108.0" width="10.7" height="5.9" fill="#6a583b"/>
<rect x="602.0" y="108.0" width="9.6" height="5.9" fill="#493a28"/>
<rect x="385.0" y="113.4" width="10.0" height="3.9" fill="#866e4c"/>
<rect x="394.5" y="113.4" width="6.7" height="3.9" fill="#856e4e"/>
<rect x="400.7" y="113.4" width="7.1" height="3.9" fill="#7d6749"/>
<rect x="407.3" y="113.4" width="9.8" height="3.9" fill="#745f42"/>
<rect x="416.6" y="113.4" width="16.7" height="3.9" fill="#ab936c"/>
<rect x="432.9" y="113.4" width="10.3" height="3.9" fill="#907853"/>
<rect x="442.7" y="113.4" width="11.2" height="3.9" fill="#443625"/>
<rect x="453.4" y="113.4" width="7.0" height="3.9" fill="#b19870"/>
<rect x="459.9" y="113.4" width="13.0" height="3.9" fill="#3c2e1f"/>
<rect x="472.3" y="113.4" width="20.6" height="3.9" fill="#856e4c"/>
<rect x="492.4" y="113.4" width="14.5" height="3.9" fill="#69573a"/>
<rect x="506.5" y="113.4" width="9.8" height="3.9" fill="#7c6648"/>
<rect x="515.7" y="113.4" width="12.7" height="3.9" fill="#9e8763"/>
<rect x="528.0" y="113.4" width="21.2" height="3.9" fill="#776144"/>
<rect x="548.7" y="113.4" width="13.8" height="3.9" fill="#937b56"/>
<rect x="561.9" y="113.4" width="22.1" height="3.9" fill="#493a28"/>
<rect x="583.5" y="113.4" width="14.1" height="3.9" fill="#826c4c"/>
<rect x="597.1" y="113.4" width="21.3" height="3.9" fill="#68563a"/>
<rect x="385.0" y="116.9" width="21.7" height="3.6" fill="#8f7753"/>
<rect x="406.2" y="116.9" width="16.1" height="3.6" fill="#8b734f"/>
<rect x="421.9" y="116.9" width="11.3" height="3.6" fill="#8b7450"/>
<rect x="432.7" y="116.9" width="12.6" height="3.6" fill="#ab936c"/>
<rect x="444.8" y="116.9" width="21.7" height="3.6" fill="#776144"/>
<rect x="465.9" y="116.9" width="16.3" height="3.6" fill="#ad956e"/>
<rect x="481.7" y="116.9" width="8.7" height="3.6" fill="#6a583b"/>
<rect x="490.0" y="116.9" width="11.5" height="3.6" fill="#7a6446"/>
<rect x="501.0" y="116.9" width="17.8" height="3.6" fill="#957d57"/>
<rect x="518.3" y="116.9" width="22.1" height="3.6" fill="#786345"/>
<rect x="539.9" y="116.9" width="19.8" height="3.6" fill="#745e42"/>
<rect x="559.2" y="116.9" width="7.7" height="3.6" fill="#b19870"/>
<rect x="566.4" y="116.9" width="7.0" height="3.6" fill="#7f684a"/>
<rect x="572.9" y="116.9" width="14.1" height="3.6" fill="#8e7652"/>
<rect x="586.5" y="116.9" width="14.5" height="3.6" fill="#967d57"/>
<rect x="600.5" y="116.9" width="18.3" height="3.6" fill="#907853"/>
<rect x="385.0" y="120.0" width="21.5" height="5.3" fill="#836d4d"/>
<rect x="406.0" y="120.0" width="7.4" height="5.3" fill="#614f35"/>
<rect x="412.9" y="120.0" width="18.5" height="5.3" fill="#947b56"/>
<rect x="430.9" y="120.0" width="16.4" height="5.3" fill="#483a28"/>
<rect x="446.7" y="120.0" width="20.4" height="5.3" fill="#aa926b"/>
<rect x="466.7" y="120.0" width="15.2" height="5.3" fill="#36291b"/>
<rect x="481.4" y="120.0" width="9.6" height="5.3" fill="#a68e68"/>
<rect x="490.5" y="120.0" width="13.7" height="5.3" fill="#796346"/>
<rect x="503.8" y="120.0" width="18.1" height="5.3" fill="#826b4c"/>
<rect x="521.4" y="120.0" width="10.3" height="5.3" fill="#3f3121"/>
<rect x="531.2" y="120.0" width="15.9" height="5.3" fill="#87704d"/>
<rect x="546.6" y="120.0" width="10.4" height="5.3" fill="#ad956d"/>
<rect x="556.5" y="120.0" width="12.6" height="5.3" fill="#3e3021"/>
<rect x="568.6" y="120.0" width="15.1" height="5.3" fill="#8a734f"/>
<rect x="583.2" y="120.0" width="21.8" height="5.3" fill="#745f42"/>
<rect x="604.5" y="120.0" width="8.4" height="5.3" fill="#7a6447"/>
<rect x="385.0" y="124.8" width="16.2" height="5.4" fill="#483927"/>
<rect x="400.7" y="124.8" width="9.0" height="5.4" fill="#776144"/>
<rect x="409.1" y="124.8" width="7.7" height="5.4" fill="#8e7652"/>
<rect x="416.3" y="124.8" width="19.3" height="5.4" fill="#493a28"/>
<rect x="435.2" y="124.8" width="9.5" height="5.4" fill="#69573b"/>
<rect x="444.2" y="124.8" width="16.0" height="5.4" fill="#a8906a"/>
<rect x="459.6" y="124.8" width="8.1" height="5.4" fill="#ad956e"/>
<rect x="467.3" y="124.8" width="7.6" height="5.4" fill="#725d41"/>
<rect x="474.4" y="124.8" width="17.4" height="5.4" fill="#3b2e1f"/>
<rect x="491.3" y="124.8" width="7.9" height="5.4" fill="#907853"/>
<rect x="498.8" y="124.8" width="15.0" height="5.4" fill="#756043"/>
<rect x="513.3" y="124.8" width="16.4" height="5.4" fill="#846d4b"/>
<rect x="529.2" y="124.8" width="9.5" height="5.4" fill="#876f4d"/>
<rect x="538.2" y="124.8" width="7.1" height="5.4" fill="#796346"/>
<rect x="544.8" y="124.8" width="18.6" height="5.4" fill="#68563a"/>
<rect x="563.0" y="124.8" width="10.5" height="5.4" fill="#766043"/>
<rect x="573.0" y="124.8" width="21.9" height="5.4" fill="#af966f"/>
<rect x="594.3" y="124.8" width="8.1" height="5.4" fill="#7f684a"/>
<rect x="601.9" y="124.8" width="15.8" height="5.4" fill="#3e3121"/>
<rect x="385.0" y="129.7" width="22.2" height="6.4" fill="#745f42"/>
<rect x="406.7" y="129.7" width="15.0" height="6.4" fill="#a18a65"/>
<rect x="421.2" y="129.7" width="20.8" height="6.4" fill="#a08964"/>
<rect x="441.4" y="129.7" width="11.2" height="6.4" fill="#af966f"/>
<rect x="452.2" y="129.7" width="22.5" height="6.4" fill="#947c56"/>
<rect x="474.1" y="129.7" width="15.9" height="6.4" fill="#625136"/>
<rect x="489.5" y="129.7" width="8.2" height="6.4" fill="#8c7451"/>
<rect x="497.2" y="129.7" width="8.4" height="6.4" fill="#8a724f"/>
<rect x="505.1" y="129.7" width="8.7" height="6.4" fill="#89714e"/>
<rect x="513.3" y="129.7" width="22.1" height="6.4" fill="#6a583b"/>
<rect x="534.9" y="129.7" width="15.2" height="6.4" fill="#826b4c"/>
<rect x="549.6" y="129.7" width="21.3" height="6.4" fill="#806a4b"/>
<rect x="570.4" y="129.7" width="20.5" height="6.4" fill="#6a573b"/>
<rect x="590.4" y="129.7" width="11.8" height="6.4" fill="#776144"/>
<rect x="601.7" y="129.7" width="22.5" height="6.4" fill="#8a734f"/>
<rect x="385.0" y="135.6" width="15.6" height="5.7" fill="#866f4c"/>
<rect x="400.1" y="135.6" width="20.5" height="5.7" fill="#8e7652"/>
<rect x="420.2" y="135.6" width="19.9" height="5.7" fill="#675539"/>
<rect x="439.6" y="135.6" width="9.1" height="5.7" fill="#7e6749"/>
<rect x="448.2" y="135.6" width="17.2" height="5.7" fill="#6c593c"/>
<rect x="464.9" y="135.6" width="12.6" height="5.7" fill="#8b734f"/>
<rect x="476.9" y="135.6" width="18.7" height="5.7" fill="#7c6648"/>
<rect x="495.1" y="135.6" width="17.1" height="5.7" fill="#7f684a"/>
<rect x="511.7" y="135.6" width="22.1" height="5.7" fill="#957c57"/>
<rect x="533.3" y="135.6" width="18.5" height="5.7" fill="#413323"/>
<rect x="551.3" y="135.6" width="9.2" height="5.7" fill="#846d4b"/>
<rect x="560.0" y="135.6" width="20.8" height="5.7" fill="#6a573b"/>
<rect x="580.2" y="135.6" width="13.6" height="5.7" fill="#806a4b"/>
<rect x="593.3" y="135.6" width="12.5" height="5.7" fill="#3a2c1d"/>
<rect x="605.3" y="135.6" width="21.6" height="5.7" fill="#967d57"/>
<rect x="385.0" y="140.8" width="8.9" height="5.1" fill="#756043"/>
<rect x="393.4" y="140.8" width="17.4" height="5.1" fill="#866f4c"/>
<rect x="410.2" y="140.8" width="19.2" height="5.1" fill="#836d4d"/>
<rect x="428.9" y="140.8" width="17.3" height="5.1" fill="#392b1d"/>
<rect x="445.6" y="140.8" width="22.5" height="5.1" fill="#6a583b"/>
<rect x="467.6" y="140.8" width="6.9" height="5.1" fill="#68563a"/>
<rect x="474.0" y="140.8" width="14.1" height="5.1" fill="#655338"/>
<rect x="487.6" y="140.8" width="6.8" height="5.1" fill="#a58d67"/>
<rect x="493.9" y="140.8" width="8.3" height="5.1" fill="#6b593c"/>
<rect x="501.7" y="140.8" width="18.4" height="5.1" fill="#604f34"/>
<rect x="519.6" y="140.8" width="16.5" height="5.1" fill="#3f3121"/>
<rect x="535.6" y="140.8" width="22.0" height="5.1" fill="#68563a"/>
<rect x="557.1" y="140.8" width="7.0" height="5.1" fill="#87704d"/>
<rect x="563.6" y="140.8" width="9.5" height="5.1" fill="#866e4c"/>
<rect x="572.6" y="140.8" width="21.2" height="5.1" fill="#3f3121"/>
<rect x="593.3" y="140.8" width="15.5" height="5.1" fill="#957c57"/>
<rect x="608.3" y="140.8" width="18.3" height="5.1" fill="#5e4d33"/>
<rect x="385.0" y="145.4" width="7.1" height="3.5" fill="#9e8763"/>
<rect x="391.6" y="145.4" width="13.7" height="3.5" fill="#3d2f20"/>
<rect x="404.8" y="145.4" width="11.3" height="3.5" fill="#856e4e"/>
<rect x="415.5" y="145.4" width="18.6" height="3.5" fill="#493a28"/>
<rect x="433.6" y="145.4" width="17.7" height="3.5" fill="#866f4c"/>
<rect x="450.8" y="145.4" width="8.8" height="3.5" fill="#8b7450"/>
<rect x="459.2" y="145.4" width="16.2" height="3.5" fill="#856e4c"/>
<rect x="474.9" y="145.4" width="11.9" height="3.5" fill="#6f5c3f"/>
<rect x="486.3" y="145.4" width="20.8" height="3.5" fill="#776144"/>
<rect x="506.5" y="145.4" width="19.7" height="3.5" fill="#8f7753"/>
<rect x="525.7" y="145.4" width="15.1" height="3.5" fill="#8e7652"/>
<rect x="540.3" y="145.4" width="10.7" height="3.5" fill="#766144"/>
<rect x="550.5" y="145.4" width="19.0" height="3.5" fill="#846d4b"/>
<rect x="569.0" y="145.4" width="13.5" height="3.5" fill="#7e6849"/>
<rect x="582.0" y="145.4" width="10.5" height="3.5" fill="#645237"/>
<rect x="592.0" y="145.4" width="17.1" height="3.5" fill="#87704d"/>
<rect x="608.6" y="145.4" width="22.5" height="3.5" fill="#866f4c"/>
<rect x="385.0" y="148.4" width="11.8" height="4.5" fill="#3f3121"/>
<rect x="396.3" y="148.4" width="9.0" height="4.5" fill="#80694a"/>
<rect x="404.8" y="148.4" width="9.4" height="4.5" fill="#866f4c"/>
<rect x="413.7" y="148.4" width="14.7" height="4.5" fill="#443525"/>
<rect x="427.9" y="148.4" width="10.3" height="4.5" fill="#846d4d"/>
<rect x="437.7" y="148.4" width="14.1" height="4.5" fill="#87704d"/>
<rect x="451.3" y="148.4" width="18.0" height="4.5" fill="#907853"/>
<rect x="468.8" y="148.4" width="18.0" height="4.5" fill="#866f4d"/>
<rect x="486.3" y="148.4" width="10.4" height="4.5" fill="#6f5c3e"/>
<rect x="496.1" y="148.4" width="19.3" height="4.5" fill="#5e4d33"/>
<rect x="514.9" y="148.4" width="15.2" height="4.5" fill="#89724f"/>
<rect x="529.5" y="148.4" width="21.4" height="4.5" fill="#8b7450"/>
<rect x="550.5" y="148.4" width="17.3" height="4.5" fill="#735e41"/>
<rect x="567.2" y="148.4" width="15.9" height="4.5" fill="#a08964"/>
<rect x="582.6" y="148.4" width="8.1" height="4.5" fill="#645337"/>
<rect x="590.3" y="148.4" width="17.7" height="4.5" fill="#7f684a"/>
<rect x="607.5" y="148.4" width="13.4" height="4.5" fill="#846d4e"/>
<rect x="385.0" y="152.3" width="14.0" height="4.8" fill="#382a1c"/>
<rect x="398.5" y="152.3" width="16.8" height="4.8" fill="#a78f69"/>
<rect x="414.8" y="152.3" width="15.9" height="4.8" fill="#7e6849"/>
<rect x="430.2" y="152.3" width="17.5" height="4.8" fill="#806a4b"/>
<rect x="447.2" y="152.3" width="13.8" height="4.8" fill="#846e4e"/>
<rect x="460.5" y="152.3" width="7.8" height="4.8" fill="#756043"/>
<rect x="467.8" y="152.3" width="20.6" height="4.8" fill="#453725"/>
<rect x="487.9" y="152.3" width="12.0" height="4.8" fill="#87704d"/>
<rect x="499.4" y="152.3" width="8.4" height="4.8" fill="#87704d"/>
<rect x="507.4" y="152.3" width="19.6" height="4.8" fill="#473827"/>
<rect x="526.5" y="152.3" width="22.3" height="4.8" fill="#615035"/>
<rect x="548.3" y="152.3" width="20.8" height="4.8" fill="#8e7652"/>
<rect x="568.6" y="152.3" width="20.0" height="4.8" fill="#89714e"/>
<rect x="588.1" y="152.3" width="16.9" height="4.8" fill="#957c57"/>
<rect x="604.6" y="152.3" width="18.5" height="4.8" fill="#453625"/>
</g></g>
<clipPath id="k5"><path d="M244.0 82.0 L302.0 80.0 L327.0 92.0 L347.0 125.0 L312.0 130.0 L247.0 130.0 L222.0 120.0 Z"/></clipPath>
<g clip-path="url(#k5)"><g filter="url(#b1)">
<rect x="219.0" y="78.0" width="14.8" height="3.2" fill="#af9166"/>
<rect x="233.3" y="78.0" width="14.5" height="3.2" fill="#a88b61"/>
<rect x="247.3" y="78.0" width="13.2" height="3.2" fill="#c5a778"/>
<rect x="260.0" y="78.0" width="7.9" height="3.2" fill="#b09266"/>
<rect x="267.4" y="78.0" width="13.2" height="3.2" fill="#af9165"/>
<rect x="280.0" y="78.0" width="8.0" height="3.2" fill="#c9ac7d"/>
<rect x="287.6" y="78.0" width="11.9" height="3.2" fill="#d4b685"/>
<rect x="299.0" y="78.0" width="5.8" height="3.2" fill="#c6a879"/>
<rect x="304.3" y="78.0" width="14.2" height="3.2" fill="#bb9c6e"/>
<rect x="317.9" y="78.0" width="13.2" height="3.2" fill="#bb9c6e"/>
<rect x="330.6" y="78.0" width="8.1" height="3.2" fill="#c1a476"/>
<rect x="338.2" y="78.0" width="5.8" height="3.2" fill="#b29468"/>
<rect x="343.5" y="78.0" width="7.6" height="3.2" fill="#b19367"/>
<rect x="219.0" y="80.7" width="14.2" height="4.0" fill="#d5b786"/>
<rect x="232.7" y="80.7" width="6.6" height="4.0" fill="#b5976a"/>
<rect x="238.8" y="80.7" width="7.6" height="4.0" fill="#b29468"/>
<rect x="245.9" y="80.7" width="8.5" height="4.0" fill="#bfa275"/>
<rect x="253.9" y="80.7" width="10.1" height="4.0" fill="#dbbc8a"/>
<rect x="263.5" y="80.7" width="14.8" height="4.0" fill="#dbbc8a"/>
<rect x="277.8" y="80.7" width="11.1" height="4.0" fill="#a88b61"/>
<rect x="288.4" y="80.7" width="13.4" height="4.0" fill="#ceb181"/>
<rect x="301.3" y="80.7" width="12.2" height="4.0" fill="#ccad7e"/>
<rect x="313.0" y="80.7" width="10.2" height="4.0" fill="#ac8e64"/>
<rect x="322.8" y="80.7" width="15.1" height="4.0" fill="#947a56"/>
<rect x="337.3" y="80.7" width="11.3" height="4.0" fill="#c8a97a"/>
<rect x="348.1" y="80.7" width="12.3" height="4.0" fill="#c8ab7d"/>
<rect x="219.0" y="84.3" width="16.2" height="3.8" fill="#c6a879"/>
<rect x="234.7" y="84.3" width="9.6" height="3.8" fill="#c0a275"/>
<rect x="243.8" y="84.3" width="16.1" height="3.8" fill="#c3a577"/>
<rect x="259.4" y="84.3" width="15.0" height="3.8" fill="#ba9d71"/>
<rect x="273.9" y="84.3" width="12.1" height="3.8" fill="#a88b61"/>
<rect x="285.6" y="84.3" width="14.7" height="3.8" fill="#d3b585"/>
<rect x="299.8" y="84.3" width="8.2" height="3.8" fill="#907654"/>
<rect x="307.4" y="84.3" width="16.5" height="3.8" fill="#ba9b6d"/>
<rect x="323.4" y="84.3" width="11.5" height="3.8" fill="#ba9b6e"/>
<rect x="334.4" y="84.3" width="10.3" height="3.8" fill="#cdae7e"/>
<rect x="344.3" y="84.3" width="16.4" height="3.8" fill="#cbac7d"/>
<rect x="219.0" y="87.5" width="7.8" height="4.1" fill="#bb9e71"/>
<rect x="226.3" y="87.5" width="14.7" height="4.1" fill="#caac7c"/>
<rect x="240.5" y="87.5" width="14.3" height="4.1" fill="#8e7552"/>
<rect x="254.3" y="87.5" width="14.4" height="4.1" fill="#bc9e72"/>
<rect x="268.2" y="87.5" width="14.8" height="4.1" fill="#c8aa7b"/>
<rect x="282.5" y="87.5" width="16.4" height="4.1" fill="#b09266"/>
<rect x="298.3" y="87.5" width="15.3" height="4.1" fill="#bb9c6e"/>
<rect x="313.2" y="87.5" width="13.1" height="4.1" fill="#a88b61"/>
<rect x="325.8" y="87.5" width="15.3" height="4.1" fill="#caad7e"/>
<rect x="340.6" y="87.5" width="13.1" height="4.1" fill="#c2a477"/>
<rect x="219.0" y="91.2" width="6.4" height="3.2" fill="#b6976b"/>
<rect x="224.9" y="91.2" width="13.3" height="3.2" fill="#dabb89"/>
<rect x="237.7" y="91.2" width="13.7" height="3.2" fill="#c9aa7b"/>
<rect x="250.9" y="91.2" width="13.6" height="3.2" fill="#ba9d71"/>
<rect x="264.0" y="91.2" width="15.5" height="3.2" fill="#cbac7d"/>
<rect x="279.0" y="91.2" width="15.9" height="3.2" fill="#b29468"/>
<rect x="294.5" y="91.2" width="6.3" height="3.2" fill="#cbac7c"/>
<rect x="300.3" y="91.2" width="12.4" height="3.2" fill="#bda073"/>
<rect x="312.1" y="91.2" width="6.3" height="3.2" fill="#cdaf80"/>
<rect x="317.9" y="91.2" width="6.1" height="3.2" fill="#ceb081"/>
<rect x="323.5" y="91.2" width="7.4" height="3.2" fill="#af9166"/>
<rect x="330.4" y="91.2" width="11.3" height="3.2" fill="#b29468"/>
<rect x="341.2" y="91.2" width="8.4" height="3.2" fill="#bb9c6e"/>
<rect x="349.1" y="91.2" width="7.8" height="3.2" fill="#b19367"/>
<rect x="219.0" y="93.9" width="9.3" height="3.7" fill="#ba9b6e"/>
<rect x="227.8" y="93.9" width="7.2" height="3.7" fill="#bb9c6e"/>
<rect x="234.4" y="93.9" width="5.5" height="3.7" fill="#af9166"/>
<rect x="239.4" y="93.9" width="11.1" height="3.7" fill="#cdaf80"/>
<rect x="250.0" y="93.9" width="6.2" height="3.7" fill="#bb9c6e"/>
<rect x="255.7" y="93.9" width="10.5" height="3.7" fill="#967c58"/>
<rect x="265.7" y="93.9" width="13.0" height="3.7" fill="#b7986b"/>
<rect x="278.2" y="93.9" width="12.7" height="3.7" fill="#b6976a"/>
<rect x="290.3" y="93.9" width="8.3" height="3.7" fill="#d4b585"/>
<rect x="298.1" y="93.9" width="11.0" height="3.7" fill="#ae9165"/>
<rect x="308.6" y="93.9" width="8.1" height="3.7" fill="#907653"/>
<rect x="316.3" y="93.9" width="9.4" height="3.7" fill="#b19367"/>
<rect x="325.2" y="93.9" width="6.5" height="3.7" fill="#c9aa7b"/>
<rect x="331.2" y="93.9" width="7.0" height="3.7" fill="#aa8c62"/>
<rect x="337.7" y="93.9" width="6.3" height="3.7" fill="#947a57"/>
<rect x="343.6" y="93.9" width="10.6" height="3.7" fill="#bd9f73"/>
<rect x="219.0" y="97.1" width="15.7" height="3.8" fill="#937a56"/>
<rect x="234.2" y="97.1" width="11.1" height="3.8" fill="#caac7c"/>
<rect x="244.9" y="97.1" width="7.0" height="3.8" fill="#bda073"/>
<rect x="251.4" y="97.1" width="13.6" height="3.8" fill="#d0b283"/>
<rect x="264.5" y="97.1" width="9.1" height="3.8" fill="#8d7452"/>
<rect x="273.2" y="97.1" width="13.9" height="3.8" fill="#ccad7d"/>
<rect x="286.6" y="97.1" width="8.3" height="3.8" fill="#d9ba88"/>
<rect x="294.4" y="97.1" width="8.9" height="3.8" fill="#c6a879"/>
<rect x="302.8" y="97.1" width="6.3" height="3.8" fill="#ae9065"/>
<rect x="308.7" y="97.1" width="12.8" height="3.8" fill="#c7a97a"/>
<rect x="321.0" y="97.1" width="8.4" height="3.8" fill="#b6986b"/>
<rect x="329.0" y="97.1" width="7.3" height="3.8" fill="#c8a97a"/>
<rect x="335.8" y="97.1" width="13.1" height="3.8" fill="#c8ab7d"/>
<rect x="348.4" y="97.1" width="9.8" height="3.8" fill="#cbac7d"/>
<rect x="219.0" y="100.3" width="9.1" height="3.7" fill="#c2a477"/>
<rect x="227.6" y="100.3" width="9.2" height="3.7" fill="#c6a879"/>
<rect x="236.3" y="100.3" width="15.3" height="3.7" fill="#b19367"/>
<rect x="251.1" y="100.3" width="15.2" height="3.7" fill="#9f845e"/>
<rect x="265.8" y="100.3" width="13.7" height="3.7" fill="#c1a376"/>
<rect x="279.0" y="100.3" width="9.2" height="3.7" fill="#d7b988"/>
<rect x="287.7" y="100.3" width="14.5" height="3.7" fill="#bea174"/>
<rect x="301.7" y="100.3" width="16.4" height="3.7" fill="#c5a779"/>
<rect x="317.7" y="100.3" width="10.2" height="3.7" fill="#a88b61"/>
<rect x="327.4" y="100.3" width="14.4" height="3.7" fill="#997f5a"/>
<rect x="341.2" y="100.3" width="9.4" height="3.7" fill="#ac8e63"/>
<rect x="219.0" y="103.6" width="14.3" height="4.2" fill="#b7986b"/>
<rect x="232.8" y="103.6" width="13.1" height="4.2" fill="#dabb89"/>
<rect x="245.4" y="103.6" width="13.9" height="4.2" fill="#9a7f5a"/>
<rect x="258.8" y="103.6" width="6.4" height="4.2" fill="#ccad7d"/>
<rect x="264.7" y="103.6" width="6.5" height="4.2" fill="#d6b787"/>
<rect x="270.7" y="103.6" width="7.0" height="4.2" fill="#d6b787"/>
<rect x="277.2" y="103.6" width="7.9" height="4.2" fill="#c7a97a"/>
<rect x="284.6" y="103.6" width="12.4" height="4.2" fill="#b99a6c"/>
<rect x="296.5" y="103.6" width="9.0" height="4.2" fill="#dbbc8a"/>
<rect x="305.0" y="103.6" width="14.9" height="4.2" fill="#ac8f64"/>
<rect x="319.3" y="103.6" width="11.0" height="4.2" fill="#b5976a"/>
<rect x="329.8" y="103.6" width="6.5" height="4.2" fill="#bb9e72"/>
<rect x="335.8" y="103.6" width="6.9" height="4.2" fill="#c4a678"/>
<rect x="342.1" y="103.6" width="14.2" height="4.2" fill="#b99a6d"/>
<rect x="219.0" y="107.2" width="16.0" height="3.7" fill="#c0a275"/>
<rect x="234.5" y="107.2" width="7.3" height="3.7" fill="#d3b585"/>
<rect x="241.3" y="107.2" width="15.9" height="3.7" fill="#b7986b"/>
<rect x="256.8" y="107.2" width="7.3" height="3.7" fill="#8d7452"/>
<rect x="263.6" y="107.2" width="7.6" height="3.7" fill="#8d7451"/>
<rect x="270.6" y="107.2" width="16.0" height="3.7" fill="#8d7451"/>
<rect x="286.2" y="107.2" width="10.1" height="3.7" fill="#dbbc8a"/>
<rect x="295.8" y="107.2" width="11.4" height="3.7" fill="#947a56"/>
<rect x="306.7" y="107.2" width="13.7" height="3.7" fill="#c7a87a"/>
<rect x="320.0" y="107.2" width="7.8" height="3.7" fill="#ad9064"/>
<rect x="327.3" y="107.2" width="5.8" height="3.7" fill="#ac8f64"/>
<rect x="332.6" y="107.2" width="11.1" height="3.7" fill="#c2a477"/>
<rect x="343.1" y="107.2" width="7.9" height="3.7" fill="#c6a779"/>
<rect x="219.0" y="110.5" width="10.8" height="4.1" fill="#ad9065"/>
<rect x="229.3" y="110.5" width="12.2" height="4.1" fill="#ccaf80"/>
<rect x="241.0" y="110.5" width="6.9" height="4.1" fill="#ad8f64"/>
<rect x="247.4" y="110.5" width="13.8" height="4.1" fill="#a98c62"/>
<rect x="260.7" y="110.5" width="9.3" height="4.1" fill="#9c825c"/>
<rect x="269.5" y="110.5" width="12.7" height="4.1" fill="#9f845e"/>
<rect x="281.7" y="110.5" width="14.1" height="4.1" fill="#d1b383"/>
<rect x="295.3" y="110.5" width="15.3" height="4.1" fill="#ccad7e"/>
<rect x="310.1" y="110.5" width="16.3" height="4.1" fill="#dbbc8a"/>
<rect x="325.9" y="110.5" width="13.0" height="4.1" fill="#aa8d62"/>
<rect x="338.4" y="110.5" width="13.5" height="4.1" fill="#ccad7d"/>
<rect x="219.0" y="114.1" width="15.1" height="4.2" fill="#cdb080"/>
<rect x="233.6" y="114.1" width="12.1" height="4.2" fill="#b99a6d"/>
<rect x="245.3" y="114.1" width="12.1" height="4.2" fill="#b6976b"/>
<rect x="256.8" y="114.1" width="14.1" height="4.2" fill="#af9166"/>
<rect x="270.4" y="114.1" width="12.8" height="4.2" fill="#aa8c62"/>
<rect x="282.7" y="114.1" width="8.5" height="4.2" fill="#c4a678"/>
<rect x="290.7" y="114.1" width="6.7" height="4.2" fill="#d3b585"/>
<rect x="296.9" y="114.1" width="7.0" height="4.2" fill="#b7996b"/>
<rect x="303.5" y="114.1" width="5.9" height="4.2" fill="#d1b383"/>
<rect x="308.8" y="114.1" width="15.4" height="4.2" fill="#987e59"/>
<rect x="323.7" y="114.1" width="14.3" height="4.2" fill="#c8aa7b"/>
<rect x="337.5" y="114.1" width="13.2" height="4.2" fill="#d1b383"/>
<rect x="219.0" y="117.8" width="9.7" height="3.4" fill="#c7a87a"/>
<rect x="228.2" y="117.8" width="13.0" height="3.4" fill="#b7996c"/>
<rect x="240.6" y="117.8" width="8.7" height="3.4" fill="#b7996c"/>
<rect x="248.8" y="117.8" width="12.4" height="3.4" fill="#bfa274"/>
<rect x="260.7" y="117.8" width="8.9" height="3.4" fill="#c7a97a"/>
<rect x="269.1" y="117.8" width="9.6" height="3.4" fill="#ccae7e"/>
<rect x="278.3" y="117.8" width="11.9" height="3.4" fill="#947a57"/>
<rect x="289.7" y="117.8" width="6.8" height="3.4" fill="#ccad7d"/>
<rect x="296.0" y="117.8" width="5.8" height="3.4" fill="#c5a779"/>
<rect x="301.3" y="117.8" width="10.0" height="3.4" fill="#c0a375"/>
<rect x="310.8" y="117.8" width="12.0" height="3.4" fill="#c1a376"/>
<rect x="322.2" y="117.8" width="8.2" height="3.4" fill="#b99a6d"/>
<rect x="329.9" y="117.8" width="12.0" height="3.4" fill="#d8b988"/>
<rect x="341.4" y="117.8" width="5.6" height="3.4" fill="#caab7c"/>
<rect x="346.6" y="117.8" width="10.9" height="3.4" fill="#b99a6d"/>
<rect x="219.0" y="120.7" width="10.8" height="3.4" fill="#d6b786"/>
<rect x="229.3" y="120.7" width="6.2" height="3.4" fill="#cbac7d"/>
<rect x="235.0" y="120.7" width="12.2" height="3.4" fill="#b99b6d"/>
<rect x="246.8" y="120.7" width="11.3" height="3.4" fill="#cdaf80"/>
<rect x="257.6" y="120.7" width="12.3" height="3.4" fill="#a88b61"/>
<rect x="269.3" y="120.7" width="12.7" height="3.4" fill="#ae9065"/>
<rect x="281.6" y="120.7" width="9.0" height="3.4" fill="#b49669"/>
<rect x="290.0" y="120.7" width="16.1" height="3.4" fill="#dabb8a"/>
<rect x="305.7" y="120.7" width="8.8" height="3.4" fill="#bd9f73"/>
<rect x="314.0" y="120.7" width="14.7" height="3.4" fill="#c9aa7b"/>
<rect x="328.3" y="120.7" width="16.4" height="3.4" fill="#d1b383"/>
<rect x="344.2" y="120.7" width="7.7" height="3.4" fill="#cbae7f"/>
<rect x="219.0" y="123.5" width="10.8" height="3.0" fill="#9f845e"/>
<rect x="229.3" y="123.5" width="11.2" height="3.0" fill="#c3a577"/>
<rect x="239.9" y="123.5" width="10.3" height="3.0" fill="#af9166"/>
<rect x="249.7" y="123.5" width="10.0" height="3.0" fill="#d7b988"/>
<rect x="259.2" y="123.5" width="8.3" height="3.0" fill="#a88b61"/>
<rect x="267.0" y="123.5" width="11.0" height="3.0" fill="#c6a879"/>
<rect x="277.5" y="123.5" width="9.8" height="3.0" fill="#967c58"/>
<rect x="286.8" y="123.5" width="7.3" height="3.0" fill="#cfb282"/>
<rect x="293.6" y="123.5" width="11.6" height="3.0" fill="#d0b282"/>
<rect x="304.7" y="123.5" width="11.3" height="3.0" fill="#c0a275"/>
<rect x="315.5" y="123.5" width="6.3" height="3.0" fill="#b19367"/>
<rect x="321.3" y="123.5" width="7.8" height="3.0" fill="#ba9d71"/>
<rect x="328.6" y="123.5" width="15.9" height="3.0" fill="#ceb081"/>
<rect x="344.1" y="123.5" width="16.4" height="3.0" fill="#d2b484"/>
<rect x="219.0" y="126.1" width="13.2" height="3.5" fill="#d7b988"/>
<rect x="231.7" y="126.1" width="10.4" height="3.5" fill="#ccae80"/>
<rect x="241.7" y="126.1" width="14.2" height="3.5" fill="#8c7351"/>
<rect x="255.4" y="126.1" width="7.3" height="3.5" fill="#b5976a"/>
<rect x="262.2" y="126.1" width="7.0" height="3.5" fill="#ccad7d"/>
<rect x="268.7" y="126.1" width="16.4" height="3.5" fill="#8d7451"/>
<rect x="284.6" y="126.1" width="13.7" height="3.5" fill="#af9166"/>
<rect x="297.8" y="126.1" width="8.8" height="3.5" fill="#af9266"/>
<rect x="306.1" y="126.1" width="7.3" height="3.5" fill="#ba9d71"/>
<rect x="313.0" y="126.1" width="10.1" height="3.5" fill="#d3b585"/>
<rect x="322.6" y="126.1" width="16.1" height="3.5" fill="#d9bb89"/>
<rect x="338.2" y="126.1" width="11.4" height="3.5" fill="#b5976a"/>
<rect x="349.1" y="126.1" width="12.5" height="3.5" fill="#c4a678"/>
<rect x="219.0" y="129.0" width="10.9" height="3.7" fill="#b29468"/>
<rect x="229.4" y="129.0" width="12.2" height="3.7" fill="#bd9f73"/>
<rect x="241.1" y="129.0" width="16.5" height="3.7" fill="#cdb080"/>
<rect x="257.1" y="129.0" width="14.6" height="3.7" fill="#ceb081"/>
<rect x="271.2" y="129.0" width="8.6" height="3.7" fill="#ba9d71"/>
<rect x="279.3" y="129.0" width="8.2" height="3.7" fill="#9f845e"/>
<rect x="287.0" y="129.0" width="12.4" height="3.7" fill="#8d7351"/>
<rect x="299.0" y="129.0" width="11.5" height="3.7" fill="#917754"/>
<rect x="310.0" y="129.0" width="5.8" height="3.7" fill="#987d59"/>
<rect x="315.3" y="129.0" width="15.8" height="3.7" fill="#caab7c"/>
<rect x="330.5" y="129.0" width="11.9" height="3.7" fill="#ceb081"/>
<rect x="342.0" y="129.0" width="5.8" height="3.7" fill="#ae9165"/>
<rect x="347.3" y="129.0" width="7.2" height="3.7" fill="#bb9e72"/>
</g></g>
<clipPath id="k6"><path d="M380.0 148.0 L452.0 150.0 L552.0 156.0 L608.0 158.0 L608.0 184.0 L532.0 186.0 L392.0 180.0 Z"/></clipPath>
<g clip-path="url(#k6)"><g filter="url(#b1)">
<rect x="377.0" y="146.0" width="14.0" height="3.9" fill="#9f865d"/>
<rect x="390.5" y="146.0" width="14.6" height="3.9" fill="#a78d63"/>
<rect x="404.6" y="146.0" width="7.6" height="3.9" fill="#b99f73"/>
<rect x="411.7" y="146.0" width="6.5" height="3.9" fill="#a98f64"/>
<rect x="417.6" y="146.0" width="8.1" height="3.9" fill="#a38a60"/>
<rect x="425.2" y="146.0" width="5.7" height="3.9" fill="#9e855c"/>
<rect x="430.5" y="146.0" width="8.8" height="3.9" fill="#bfa577"/>
<rect x="438.8" y="146.0" width="9.8" height="3.9" fill="#bea376"/>
<rect x="448.1" y="146.0" width="16.2" height="3.9" fill="#aa8f64"/>
<rect x="463.8" y="146.0" width="15.4" height="3.9" fill="#ae956b"/>
<rect x="478.7" y="146.0" width="14.7" height="3.9" fill="#b99f73"/>
<rect x="492.9" y="146.0" width="6.0" height="3.9" fill="#9c835b"/>
<rect x="498.3" y="146.0" width="11.6" height="3.9" fill="#846c4a"/>
<rect x="509.4" y="146.0" width="14.7" height="3.9" fill="#846d4a"/>
<rect x="523.6" y="146.0" width="11.9" height="3.9" fill="#a0865e"/>
<rect x="535.0" y="146.0" width="7.8" height="3.9" fill="#af966c"/>
<rect x="542.4" y="146.0" width="8.1" height="3.9" fill="#a98e64"/>
<rect x="550.0" y="146.0" width="13.0" height="3.9" fill="#856d4b"/>
<rect x="562.4" y="146.0" width="5.7" height="3.9" fill="#7a6343"/>
<rect x="567.6" y="146.0" width="6.2" height="3.9" fill="#927a54"/>
<rect x="573.3" y="146.0" width="7.7" height="3.9" fill="#715c3d"/>
<rect x="580.5" y="146.0" width="10.3" height="3.9" fill="#957c56"/>
<rect x="590.4" y="146.0" width="10.8" height="3.9" fill="#bca175"/>
<rect x="600.7" y="146.0" width="8.6" height="3.9" fill="#8b734f"/>
<rect x="608.8" y="146.0" width="9.1" height="3.9" fill="#9f855d"/>
<rect x="377.0" y="149.4" width="15.7" height="4.5" fill="#af9468"/>
<rect x="392.2" y="149.4" width="9.2" height="4.5" fill="#b79d71"/>
<rect x="400.9" y="149.4" width="10.7" height="4.5" fill="#826b49"/>
<rect x="411.1" y="149.4" width="11.2" height="4.5" fill="#ae9367"/>
<rect x="421.9" y="149.4" width="12.4" height="4.5" fill="#ac9266"/>
<rect x="433.8" y="149.4" width="11.9" height="4.5" fill="#907853"/>
<rect x="445.2" y="149.4" width="13.5" height="4.5" fill="#ad9267"/>
<rect x="458.2" y="149.4" width="13.7" height="4.5" fill="#bca275"/>
<rect x="471.4" y="149.4" width="8.1" height="4.5" fill="#7c6645"/>
<rect x="479.0" y="149.4" width="15.6" height="4.5" fill="#a2885f"/>
<rect x="494.1" y="149.4" width="15.2" height="4.5" fill="#7b6544"/>
<rect x="508.8" y="149.4" width="7.1" height="4.5" fill="#a68c62"/>
<rect x="515.4" y="149.4" width="5.6" height="4.5" fill="#a78d62"/>
<rect x="520.5" y="149.4" width="15.7" height="4.5" fill="#937b55"/>
<rect x="535.7" y="149.4" width="7.8" height="4.5" fill="#b2986e"/>
<rect x="542.9" y="149.4" width="8.3" height="4.5" fill="#866f4c"/>
<rect x="550.7" y="149.4" width="5.6" height="4.5" fill="#836c49"/>
<rect x="555.8" y="149.4" width="12.5" height="4.5" fill="#a68c62"/>
<rect x="567.9" y="149.4" width="15.4" height="4.5" fill="#866e4b"/>
<rect x="582.8" y="149.4" width="15.3" height="4.5" fill="#776141"/>
<rect x="597.6" y="149.4" width="13.6" height="4.5" fill="#9c835b"/>
<rect x="610.7" y="149.4" width="8.0" height="4.5" fill="#917953"/>
<rect x="377.0" y="153.4" width="7.1" height="3.2" fill="#a1875e"/>
<rect x="383.6" y="153.4" width="9.4" height="3.2" fill="#b59b70"/>
<rect x="392.4" y="153.4" width="13.7" height="3.2" fill="#947b55"/>
<rect x="405.6" y="153.4" width="12.0" height="3.2" fill="#755f40"/>
<rect x="417.1" y="153.4" width="11.5" height="3.2" fill="#a0865d"/>
<rect x="428.1" y="153.4" width="9.4" height="3.2" fill="#c0a577"/>
<rect x="437.0" y="153.4" width="10.5" height="3.2" fill="#a2885f"/>
<rect x="447.0" y="153.4" width="11.7" height="3.2" fill="#957c56"/>
<rect x="458.2" y="153.4" width="13.1" height="3.2" fill="#8d7550"/>
<rect x="470.8" y="153.4" width="10.6" height="3.2" fill="#715c3d"/>
<rect x="480.9" y="153.4" width="14.3" height="3.2" fill="#a38a60"/>
<rect x="494.7" y="153.4" width="5.9" height="3.2" fill="#a2885f"/>
<rect x="500.2" y="153.4" width="8.4" height="3.2" fill="#846d4a"/>
<rect x="508.1" y="153.4" width="8.9" height="3.2" fill="#8c7450"/>
<rect x="516.5" y="153.4" width="11.9" height="3.2" fill="#a1875e"/>
<rect x="527.9" y="153.4" width="14.0" height="3.2" fill="#715c3d"/>
<rect x="541.4" y="153.4" width="6.4" height="3.2" fill="#c1a678"/>
<rect x="547.3" y="153.4" width="9.9" height="3.2" fill="#796343"/>
<rect x="556.7" y="153.4" width="15.4" height="3.2" fill="#9c835b"/>
<rect x="571.7" y="153.4" width="14.7" height="3.2" fill="#846c4a"/>
<rect x="585.9" y="153.4" width="14.0" height="3.2" fill="#9f865d"/>
<rect x="599.4" y="153.4" width="13.7" height="3.2" fill="#b89e72"/>
<rect x="377.0" y="156.1" width="12.0" height="3.9" fill="#a3895f"/>
<rect x="388.5" y="156.1" width="12.3" height="3.9" fill="#ab9166"/>
<rect x="400.4" y="156.1" width="15.6" height="3.9" fill="#856d4b"/>
<rect x="415.5" y="156.1" width="8.6" height="3.9" fill="#8a734f"/>
<rect x="423.6" y="156.1" width="9.8" height="3.9" fill="#a38a60"/>
<rect x="432.9" y="156.1" width="9.6" height="3.9" fill="#af9468"/>
<rect x="442.0" y="156.1" width="14.0" height="3.9" fill="#725d3e"/>
<rect x="455.6" y="156.1" width="13.0" height="3.9" fill="#b2996e"/>
<rect x="468.1" y="156.1" width="12.0" height="3.9" fill="#b99f73"/>
<rect x="479.6" y="156.1" width="11.5" height="3.9" fill="#a1875e"/>
<rect x="490.6" y="156.1" width="9.0" height="3.9" fill="#8a724e"/>
<rect x="499.1" y="156.1" width="7.8" height="3.9" fill="#af9468"/>
<rect x="506.4" y="156.1" width="9.4" height="3.9" fill="#7f6947"/>
<rect x="515.3" y="156.1" width="7.3" height="3.9" fill="#a0875e"/>
<rect x="522.1" y="156.1" width="5.5" height="3.9" fill="#a88e63"/>
<rect x="527.2" y="156.1" width="13.2" height="3.9" fill="#a68c62"/>
<rect x="539.9" y="156.1" width="12.6" height="3.9" fill="#bba174"/>
<rect x="551.9" y="156.1" width="13.8" height="3.9" fill="#9e855c"/>
<rect x="565.3" y="156.1" width="13.5" height="3.9" fill="#907752"/>
<rect x="578.2" y="156.1" width="13.5" height="3.9" fill="#bca174"/>
<rect x="591.2" y="156.1" width="10.2" height="3.9" fill="#7b6544"/>
<rect x="600.9" y="156.1" width="10.8" height="3.9" fill="#b49b6f"/>
<rect x="377.0" y="159.5" width="12.0" height="3.5" fill="#715c3d"/>
<rect x="388.5" y="159.5" width="8.7" height="3.5" fill="#a98e64"/>
<rect x="396.7" y="159.5" width="10.7" height="3.5" fill="#89714e"/>
<rect x="407.0" y="159.5" width="9.5" height="3.5" fill="#856d4b"/>
<rect x="416.0" y="159.5" width="10.8" height="3.5" fill="#a68c62"/>
<rect x="426.3" y="159.5" width="11.0" height="3.5" fill="#88704d"/>
<rect x="436.7" y="159.5" width="14.3" height="3.5" fill="#a68c62"/>
<rect x="450.5" y="159.5" width="16.1" height="3.5" fill="#8a724e"/>
<rect x="466.2" y="159.5" width="13.0" height="3.5" fill="#917953"/>
<rect x="478.7" y="159.5" width="15.3" height="3.5" fill="#a68c62"/>
<rect x="493.4" y="159.5" width="10.7" height="3.5" fill="#8e7651"/>
<rect x="503.6" y="159.5" width="7.6" height="3.5" fill="#a0875e"/>
<rect x="510.7" y="159.5" width="10.3" height="3.5" fill="#a1885f"/>
<rect x="520.5" y="159.5" width="15.9" height="3.5" fill="#88704d"/>
<rect x="535.9" y="159.5" width="6.6" height="3.5" fill="#8e7551"/>
<rect x="542.0" y="159.5" width="11.8" height="3.5" fill="#a88d63"/>
<rect x="553.3" y="159.5" width="14.3" height="3.5" fill="#8f7752"/>
<rect x="567.1" y="159.5" width="9.4" height="3.5" fill="#876f4c"/>
<rect x="576.0" y="159.5" width="13.9" height="3.5" fill="#b89e72"/>
<rect x="589.4" y="159.5" width="11.1" height="3.5" fill="#af9468"/>
<rect x="600.0" y="159.5" width="5.9" height="3.5" fill="#88704d"/>
<rect x="605.4" y="159.5" width="14.3" height="3.5" fill="#796343"/>
<rect x="377.0" y="162.5" width="7.8" height="4.1" fill="#776141"/>
<rect x="384.3" y="162.5" width="15.1" height="4.1" fill="#a2885f"/>
<rect x="398.9" y="162.5" width="13.2" height="4.1" fill="#9c835b"/>
<rect x="411.5" y="162.5" width="9.1" height="4.1" fill="#937a55"/>
<rect x="420.1" y="162.5" width="7.6" height="4.1" fill="#937a55"/>
<rect x="427.2" y="162.5" width="13.9" height="4.1" fill="#8b734f"/>
<rect x="440.6" y="162.5" width="8.0" height="4.1" fill="#a78d62"/>
<rect x="448.1" y="162.5" width="8.8" height="4.1" fill="#866f4c"/>
<rect x="456.4" y="162.5" width="12.4" height="4.1" fill="#a98f64"/>
<rect x="468.3" y="162.5" width="15.2" height="4.1" fill="#766040"/>
<rect x="483.0" y="162.5" width="15.7" height="4.1" fill="#a38a60"/>
<rect x="498.2" y="162.5" width="8.6" height="4.1" fill="#836b49"/>
<rect x="506.3" y="162.5" width="9.5" height="4.1" fill="#917853"/>
<rect x="515.3" y="162.5" width="10.4" height="4.1" fill="#7b6544"/>
<rect x="525.2" y="162.5" width="13.6" height="4.1" fill="#b59b6f"/>
<rect x="538.3" y="162.5" width="13.9" height="4.1" fill="#87704d"/>
<rect x="551.7" y="162.5" width="12.9" height="4.1" fill="#ae956b"/>
<rect x="564.1" y="162.5" width="13.3" height="4.1" fill="#6e593b"/>
<rect x="577.0" y="162.5" width="15.9" height="4.1" fill="#947b56"/>
<rect x="592.4" y="162.5" width="9.8" height="4.1" fill="#8f7652"/>
<rect x="601.7" y="162.5" width="8.8" height="4.1" fill="#a98e64"/>
<rect x="610.0" y="162.5" width="9.2" height="4.1" fill="#a1885f"/>
<rect x="377.0" y="166.1" width="13.6" height="4.3" fill="#a68c62"/>
<rect x="390.1" y="166.1" width="12.1" height="4.3" fill="#ac9166"/>
<rect x="401.7" y="166.1" width="16.2" height="4.3" fill="#917954"/>
<rect x="417.4" y="166.1" width="10.0" height="4.3" fill="#a98f64"/>
<rect x="426.9" y="166.1" width="15.1" height="4.3" fill="#b1976d"/>
<rect x="441.5" y="166.1" width="16.5" height="4.3" fill="#7b6544"/>
<rect x="457.5" y="166.1" width="7.9" height="4.3" fill="#9e855c"/>
<rect x="464.8" y="166.1" width="14.1" height="4.3" fill="#957c56"/>
<rect x="478.4" y="166.1" width="7.4" height="4.3" fill="#87704c"/>
<rect x="485.3" y="166.1" width="14.9" height="4.3" fill="#bca275"/>
<rect x="499.7" y="166.1" width="11.0" height="4.3" fill="#a38a60"/>
<rect x="510.2" y="166.1" width="6.8" height="4.3" fill="#ba9f73"/>
<rect x="516.4" y="166.1" width="11.4" height="4.3" fill="#b0976c"/>
<rect x="527.3" y="166.1" width="12.4" height="4.3" fill="#a1875e"/>
<rect x="539.3" y="166.1" width="12.7" height="4.3" fill="#937a55"/>
<rect x="551.4" y="166.1" width="8.0" height="4.3" fill="#89714e"/>
<rect x="558.9" y="166.1" width="8.8" height="4.3" fill="#88714d"/>
<rect x="567.2" y="166.1" width="9.9" height="4.3" fill="#af966c"/>
<rect x="576.6" y="166.1" width="12.7" height="4.3" fill="#8a724e"/>
<rect x="588.8" y="166.1" width="10.3" height="4.3" fill="#9e855c"/>
<rect x="598.6" y="166.1" width="13.4" height="4.3" fill="#a0875e"/>
<rect x="377.0" y="170.0" width="12.4" height="3.3" fill="#8e7551"/>
<rect x="388.9" y="170.0" width="5.8" height="3.3" fill="#8a724e"/>
<rect x="394.2" y="170.0" width="7.4" height="3.3" fill="#b69c70"/>
<rect x="401.1" y="170.0" width="14.8" height="3.3" fill="#866f4c"/>
<rect x="415.4" y="170.0" width="15.0" height="3.3" fill="#a2895f"/>
<rect x="430.0" y="170.0" width="9.5" height="3.3" fill="#a88e63"/>
<rect x="439.0" y="170.0" width="8.8" height="3.3" fill="#806947"/>
<rect x="447.3" y="170.0" width="6.0" height="3.3" fill="#a98f64"/>
<rect x="452.7" y="170.0" width="13.3" height="3.3" fill="#a2895f"/>
<rect x="465.5" y="170.0" width="16.3" height="3.3" fill="#755f40"/>
<rect x="481.3" y="170.0" width="13.2" height="3.3" fill="#7b6444"/>
<rect x="494.1" y="170.0" width="10.1" height="3.3" fill="#796343"/>
<rect x="503.7" y="170.0" width="12.9" height="3.3" fill="#6f593b"/>
<rect x="516.1" y="170.0" width="6.7" height="3.3" fill="#a1875e"/>
<rect x="522.3" y="170.0" width="16.2" height="3.3" fill="#b59b70"/>
<rect x="538.0" y="170.0" width="12.1" height="3.3" fill="#8b734f"/>
<rect x="549.6" y="170.0" width="9.3" height="3.3" fill="#7c6645"/>
<rect x="558.4" y="170.0" width="6.1" height="3.3" fill="#947b56"/>
<rect x="564.0" y="170.0" width="9.7" height="3.3" fill="#9d835b"/>
<rect x="573.3" y="170.0" width="11.4" height="3.3" fill="#8c7450"/>
<rect x="584.2" y="170.0" width="13.0" height="3.3" fill="#8e7551"/>
<rect x="596.7" y="170.0" width="12.1" height="3.3" fill="#8c7450"/>
<rect x="608.3" y="170.0" width="7.8" height="3.3" fill="#a98f64"/>
<rect x="377.0" y="172.8" width="6.7" height="4.4" fill="#a58b61"/>
<rect x="383.2" y="172.8" width="15.9" height="4.4" fill="#b2986e"/>
<rect x="398.5" y="172.8" width="12.2" height="4.4" fill="#ac9166"/>
<rect x="410.3" y="172.8" width="6.3" height="4.4" fill="#755f3f"/>
<rect x="416.0" y="172.8" width="8.9" height="4.4" fill="#9e855c"/>
<rect x="424.4" y="172.8" width="9.4" height="4.4" fill="#9c835b"/>
<rect x="433.4" y="172.8" width="10.7" height="4.4" fill="#bda275"/>
<rect x="443.5" y="172.8" width="11.5" height="4.4" fill="#a58b61"/>
<rect x="454.5" y="172.8" width="8.3" height="4.4" fill="#937a55"/>
<rect x="462.3" y="172.8" width="7.6" height="4.4" fill="#8b734f"/>
<rect x="469.4" y="172.8" width="10.4" height="4.4" fill="#ae9367"/>
<rect x="479.3" y="172.8" width="15.3" height="4.4" fill="#ad9267"/>
<rect x="494.1" y="172.8" width="10.5" height="4.4" fill="#b49a6f"/>
<rect x="504.1" y="172.8" width="6.1" height="4.4" fill="#755f40"/>
<rect x="509.7" y="172.8" width="6.0" height="4.4" fill="#a2885f"/>
<rect x="515.2" y="172.8" width="14.7" height="4.4" fill="#735d3e"/>
<rect x="529.4" y="172.8" width="6.8" height="4.4" fill="#af9468"/>
<rect x="535.7" y="172.8" width="10.7" height="4.4" fill="#a2885f"/>
<rect x="545.9" y="172.8" width="11.1" height="4.4" fill="#8c7450"/>
<rect x="556.6" y="172.8" width="14.0" height="4.4" fill="#927a54"/>
<rect x="570.1" y="172.8" width="13.0" height="4.4" fill="#836c4a"/>
<rect x="582.6" y="172.8" width="9.0" height="4.4" fill="#ad9267"/>
<rect x="591.1" y="172.8" width="15.1" height="4.4" fill="#8f7752"/>
<rect x="605.7" y="172.8" width="7.0" height="4.4" fill="#9d845c"/>
<rect x="377.0" y="176.7" width="8.7" height="3.7" fill="#6f5a3c"/>
<rect x="385.2" y="176.7" width="12.3" height="3.7" fill="#9f865d"/>
<rect x="397.0" y="176.7" width="14.4" height="3.7" fill="#b79d71"/>
<rect x="411.0" y="176.7" width="10.8" height="3.7" fill="#a88d63"/>
<rect x="421.3" y="176.7" width="13.7" height="3.7" fill="#7e6746"/>
<rect x="434.5" y="176.7" width="14.4" height="3.7" fill="#ae9367"/>
<rect x="448.4" y="176.7" width="6.5" height="3.7" fill="#a68c62"/>
<rect x="454.4" y="176.7" width="13.3" height="3.7" fill="#8e7651"/>
<rect x="467.2" y="176.7" width="13.4" height="3.7" fill="#826b49"/>
<rect x="480.0" y="176.7" width="8.6" height="3.7" fill="#907753"/>
<rect x="488.2" y="176.7" width="10.0" height="3.7" fill="#937a54"/>
<rect x="497.6" y="176.7" width="12.3" height="3.7" fill="#8a724e"/>
<rect x="509.4" y="176.7" width="6.6" height="3.7" fill="#957c56"/>
<rect x="515.5" y="176.7" width="11.1" height="3.7" fill="#8f7652"/>
<rect x="526.1" y="176.7" width="8.0" height="3.7" fill="#866f4c"/>
<rect x="533.6" y="176.7" width="11.3" height="3.7" fill="#917954"/>
<rect x="544.4" y="176.7" width="13.8" height="3.7" fill="#957c56"/>
<rect x="557.8" y="176.7" width="11.7" height="3.7" fill="#856d4b"/>
<rect x="569.0" y="176.7" width="5.7" height="3.7" fill="#8e7651"/>
<rect x="574.2" y="176.7" width="8.5" height="3.7" fill="#a58b61"/>
<rect x="582.2" y="176.7" width="6.9" height="3.7" fill="#a58b61"/>
<rect x="588.6" y="176.7" width="13.4" height="3.7" fill="#a98f64"/>
<rect x="601.5" y="176.7" width="9.0" height="3.7" fill="#ab9166"/>
<rect x="610.0" y="176.7" width="12.6" height="3.7" fill="#907853"/>
<rect x="377.0" y="179.8" width="6.2" height="3.8" fill="#a68c62"/>
<rect x="382.7" y="179.8" width="12.7" height="3.8" fill="#aa9065"/>
<rect x="395.0" y="179.8" width="15.6" height="3.8" fill="#937a55"/>
<rect x="410.0" y="179.8" width="10.9" height="3.8" fill="#ae956b"/>
<rect x="420.4" y="179.8" width="11.4" height="3.8" fill="#bda376"/>
<rect x="431.3" y="179.8" width="15.6" height="3.8" fill="#826b49"/>
<rect x="446.4" y="179.8" width="13.7" height="3.8" fill="#806948"/>
<rect x="459.6" y="179.8" width="15.0" height="3.8" fill="#a98f64"/>
<rect x="474.1" y="179.8" width="15.6" height="3.8" fill="#a88e63"/>
<rect x="489.3" y="179.8" width="12.0" height="3.8" fill="#947b55"/>
<rect x="500.8" y="179.8" width="6.5" height="3.8" fill="#aa9065"/>
<rect x="506.8" y="179.8" width="13.9" height="3.8" fill="#937a55"/>
<rect x="520.2" y="179.8" width="7.6" height="3.8" fill="#9c835b"/>
<rect x="527.4" y="179.8" width="14.7" height="3.8" fill="#a88d63"/>
<rect x="541.6" y="179.8" width="10.8" height="3.8" fill="#876f4c"/>
<rect x="551.9" y="179.8" width="6.8" height="3.8" fill="#b69d71"/>
<rect x="558.2" y="179.8" width="9.3" height="3.8" fill="#826b49"/>
<rect x="567.0" y="179.8" width="13.7" height="3.8" fill="#a2885f"/>
<rect x="580.2" y="179.8" width="8.4" height="3.8" fill="#aa9065"/>
<rect x="588.1" y="179.8" width="12.8" height="3.8" fill="#b79d71"/>
<rect x="600.5" y="179.8" width="15.0" height="3.8" fill="#8c7450"/>
<rect x="377.0" y="183.1" width="8.9" height="4.2" fill="#89714d"/>
<rect x="385.4" y="183.1" width="6.1" height="4.2" fill="#7e6846"/>
<rect x="391.0" y="183.1" width="14.1" height="4.2" fill="#ae9367"/>
<rect x="404.6" y="183.1" width="6.9" height="4.2" fill="#755f40"/>
<rect x="411.0" y="183.1" width="5.7" height="4.2" fill="#ae956b"/>
<rect x="416.2" y="183.1" width="14.6" height="4.2" fill="#ac9166"/>
<rect x="430.2" y="183.1" width="6.0" height="4.2" fill="#a98f64"/>
<rect x="435.7" y="183.1" width="12.2" height="4.2" fill="#b0976c"/>
<rect x="447.4" y="183.1" width="11.7" height="4.2" fill="#bea376"/>
<rect x="458.6" y="183.1" width="14.9" height="4.2" fill="#927954"/>
<rect x="473.0" y="183.1" width="11.1" height="4.2" fill="#8e7551"/>
<rect x="483.6" y="183.1" width="14.5" height="4.2" fill="#a1875e"/>
<rect x="497.6" y="183.1" width="14.7" height="4.2" fill="#9e855c"/>
<rect x="511.8" y="183.1" width="14.3" height="4.2" fill="#705b3c"/>
<rect x="525.5" y="183.1" width="5.9" height="4.2" fill="#8d7551"/>
<rect x="531.0" y="183.1" width="12.7" height="4.2" fill="#8b734f"/>
<rect x="543.1" y="183.1" width="6.6" height="4.2" fill="#8b734f"/>
<rect x="549.3" y="183.1" width="16.4" height="4.2" fill="#8e7652"/>
<rect x="565.1" y="183.1" width="12.7" height="4.2" fill="#8f7752"/>
<rect x="577.4" y="183.1" width="6.7" height="4.2" fill="#a0865d"/>
<rect x="583.6" y="183.1" width="10.2" height="4.2" fill="#ad9367"/>
<rect x="593.3" y="183.1" width="6.5" height="4.2" fill="#aa9065"/>
<rect x="599.3" y="183.1" width="6.2" height="4.2" fill="#a1875e"/>
<rect x="605.0" y="183.1" width="9.8" height="4.2" fill="#8d7551"/>
<rect x="377.0" y="186.8" width="15.7" height="4.1" fill="#a58b61"/>
<rect x="392.2" y="186.8" width="9.7" height="4.1" fill="#a78d62"/>
<rect x="401.4" y="186.8" width="14.9" height="4.1" fill="#9f855d"/>
<rect x="415.8" y="186.8" width="6.4" height="4.1" fill="#957c56"/>
<rect x="421.7" y="186.8" width="12.5" height="4.1" fill="#af9468"/>
<rect x="433.7" y="186.8" width="7.9" height="4.1" fill="#8d7551"/>
<rect x="441.1" y="186.8" width="16.2" height="4.1" fill="#b49b6f"/>
<rect x="456.8" y="186.8" width="16.1" height="4.1" fill="#927954"/>
<rect x="472.3" y="186.8" width="8.9" height="4.1" fill="#907853"/>
<rect x="480.7" y="186.8" width="16.4" height="4.1" fill="#b99f73"/>
<rect x="496.6" y="186.8" width="6.4" height="4.1" fill="#b0976c"/>
<rect x="502.5" y="186.8" width="15.8" height="4.1" fill="#7f6847"/>
<rect x="517.8" y="186.8" width="6.7" height="4.1" fill="#8e7651"/>
<rect x="523.9" y="186.8" width="14.1" height="4.1" fill="#b0976c"/>
<rect x="537.5" y="186.8" width="7.7" height="4.1" fill="#af9468"/>
<rect x="544.7" y="186.8" width="10.8" height="4.1" fill="#937a55"/>
<rect x="555.0" y="186.8" width="7.6" height="4.1" fill="#a98e64"/>
<rect x="562.1" y="186.8" width="9.3" height="4.1" fill="#b69c70"/>
<rect x="570.9" y="186.8" width="11.9" height="4.1" fill="#89714e"/>
<rect x="582.3" y="186.8" width="16.2" height="4.1" fill="#b39a6e"/>
<rect x="598.0" y="186.8" width="11.6" height="4.1" fill="#866f4c"/>
<rect x="609.1" y="186.8" width="7.3" height="4.1" fill="#8d7551"/>
</g></g>
<clipPath id="k7"><path d="M0.0 155.0 L82.0 150.0 L152.0 158.0 L212.0 144.0 L247.0 120.0 L302.0 120.0 L352.0 150.0 L387.0 177.0 L0.0 172.0 Z"/></clipPath>
<g clip-path="url(#k7)"><g filter="url(#b1)">
<rect x="-3.0" y="118.0" width="11.5" height="4.3" fill="#957953"/>
<rect x="8.0" y="118.0" width="5.9" height="4.3" fill="#b59669"/>
<rect x="13.5" y="118.0" width="12.6" height="4.3" fill="#b7986b"/>
<rect x="25.6" y="118.0" width="15.2" height="4.3" fill="#c9aa7b"/>
<rect x="40.2" y="118.0" width="9.1" height="4.3" fill="#ad8f64"/>
<rect x="48.8" y="118.0" width="10.1" height="4.3" fill="#a98c61"/>
<rect x="58.4" y="118.0" width="13.1" height="4.3" fill="#bb9e71"/>
<rect x="71.0" y="118.0" width="7.4" height="4.3" fill="#b6976a"/>
<rect x="77.9" y="118.0" width="10.7" height="4.3" fill="#b29467"/>
<rect x="88.1" y="118.0" width="13.5" height="4.3" fill="#977b55"/>
<rect x="101.2" y="118.0" width="14.3" height="4.3" fill="#987c55"/>
<rect x="114.9" y="118.0" width="10.2" height="4.3" fill="#ccad7e"/>
<rect x="124.6" y="118.0" width="11.7" height="4.3" fill="#9d8059"/>
<rect x="135.8" y="118.0" width="6.8" height="4.3" fill="#ac8f63"/>
<rect x="142.1" y="118.0" width="12.0" height="4.3" fill="#c5a779"/>
<rect x="153.5" y="118.0" width="11.7" height="4.3" fill="#c1a376"/>
<rect x="164.7" y="118.0" width="12.8" height="4.3" fill="#c3a577"/>
<rect x="177.1" y="118.0" width="13.8" height="4.3" fill="#b29467"/>
<rect x="190.4" y="118.0" width="13.5" height="4.3" fill="#8e724e"/>
<rect x="203.4" y="118.0" width="11.2" height="4.3" fill="#9a7d56"/>
<rect x="214.1" y="118.0" width="15.9" height="4.3" fill="#aa8c62"/>
<rect x="229.5" y="118.0" width="12.8" height="4.3" fill="#ae9065"/>
<rect x="241.9" y="118.0" width="6.0" height="4.3" fill="#987c55"/>
<rect x="247.4" y="118.0" width="6.7" height="4.3" fill="#ac8f63"/>
<rect x="253.6" y="118.0" width="8.9" height="4.3" fill="#977b55"/>
<rect x="262.0" y="118.0" width="9.1" height="4.3" fill="#a78a5f"/>
<rect x="270.6" y="118.0" width="14.9" height="4.3" fill="#b8996c"/>
<rect x="285.0" y="118.0" width="10.2" height="4.3" fill="#b19366"/>
<rect x="294.7" y="118.0" width="6.3" height="4.3" fill="#b19367"/>
<rect x="300.5" y="118.0" width="9.5" height="4.3" fill="#b39468"/>
<rect x="309.6" y="118.0" width="8.3" height="4.3" fill="#796241"/>
<rect x="317.3" y="118.0" width="7.3" height="4.3" fill="#b6976a"/>
<rect x="324.2" y="118.0" width="15.1" height="4.3" fill="#bea174"/>
<rect x="338.8" y="118.0" width="9.9" height="4.3" fill="#967a54"/>
<rect x="348.2" y="118.0" width="15.8" height="4.3" fill="#c4a678"/>
<rect x="363.5" y="118.0" width="7.1" height="4.3" fill="#89704c"/>
<rect x="370.1" y="118.0" width="14.5" height="4.3" fill="#c8aa7b"/>
<rect x="384.1" y="118.0" width="15.8" height="4.3" fill="#c5a779"/>
<rect x="-3.0" y="121.8" width="12.2" height="3.8" fill="#b29467"/>
<rect x="8.7" y="121.8" width="6.6" height="3.8" fill="#bc9e72"/>
<rect x="14.8" y="121.8" width="8.6" height="3.8" fill="#bd9f73"/>
<rect x="22.9" y="121.8" width="7.6" height="3.8" fill="#9e815a"/>
<rect x="30.0" y="121.8" width="16.2" height="3.8" fill="#a6895f"/>
<rect x="45.7" y="121.8" width="7.4" height="3.8" fill="#c6a87a"/>
<rect x="52.6" y="121.8" width="14.7" height="3.8" fill="#947852"/>
<rect x="66.8" y="121.8" width="14.6" height="3.8" fill="#9c7f58"/>
<rect x="81.0" y="121.8" width="11.9" height="3.8" fill="#a6895f"/>
<rect x="92.3" y="121.8" width="10.8" height="3.8" fill="#b99a6c"/>
<rect x="102.7" y="121.8" width="6.0" height="3.8" fill="#9a7e57"/>
<rect x="108.2" y="121.8" width="9.0" height="3.8" fill="#937752"/>
<rect x="116.7" y="121.8" width="7.9" height="3.8" fill="#b19367"/>
<rect x="124.1" y="121.8" width="12.9" height="3.8" fill="#927751"/>
<rect x="136.5" y="121.8" width="6.6" height="3.8" fill="#b7986b"/>
<rect x="142.6" y="121.8" width="9.7" height="3.8" fill="#8f744f"/>
<rect x="151.8" y="121.8" width="8.2" height="3.8" fill="#b99a6c"/>
<rect x="159.4" y="121.8" width="8.4" height="3.8" fill="#8f734f"/>
<rect x="167.3" y="121.8" width="10.3" height="3.8" fill="#7d6544"/>
<rect x="177.2" y="121.8" width="5.5" height="3.8" fill="#987b55"/>
<rect x="182.2" y="121.8" width="9.2" height="3.8" fill="#b39568"/>
<rect x="191.0" y="121.8" width="10.3" height="3.8" fill="#89704c"/>
<rect x="200.8" y="121.8" width="12.2" height="3.8" fill="#c8aa7b"/>
<rect x="212.5" y="121.8" width="6.3" height="3.8" fill="#9b7e57"/>
<rect x="218.3" y="121.8" width="14.1" height="3.8" fill="#9a7e57"/>
<rect x="231.9" y="121.8" width="14.3" height="3.8" fill="#bea174"/>
<rect x="245.8" y="121.8" width="16.3" height="3.8" fill="#bb9e72"/>
<rect x="261.6" y="121.8" width="8.8" height="3.8" fill="#b09266"/>
<rect x="269.9" y="121.8" width="7.1" height="3.8" fill="#937751"/>
<rect x="276.5" y="121.8" width="11.9" height="3.8" fill="#a88b60"/>
<rect x="287.9" y="121.8" width="5.5" height="3.8" fill="#7d6544"/>
<rect x="292.9" y="121.8" width="12.6" height="3.8" fill="#a78a5f"/>
<rect x="305.0" y="121.8" width="11.4" height="3.8" fill="#9e8159"/>
<rect x="315.9" y="121.8" width="8.4" height="3.8" fill="#cdae7e"/>
<rect x="323.8" y="121.8" width="9.6" height="3.8" fill="#8d724e"/>
<rect x="332.9" y="121.8" width="12.9" height="3.8" fill="#caab7c"/>
<rect x="345.3" y="121.8" width="12.2" height="3.8" fill="#a88b60"/>
<rect x="356.9" y="121.8" width="10.2" height="3.8" fill="#8c714d"/>
<rect x="366.6" y="121.8" width="9.1" height="3.8" fill="#c6a779"/>
<rect x="375.2" y="121.8" width="15.6" height="3.8" fill="#b09266"/>
<rect x="-3.0" y="125.1" width="12.5" height="3.4" fill="#826a47"/>
<rect x="9.0" y="125.1" width="16.0" height="3.4" fill="#bea073"/>
<rect x="24.6" y="125.1" width="14.6" height="3.4" fill="#997c56"/>
<rect x="38.7" y="125.1" width="15.6" height="3.4" fill="#b59669"/>
<rect x="53.8" y="125.1" width="14.9" height="3.4" fill="#b19367"/>
<rect x="68.2" y="125.1" width="11.1" height="3.4" fill="#927651"/>
<rect x="78.7" y="125.1" width="6.5" height="3.4" fill="#9d8059"/>
<rect x="84.8" y="125.1" width="14.1" height="3.4" fill="#b19367"/>
<rect x="98.4" y="125.1" width="9.3" height="3.4" fill="#866d4a"/>
<rect x="107.3" y="125.1" width="9.8" height="3.4" fill="#a6895f"/>
<rect x="116.5" y="125.1" width="10.2" height="3.4" fill="#b59669"/>
<rect x="126.2" y="125.1" width="11.1" height="3.4" fill="#8d724e"/>
<rect x="136.9" y="125.1" width="6.9" height="3.4" fill="#a98b61"/>
<rect x="143.3" y="125.1" width="6.8" height="3.4" fill="#b09266"/>
<rect x="149.6" y="125.1" width="11.1" height="3.4" fill="#967a54"/>
<rect x="160.2" y="125.1" width="6.1" height="3.4" fill="#997c56"/>
<rect x="165.8" y="125.1" width="5.7" height="3.4" fill="#9e8159"/>
<rect x="171.1" y="125.1" width="16.2" height="3.4" fill="#7c6443"/>
<rect x="186.8" y="125.1" width="8.9" height="3.4" fill="#a78a5f"/>
<rect x="195.2" y="125.1" width="12.8" height="3.4" fill="#8c714d"/>
<rect x="207.5" y="125.1" width="13.5" height="3.4" fill="#c6a879"/>
<rect x="220.5" y="125.1" width="9.9" height="3.4" fill="#a6895f"/>
<rect x="229.9" y="125.1" width="8.3" height="3.4" fill="#876e4a"/>
<rect x="237.7" y="125.1" width="7.3" height="3.4" fill="#ba9d71"/>
<rect x="244.5" y="125.1" width="7.5" height="3.4" fill="#8f744f"/>
<rect x="251.6" y="125.1" width="14.5" height="3.4" fill="#c9aa7b"/>
<rect x="265.5" y="125.1" width="12.2" height="3.4" fill="#9e8159"/>
<rect x="277.2" y="125.1" width="14.4" height="3.4" fill="#9f825a"/>
<rect x="291.1" y="125.1" width="5.6" height="3.4" fill="#967a54"/>
<rect x="296.2" y="125.1" width="13.7" height="3.4" fill="#af9165"/>
<rect x="309.4" y="125.1" width="11.4" height="3.4" fill="#9b7f57"/>
<rect x="320.3" y="125.1" width="10.7" height="3.4" fill="#796241"/>
<rect x="330.5" y="125.1" width="15.0" height="3.4" fill="#9b7e57"/>
<rect x="344.9" y="125.1" width="15.5" height="3.4" fill="#cbac7d"/>
<rect x="359.9" y="125.1" width="10.1" height="3.4" fill="#ae9065"/>
<rect x="369.5" y="125.1" width="10.9" height="3.4" fill="#997d56"/>
<rect x="379.8" y="125.1" width="15.8" height="3.4" fill="#a88b60"/>
<rect x="-3.0" y="127.9" width="9.6" height="3.4" fill="#a6895f"/>
<rect x="6.1" y="127.9" width="7.6" height="3.4" fill="#b09266"/>
<rect x="13.1" y="127.9" width="8.8" height="3.4" fill="#ba9d71"/>
<rect x="21.4" y="127.9" width="13.3" height="3.4" fill="#9b7f58"/>
<rect x="34.2" y="127.9" width="8.0" height="3.4" fill="#796241"/>
<rect x="41.7" y="127.9" width="7.2" height="3.4" fill="#836b48"/>
<rect x="48.3" y="127.9" width="14.0" height="3.4" fill="#9e8159"/>
<rect x="61.8" y="127.9" width="15.5" height="3.4" fill="#caab7c"/>
<rect x="76.8" y="127.9" width="15.8" height="3.4" fill="#b6976a"/>
<rect x="92.0" y="127.9" width="7.2" height="3.4" fill="#917550"/>
<rect x="98.7" y="127.9" width="9.8" height="3.4" fill="#a88b60"/>
<rect x="108.1" y="127.9" width="11.3" height="3.4" fill="#c1a375"/>
<rect x="118.9" y="127.9" width="7.5" height="3.4" fill="#bfa174"/>
<rect x="125.9" y="127.9" width="6.6" height="3.4" fill="#b39568"/>
<rect x="132.0" y="127.9" width="16.1" height="3.4" fill="#977b55"/>
<rect x="147.5" y="127.9" width="13.3" height="3.4" fill="#cdae7e"/>
<rect x="160.3" y="127.9" width="12.5" height="3.4" fill="#b99a6c"/>
<rect x="172.3" y="127.9" width="13.0" height="3.4" fill="#9d8159"/>
<rect x="184.9" y="127.9" width="15.3" height="3.4" fill="#947852"/>
<rect x="199.7" y="127.9" width="7.2" height="3.4" fill="#846b48"/>
<rect x="206.4" y="127.9" width="12.7" height="3.4" fill="#b49669"/>
<rect x="218.6" y="127.9" width="15.9" height="3.4" fill="#c3a577"/>
<rect x="234.0" y="127.9" width="6.4" height="3.4" fill="#8d714d"/>
<rect x="240.0" y="127.9" width="10.2" height="3.4" fill="#9e815a"/>
<rect x="249.7" y="127.9" width="13.7" height="3.4" fill="#b09266"/>
<rect x="262.9" y="127.9" width="12.6" height="3.4" fill="#b19367"/>
<rect x="275.1" y="127.9" width="6.1" height="3.4" fill="#c5a779"/>
<rect x="280.6" y="127.9" width="15.6" height="3.4" fill="#7b6443"/>
<rect x="295.7" y="127.9" width="6.1" height="3.4" fill="#997d56"/>
<rect x="301.3" y="127.9" width="13.6" height="3.4" fill="#ae9064"/>
<rect x="314.5" y="127.9" width="14.4" height="3.4" fill="#917550"/>
<rect x="328.3" y="127.9" width="6.8" height="3.4" fill="#bfa275"/>
<rect x="334.6" y="127.9" width="15.8" height="3.4" fill="#c2a477"/>
<rect x="349.9" y="127.9" width="7.9" height="3.4" fill="#b09266"/>
<rect x="357.2" y="127.9" width="13.4" height="3.4" fill="#ae9064"/>
<rect x="370.2" y="127.9" width="9.6" height="3.4" fill="#977b55"/>
<rect x="379.3" y="127.9" width="10.5" height="3.4" fill="#907550"/>
<rect x="389.2" y="127.9" width="13.6" height="3.4" fill="#977b55"/>
<rect x="-3.0" y="130.8" width="15.4" height="3.9" fill="#765f3f"/>
<rect x="11.9" y="130.8" width="13.3" height="3.9" fill="#987c55"/>
<rect x="24.7" y="130.8" width="8.1" height="3.9" fill="#947852"/>
<rect x="32.3" y="130.8" width="10.0" height="3.9" fill="#7c6443"/>
<rect x="41.8" y="130.8" width="10.4" height="3.9" fill="#ac8e63"/>
<rect x="51.7" y="130.8" width="8.2" height="3.9" fill="#8f734f"/>
<rect x="59.5" y="130.8" width="8.7" height="3.9" fill="#af9165"/>
<rect x="67.7" y="130.8" width="10.6" height="3.9" fill="#987c55"/>
<rect x="77.8" y="130.8" width="10.7" height="3.9" fill="#967a54"/>
<rect x="88.1" y="130.8" width="12.7" height="3.9" fill="#9f825a"/>
<rect x="100.2" y="130.8" width="14.4" height="3.9" fill="#bc9f73"/>
<rect x="114.1" y="130.8" width="7.9" height="3.9" fill="#9d8059"/>
<rect x="121.5" y="130.8" width="10.5" height="3.9" fill="#c6a779"/>
<rect x="131.5" y="130.8" width="5.5" height="3.9" fill="#886f4b"/>
<rect x="136.5" y="130.8" width="9.7" height="3.9" fill="#bea073"/>
<rect x="145.7" y="130.8" width="12.6" height="3.9" fill="#937852"/>
<rect x="157.8" y="130.8" width="14.9" height="3.9" fill="#a98c61"/>
<rect x="172.2" y="130.8" width="11.8" height="3.9" fill="#ba9d71"/>
<rect x="183.4" y="130.8" width="12.9" height="3.9" fill="#b09266"/>
<rect x="195.9" y="130.8" width="11.0" height="3.9" fill="#c2a476"/>
<rect x="206.4" y="130.8" width="14.1" height="3.9" fill="#b89a6c"/>
<rect x="220.0" y="130.8" width="9.4" height="3.9" fill="#ac8e63"/>
<rect x="228.9" y="130.8" width="15.8" height="3.9" fill="#927651"/>
<rect x="244.2" y="130.8" width="6.7" height="3.9" fill="#9a7d57"/>
<rect x="250.4" y="130.8" width="7.0" height="3.9" fill="#9c7f58"/>
<rect x="256.9" y="130.8" width="12.3" height="3.9" fill="#826947"/>
<rect x="268.7" y="130.8" width="7.4" height="3.9" fill="#9a7d57"/>
<rect x="275.6" y="130.8" width="16.5" height="3.9" fill="#a88b61"/>
<rect x="291.5" y="130.8" width="14.7" height="3.9" fill="#bc9f72"/>
<rect x="305.7" y="130.8" width="10.7" height="3.9" fill="#7e6645"/>
<rect x="315.9" y="130.8" width="11.5" height="3.9" fill="#b99a6c"/>
<rect x="326.9" y="130.8" width="9.6" height="3.9" fill="#927651"/>
<rect x="336.0" y="130.8" width="15.9" height="3.9" fill="#997c56"/>
<rect x="351.4" y="130.8" width="14.4" height="3.9" fill="#c4a678"/>
<rect x="365.3" y="130.8" width="14.7" height="3.9" fill="#927751"/>
<rect x="379.5" y="130.8" width="10.9" height="3.9" fill="#977b54"/>
<rect x="389.9" y="130.8" width="12.9" height="3.9" fill="#9c7f58"/>
<rect x="-3.0" y="134.2" width="7.4" height="4.3" fill="#bd9f73"/>
<rect x="3.9" y="134.2" width="9.5" height="4.3" fill="#ba9d71"/>
<rect x="12.9" y="134.2" width="16.2" height="4.3" fill="#b7986a"/>
<rect x="28.6" y="134.2" width="11.8" height="4.3" fill="#9e815a"/>
<rect x="39.9" y="134.2" width="9.3" height="4.3" fill="#846c49"/>
<rect x="48.7" y="134.2" width="10.9" height="4.3" fill="#9c7f58"/>
<rect x="59.1" y="134.2" width="6.1" height="4.3" fill="#ad8f63"/>
<rect x="64.7" y="134.2" width="13.2" height="4.3" fill="#836b48"/>
<rect x="77.4" y="134.2" width="7.2" height="4.3" fill="#cdae7e"/>
<rect x="84.1" y="134.2" width="14.2" height="4.3" fill="#b59769"/>
<rect x="97.8" y="134.2" width="6.8" height="4.3" fill="#9a7d56"/>
<rect x="104.2" y="134.2" width="11.4" height="4.3" fill="#b19366"/>
<rect x="115.1" y="134.2" width="12.3" height="4.3" fill="#917651"/>
<rect x="126.9" y="134.2" width="7.6" height="4.3" fill="#886f4c"/>
<rect x="134.0" y="134.2" width="6.9" height="4.3" fill="#b19266"/>
<rect x="140.4" y="134.2" width="14.5" height="4.3" fill="#9f825a"/>
<rect x="154.4" y="134.2" width="9.2" height="4.3" fill="#8f744f"/>
<rect x="163.2" y="134.2" width="14.0" height="4.3" fill="#aa8d62"/>
<rect x="176.7" y="134.2" width="15.6" height="4.3" fill="#ac8e63"/>
<rect x="191.8" y="134.2" width="15.0" height="4.3" fill="#aa8c62"/>
<rect x="206.3" y="134.2" width="15.3" height="4.3" fill="#7d6543"/>
<rect x="221.0" y="134.2" width="13.0" height="4.3" fill="#9b7e57"/>
<rect x="233.5" y="134.2" width="12.8" height="4.3" fill="#b39568"/>
<rect x="245.8" y="134.2" width="7.3" height="4.3" fill="#bb9e72"/>
<rect x="252.6" y="134.2" width="7.6" height="4.3" fill="#9c7f58"/>
<rect x="259.6" y="134.2" width="9.4" height="4.3" fill="#8f734f"/>
<rect x="268.5" y="134.2" width="13.1" height="4.3" fill="#ac8e63"/>
<rect x="281.2" y="134.2" width="5.7" height="4.3" fill="#a98b61"/>
<rect x="286.4" y="134.2" width="6.7" height="4.3" fill="#b6986a"/>
<rect x="292.6" y="134.2" width="11.1" height="4.3" fill="#816946"/>
<rect x="303.2" y="134.2" width="10.9" height="4.3" fill="#997d56"/>
<rect x="313.6" y="134.2" width="7.9" height="4.3" fill="#b29467"/>
<rect x="321.0" y="134.2" width="12.7" height="4.3" fill="#947853"/>
<rect x="333.2" y="134.2" width="14.7" height="4.3" fill="#a88a60"/>
<rect x="347.4" y="134.2" width="12.8" height="4.3" fill="#c0a275"/>
<rect x="359.7" y="134.2" width="16.1" height="4.3" fill="#ab8d62"/>
<rect x="375.2" y="134.2" width="12.7" height="4.3" fill="#8c714d"/>
<rect x="387.4" y="134.2" width="6.4" height="4.3" fill="#ac8f63"/>
<rect x="-3.0" y="138.0" width="13.8" height="3.0" fill="#977b54"/>
<rect x="10.3" y="138.0" width="8.4" height="3.0" fill="#b8996c"/>
<rect x="18.2" y="138.0" width="10.5" height="3.0" fill="#af9165"/>
<rect x="28.2" y="138.0" width="11.5" height="3.0" fill="#806846"/>
<rect x="39.2" y="138.0" width="8.4" height="3.0" fill="#b7986b"/>
<rect x="47.1" y="138.0" width="14.4" height="3.0" fill="#907450"/>
<rect x="61.0" y="138.0" width="15.3" height="3.0" fill="#9a7d56"/>
<rect x="75.8" y="138.0" width="5.9" height="3.0" fill="#9b7f58"/>
<rect x="81.1" y="138.0" width="14.4" height="3.0" fill="#c2a477"/>
<rect x="95.0" y="138.0" width="8.2" height="3.0" fill="#ccad7d"/>
<rect x="102.7" y="138.0" width="15.7" height="3.0" fill="#9e8159"/>
<rect x="118.0" y="138.0" width="5.6" height="3.0" fill="#796241"/>
<rect x="123.1" y="138.0" width="7.7" height="3.0" fill="#997c56"/>
<rect x="130.3" y="138.0" width="8.4" height="3.0" fill="#b6986a"/>
<rect x="138.2" y="138.0" width="11.8" height="3.0" fill="#9b7e57"/>
<rect x="149.5" y="138.0" width="12.7" height="3.0" fill="#7d6644"/>
<rect x="161.7" y="138.0" width="7.2" height="3.0" fill="#b39468"/>
<rect x="168.3" y="138.0" width="9.0" height="3.0" fill="#b09266"/>
<rect x="176.9" y="138.0" width="12.1" height="3.0" fill="#7b6443"/>
<rect x="188.5" y="138.0" width="9.3" height="3.0" fill="#836b48"/>
<rect x="197.4" y="138.0" width="7.1" height="3.0" fill="#8f744f"/>
<rect x="204.0" y="138.0" width="13.3" height="3.0" fill="#957953"/>
<rect x="216.8" y="138.0" width="6.0" height="3.0" fill="#907550"/>
<rect x="222.3" y="138.0" width="11.1" height="3.0" fill="#a78a60"/>
<rect x="232.9" y="138.0" width="15.3" height="3.0" fill="#9c7f58"/>
<rect x="247.7" y="138.0" width="12.4" height="3.0" fill="#b99a6c"/>
<rect x="259.6" y="138.0" width="8.2" height="3.0" fill="#ab8e63"/>
<rect x="267.3" y="138.0" width="6.4" height="3.0" fill="#997d56"/>
<rect x="273.3" y="138.0" width="11.1" height="3.0" fill="#9f825a"/>
<rect x="283.9" y="138.0" width="10.7" height="3.0" fill="#836b48"/>
<rect x="294.1" y="138.0" width="10.1" height="3.0" fill="#bea073"/>
<rect x="303.6" y="138.0" width="7.7" height="3.0" fill="#7d6544"/>
<rect x="310.8" y="138.0" width="10.6" height="3.0" fill="#9e8159"/>
<rect x="320.9" y="138.0" width="11.6" height="3.0" fill="#846b48"/>
<rect x="332.0" y="138.0" width="12.4" height="3.0" fill="#917550"/>
<rect x="343.9" y="138.0" width="15.2" height="3.0" fill="#b8996b"/>
<rect x="358.6" y="138.0" width="13.5" height="3.0" fill="#a98b61"/>
<rect x="371.6" y="138.0" width="14.2" height="3.0" fill="#9c8058"/>
<rect x="385.3" y="138.0" width="7.5" height="3.0" fill="#a98c61"/>
<rect x="-3.0" y="140.6" width="13.8" height="3.8" fill="#8e724e"/>
<rect x="10.3" y="140.6" width="10.8" height="3.8" fill="#9c7f58"/>
<rect x="20.6" y="140.6" width="16.4" height="3.8" fill="#917550"/>
<rect x="36.5" y="140.6" width="7.7" height="3.8" fill="#a6895f"/>
<rect x="43.7" y="140.6" width="7.5" height="3.8" fill="#ad9064"/>
<rect x="50.7" y="140.6" width="14.6" height="3.8" fill="#caac7c"/>
<rect x="64.8" y="140.6" width="12.6" height="3.8" fill="#88704c"/>
<rect x="76.8" y="140.6" width="8.5" height="3.8" fill="#9f825a"/>
<rect x="84.9" y="140.6" width="16.4" height="3.8" fill="#ab8d62"/>
<rect x="100.7" y="140.6" width="14.3" height="3.8" fill="#b99a6c"/>
<rect x="114.6" y="140.6" width="7.8" height="3.8" fill="#c6a879"/>
<rect x="121.8" y="140.6" width="10.6" height="3.8" fill="#bea174"/>
<rect x="132.0" y="140.6" width="13.3" height="3.8" fill="#b59669"/>
<rect x="144.8" y="140.6" width="12.3" height="3.8" fill="#9b7f58"/>
<rect x="156.6" y="140.6" width="10.6" height="3.8" fill="#9c7f58"/>
<rect x="166.7" y="140.6" width="15.5" height="3.8" fill="#8d724d"/>
<rect x="181.7" y="140.6" width="10.7" height="3.8" fill="#836b48"/>
<rect x="191.9" y="140.6" width="7.3" height="3.8" fill="#c8aa7b"/>
<rect x="198.7" y="140.6" width="6.8" height="3.8" fill="#b19366"/>
<rect x="205.0" y="140.6" width="8.0" height="3.8" fill="#b7986a"/>
<rect x="212.5" y="140.6" width="15.7" height="3.8" fill="#7a6342"/>
<rect x="227.6" y="140.6" width="16.1" height="3.8" fill="#b59669"/>
<rect x="243.2" y="140.6" width="9.3" height="3.8" fill="#9f825a"/>
<rect x="252.1" y="140.6" width="13.5" height="3.8" fill="#9a7e57"/>
<rect x="265.1" y="140.6" width="10.0" height="3.8" fill="#8d724d"/>
<rect x="274.6" y="140.6" width="16.4" height="3.8" fill="#a6895f"/>
<rect x="290.4" y="140.6" width="8.2" height="3.8" fill="#9a7e57"/>
<rect x="298.1" y="140.6" width="6.8" height="3.8" fill="#b09266"/>
<rect x="304.4" y="140.6" width="15.7" height="3.8" fill="#a98b61"/>
<rect x="319.6" y="140.6" width="9.2" height="3.8" fill="#b89a6c"/>
<rect x="328.2" y="140.6" width="15.6" height="3.8" fill="#b39568"/>
<rect x="343.4" y="140.6" width="9.4" height="3.8" fill="#b6986a"/>
<rect x="352.3" y="140.6" width="8.6" height="3.8" fill="#aa8d62"/>
<rect x="360.4" y="140.6" width="14.4" height="3.8" fill="#b99a6c"/>
<rect x="374.3" y="140.6" width="11.8" height="3.8" fill="#caab7c"/>
<rect x="385.7" y="140.6" width="13.9" height="3.8" fill="#8e734f"/>
<rect x="-3.0" y="143.8" width="6.4" height="4.3" fill="#9e815a"/>
<rect x="2.9" y="143.8" width="13.9" height="4.3" fill="#b99a6c"/>
<rect x="16.3" y="143.8" width="12.8" height="4.3" fill="#b09266"/>
<rect x="28.6" y="143.8" width="9.1" height="4.3" fill="#776040"/>
<rect x="37.1" y="143.8" width="11.3" height="4.3" fill="#b29467"/>
<rect x="48.0" y="143.8" width="7.2" height="4.3" fill="#b6976a"/>
<rect x="54.6" y="143.8" width="11.8" height="4.3" fill="#8c714d"/>
<rect x="65.9" y="143.8" width="6.3" height="4.3" fill="#917651"/>
<rect x="71.7" y="143.8" width="15.0" height="4.3" fill="#b7986b"/>
<rect x="86.2" y="143.8" width="15.8" height="4.3" fill="#af9165"/>
<rect x="101.4" y="143.8" width="10.4" height="4.3" fill="#9f825a"/>
<rect x="111.3" y="143.8" width="5.9" height="4.3" fill="#c2a477"/>
<rect x="116.7" y="143.8" width="9.6" height="4.3" fill="#927651"/>
<rect x="125.8" y="143.8" width="6.6" height="4.3" fill="#a6895f"/>
<rect x="131.9" y="143.8" width="16.3" height="4.3" fill="#b49568"/>
<rect x="147.8" y="143.8" width="10.3" height="4.3" fill="#7a6241"/>
<rect x="157.6" y="143.8" width="7.2" height="4.3" fill="#af9165"/>
<rect x="164.3" y="143.8" width="5.8" height="4.3" fill="#957953"/>
<rect x="169.6" y="143.8" width="12.7" height="4.3" fill="#caac7c"/>
<rect x="181.7" y="143.8" width="8.0" height="4.3" fill="#cdae7e"/>
<rect x="189.3" y="143.8" width="15.8" height="4.3" fill="#b49568"/>
<rect x="204.5" y="143.8" width="7.7" height="4.3" fill="#c4a678"/>
<rect x="211.8" y="143.8" width="8.7" height="4.3" fill="#b99a6c"/>
<rect x="220.0" y="143.8" width="7.1" height="4.3" fill="#b7996b"/>
<rect x="226.5" y="143.8" width="15.1" height="4.3" fill="#b49669"/>
<rect x="241.2" y="143.8" width="15.5" height="4.3" fill="#bc9f72"/>
<rect x="256.1" y="143.8" width="15.3" height="4.3" fill="#a98b61"/>
<rect x="271.0" y="143.8" width="10.0" height="4.3" fill="#c3a577"/>
<rect x="280.4" y="143.8" width="15.1" height="4.3" fill="#b8996b"/>
<rect x="295.0" y="143.8" width="13.4" height="4.3" fill="#796141"/>
<rect x="308.0" y="143.8" width="7.0" height="4.3" fill="#90744f"/>
<rect x="314.4" y="143.8" width="12.8" height="4.3" fill="#9f825a"/>
<rect x="326.7" y="143.8" width="8.3" height="4.3" fill="#9f825a"/>
<rect x="334.5" y="143.8" width="12.8" height="4.3" fill="#b7986b"/>
<rect x="346.8" y="143.8" width="10.5" height="4.3" fill="#c0a275"/>
<rect x="356.8" y="143.8" width="13.4" height="4.3" fill="#876e4b"/>
<rect x="369.7" y="143.8" width="11.8" height="4.3" fill="#a98b61"/>
<rect x="381.0" y="143.8" width="11.7" height="4.3" fill="#b7986b"/>
<rect x="-3.0" y="147.6" width="9.3" height="3.3" fill="#9d8059"/>
<rect x="5.8" y="147.6" width="11.6" height="3.3" fill="#a6895f"/>
<rect x="17.0" y="147.6" width="7.7" height="3.3" fill="#987b55"/>
<rect x="24.2" y="147.6" width="11.5" height="3.3" fill="#927651"/>
<rect x="35.2" y="147.6" width="10.7" height="3.3" fill="#886f4b"/>
<rect x="45.4" y="147.6" width="14.6" height="3.3" fill="#b99a6c"/>
<rect x="59.5" y="147.6" width="16.0" height="3.3" fill="#a78a5f"/>
<rect x="75.0" y="147.6" width="8.4" height="3.3" fill="#c3a577"/>
<rect x="82.9" y="147.6" width="11.8" height="3.3" fill="#a88b60"/>
<rect x="94.2" y="147.6" width="12.4" height="3.3" fill="#c7a97a"/>
<rect x="106.0" y="147.6" width="13.9" height="3.3" fill="#ac8f63"/>
<rect x="119.4" y="147.6" width="16.0" height="3.3" fill="#806846"/>
<rect x="134.9" y="147.6" width="11.0" height="3.3" fill="#bda073"/>
<rect x="145.4" y="147.6" width="16.4" height="3.3" fill="#c7a87a"/>
<rect x="161.3" y="147.6" width="10.3" height="3.3" fill="#9e8159"/>
<rect x="171.1" y="147.6" width="10.5" height="3.3" fill="#927751"/>
<rect x="181.1" y="147.6" width="15.0" height="3.3" fill="#947852"/>
<rect x="195.6" y="147.6" width="8.0" height="3.3" fill="#89704c"/>
<rect x="203.2" y="147.6" width="13.9" height="3.3" fill="#8f744f"/>
<rect x="216.5" y="147.6" width="6.1" height="3.3" fill="#b29467"/>
<rect x="222.1" y="147.6" width="12.5" height="3.3" fill="#7a6342"/>
<rect x="234.2" y="147.6" width="15.6" height="3.3" fill="#866d4a"/>
<rect x="249.2" y="147.6" width="12.7" height="3.3" fill="#af9165"/>
<rect x="261.5" y="147.6" width="14.6" height="3.3" fill="#9c7f58"/>
<rect x="275.5" y="147.6" width="14.8" height="3.3" fill="#bea073"/>
<rect x="289.9" y="147.6" width="12.3" height="3.3" fill="#a98b61"/>
<rect x="301.7" y="147.6" width="6.4" height="3.3" fill="#ad9064"/>
<rect x="307.6" y="147.6" width="7.8" height="3.3" fill="#947853"/>
<rect x="315.0" y="147.6" width="7.6" height="3.3" fill="#b99a6c"/>
<rect x="322.0" y="147.6" width="7.4" height="3.3" fill="#7e6644"/>
<rect x="329.0" y="147.6" width="11.7" height="3.3" fill="#bc9e72"/>
<rect x="340.2" y="147.6" width="15.5" height="3.3" fill="#8d724e"/>
<rect x="355.2" y="147.6" width="8.8" height="3.3" fill="#c1a376"/>
<rect x="363.5" y="147.6" width="14.9" height="3.3" fill="#cbac7c"/>
<rect x="377.9" y="147.6" width="12.4" height="3.3" fill="#c9aa7b"/>
<rect x="389.8" y="147.6" width="15.1" height="3.3" fill="#765f3f"/>
<rect x="-3.0" y="150.5" width="16.4" height="4.5" fill="#987c55"/>
<rect x="12.9" y="150.5" width="14.9" height="4.5" fill="#bc9e72"/>
<rect x="27.3" y="150.5" width="14.7" height="4.5" fill="#b49568"/>
<rect x="41.5" y="150.5" width="8.9" height="4.5" fill="#bfa275"/>
<rect x="49.9" y="150.5" width="6.6" height="4.5" fill="#937751"/>
<rect x="56.0" y="150.5" width="7.0" height="4.5" fill="#89704c"/>
<rect x="62.6" y="150.5" width="12.9" height="4.5" fill="#c6a879"/>
<rect x="75.0" y="150.5" width="9.6" height="4.5" fill="#8f744f"/>
<rect x="84.1" y="150.5" width="5.7" height="4.5" fill="#c5a778"/>
<rect x="89.3" y="150.5" width="11.8" height="4.5" fill="#9b7e57"/>
<rect x="100.6" y="150.5" width="14.2" height="4.5" fill="#9b7e57"/>
<rect x="114.3" y="150.5" width="14.2" height="4.5" fill="#ccad7d"/>
<rect x="128.0" y="150.5" width="11.1" height="4.5" fill="#b59669"/>
<rect x="138.6" y="150.5" width="9.7" height="4.5" fill="#a78a60"/>
<rect x="147.9" y="150.5" width="15.7" height="4.5" fill="#b8996c"/>
<rect x="163.0" y="150.5" width="10.7" height="4.5" fill="#7d6544"/>
<rect x="173.2" y="150.5" width="10.9" height="4.5" fill="#907550"/>
<rect x="183.6" y="150.5" width="12.4" height="4.5" fill="#957953"/>
<rect x="195.5" y="150.5" width="6.8" height="4.5" fill="#ba9d71"/>
<rect x="201.8" y="150.5" width="13.4" height="4.5" fill="#a6895f"/>
<rect x="214.7" y="150.5" width="10.9" height="4.5" fill="#7f6745"/>
<rect x="225.2" y="150.5" width="6.3" height="4.5" fill="#9a7e57"/>
<rect x="230.9" y="150.5" width="16.5" height="4.5" fill="#b19366"/>
<rect x="246.9" y="150.5" width="6.4" height="4.5" fill="#9d8058"/>
<rect x="252.8" y="150.5" width="12.4" height="4.5" fill="#937852"/>
<rect x="264.8" y="150.5" width="13.3" height="4.5" fill="#977a54"/>
<rect x="277.5" y="150.5" width="15.7" height="4.5" fill="#927651"/>
<rect x="292.8" y="150.5" width="8.5" height="4.5" fill="#9e8159"/>
<rect x="300.8" y="150.5" width="10.1" height="4.5" fill="#b8996b"/>
<rect x="310.4" y="150.5" width="13.9" height="4.5" fill="#c8a97a"/>
<rect x="323.9" y="150.5" width="15.4" height="4.5" fill="#b7986a"/>
<rect x="338.8" y="150.5" width="5.9" height="4.5" fill="#7a6342"/>
<rect x="344.1" y="150.5" width="7.1" height="4.5" fill="#987c56"/>
<rect x="350.7" y="150.5" width="14.8" height="4.5" fill="#9d8159"/>
<rect x="365.0" y="150.5" width="8.2" height="4.5" fill="#ab8e63"/>
<rect x="372.8" y="150.5" width="8.0" height="4.5" fill="#9e8159"/>
<rect x="380.2" y="150.5" width="14.6" height="4.5" fill="#8d724e"/>
<rect x="-3.0" y="154.4" width="13.3" height="3.9" fill="#ba9d71"/>
<rect x="9.8" y="154.4" width="7.9" height="3.9" fill="#977b55"/>
<rect x="17.1" y="154.4" width="15.9" height="3.9" fill="#846c49"/>
<rect x="32.5" y="154.4" width="10.5" height="3.9" fill="#c3a577"/>
<rect x="42.5" y="154.4" width="7.4" height="3.9" fill="#977b55"/>
<rect x="49.4" y="154.4" width="8.0" height="3.9" fill="#ae9064"/>
<rect x="56.9" y="154.4" width="12.9" height="3.9" fill="#ba9d71"/>
<rect x="69.3" y="154.4" width="5.7" height="3.9" fill="#ac8e63"/>
<rect x="74.4" y="154.4" width="9.9" height="3.9" fill="#aa8c61"/>
<rect x="83.8" y="154.4" width="13.5" height="3.9" fill="#937752"/>
<rect x="96.8" y="154.4" width="10.5" height="3.9" fill="#937752"/>
<rect x="106.7" y="154.4" width="12.4" height="3.9" fill="#a6895f"/>
<rect x="118.6" y="154.4" width="6.2" height="3.9" fill="#b6976a"/>
<rect x="124.4" y="154.4" width="12.2" height="3.9" fill="#927751"/>
<rect x="136.0" y="154.4" width="11.4" height="3.9" fill="#917550"/>
<rect x="147.0" y="154.4" width="6.6" height="3.9" fill="#ae9064"/>
<rect x="153.1" y="154.4" width="13.2" height="3.9" fill="#8e734f"/>
<rect x="165.8" y="154.4" width="10.3" height="3.9" fill="#b19266"/>
<rect x="175.6" y="154.4" width="16.3" height="3.9" fill="#977b54"/>
<rect x="191.4" y="154.4" width="11.7" height="3.9" fill="#af9165"/>
<rect x="202.6" y="154.4" width="10.4" height="3.9" fill="#ae9165"/>
<rect x="212.6" y="154.4" width="12.2" height="3.9" fill="#b39568"/>
<rect x="224.2" y="154.4" width="15.4" height="3.9" fill="#9b7e57"/>
<rect x="239.2" y="154.4" width="15.8" height="3.9" fill="#c7a97a"/>
<rect x="254.5" y="154.4" width="15.8" height="3.9" fill="#8d724e"/>
<rect x="269.8" y="154.4" width="6.7" height="3.9" fill="#7a6342"/>
<rect x="275.9" y="154.4" width="8.1" height="3.9" fill="#a98c61"/>
<rect x="283.5" y="154.4" width="6.6" height="3.9" fill="#967a54"/>
<rect x="289.6" y="154.4" width="14.0" height="3.9" fill="#c1a376"/>
<rect x="303.1" y="154.4" width="9.3" height="3.9" fill="#967a54"/>
<rect x="311.9" y="154.4" width="10.1" height="3.9" fill="#816946"/>
<rect x="321.5" y="154.4" width="9.1" height="3.9" fill="#816946"/>
<rect x="330.1" y="154.4" width="11.1" height="3.9" fill="#ad8f64"/>
<rect x="340.7" y="154.4" width="10.9" height="3.9" fill="#c9ab7c"/>
<rect x="351.1" y="154.4" width="5.6" height="3.9" fill="#ab8e63"/>
<rect x="356.2" y="154.4" width="9.3" height="3.9" fill="#b7986b"/>
<rect x="365.0" y="154.4" width="15.0" height="3.9" fill="#a98b61"/>
<rect x="379.5" y="154.4" width="8.2" height="3.9" fill="#a88a60"/>
<rect x="387.2" y="154.4" width="6.1" height="3.9" fill="#7d6544"/>
<rect x="-3.0" y="157.8" width="15.2" height="3.9" fill="#846c49"/>
<rect x="11.7" y="157.8" width="10.7" height="3.9" fill="#8f744f"/>
<rect x="21.9" y="157.8" width="9.3" height="3.9" fill="#765f3f"/>
<rect x="30.7" y="157.8" width="16.1" height="3.9" fill="#b59669"/>
<rect x="46.3" y="157.8" width="9.6" height="3.9" fill="#7d6544"/>
<rect x="55.4" y="157.8" width="11.7" height="3.9" fill="#b09266"/>
<rect x="66.6" y="157.8" width="7.2" height="3.9" fill="#987b55"/>
<rect x="73.4" y="157.8" width="6.0" height="3.9" fill="#b7996b"/>
<rect x="78.8" y="157.8" width="12.0" height="3.9" fill="#a7895f"/>
<rect x="90.3" y="157.8" width="8.5" height="3.9" fill="#7a6242"/>
<rect x="98.4" y="157.8" width="15.0" height="3.9" fill="#bb9d71"/>
<rect x="112.9" y="157.8" width="11.2" height="3.9" fill="#a6895f"/>
<rect x="123.6" y="157.8" width="15.0" height="3.9" fill="#8c714d"/>
<rect x="138.1" y="157.8" width="7.3" height="3.9" fill="#b59769"/>
<rect x="144.9" y="157.8" width="14.3" height="3.9" fill="#937752"/>
<rect x="158.7" y="157.8" width="9.8" height="3.9" fill="#927651"/>
<rect x="168.0" y="157.8" width="11.5" height="3.9" fill="#b59669"/>
<rect x="179.0" y="157.8" width="6.3" height="3.9" fill="#7f6745"/>
<rect x="184.8" y="157.8" width="11.1" height="3.9" fill="#90744f"/>
<rect x="195.5" y="157.8" width="7.2" height="3.9" fill="#aa8d62"/>
<rect x="202.1" y="157.8" width="6.5" height="3.9" fill="#9a7e57"/>
<rect x="208.2" y="157.8" width="5.9" height="3.9" fill="#c0a275"/>
<rect x="213.5" y="157.8" width="16.3" height="3.9" fill="#937752"/>
<rect x="229.3" y="157.8" width="5.8" height="3.9" fill="#bfa275"/>
<rect x="234.6" y="157.8" width="11.4" height="3.9" fill="#b39568"/>
<rect x="245.6" y="157.8" width="6.8" height="3.9" fill="#a6895f"/>
<rect x="251.8" y="157.8" width="9.0" height="3.9" fill="#937752"/>
<rect x="260.3" y="157.8" width="6.0" height="3.9" fill="#836b48"/>
<rect x="265.7" y="157.8" width="14.0" height="3.9" fill="#8f744f"/>
<rect x="279.2" y="157.8" width="15.8" height="3.9" fill="#c7a97a"/>
<rect x="294.5" y="157.8" width="10.1" height="3.9" fill="#9f825a"/>
<rect x="304.1" y="157.8" width="9.3" height="3.9" fill="#846b48"/>
<rect x="312.9" y="157.8" width="10.3" height="3.9" fill="#b49568"/>
<rect x="322.7" y="157.8" width="14.3" height="3.9" fill="#8f734f"/>
<rect x="336.5" y="157.8" width="10.3" height="3.9" fill="#9d8159"/>
<rect x="346.3" y="157.8" width="11.8" height="3.9" fill="#977b55"/>
<rect x="357.6" y="157.8" width="14.0" height="3.9" fill="#8c714d"/>
<rect x="371.1" y="157.8" width="6.2" height="3.9" fill="#b49568"/>
<rect x="376.8" y="157.8" width="12.2" height="3.9" fill="#89704c"/>
<rect x="388.5" y="157.8" width="8.8" height="3.9" fill="#c7a87a"/>
<rect x="-3.0" y="161.3" width="13.8" height="4.2" fill="#9c8058"/>
<rect x="10.3" y="161.3" width="15.0" height="4.2" fill="#b8996c"/>
<rect x="24.8" y="161.3" width="13.0" height="4.2" fill="#a6895f"/>
<rect x="37.3" y="161.3" width="9.3" height="4.2" fill="#c1a476"/>
<rect x="46.0" y="161.3" width="16.3" height="4.2" fill="#b29468"/>
<rect x="61.9" y="161.3" width="11.1" height="4.2" fill="#977b54"/>
<rect x="72.5" y="161.3" width="8.3" height="4.2" fill="#a98c61"/>
<rect x="80.3" y="161.3" width="10.0" height="4.2" fill="#8e734e"/>
<rect x="89.8" y="161.3" width="15.6" height="4.2" fill="#8d724e"/>
<rect x="104.9" y="161.3" width="8.6" height="4.2" fill="#b39468"/>
<rect x="113.0" y="161.3" width="9.6" height="4.2" fill="#927751"/>
<rect x="122.1" y="161.3" width="7.0" height="4.2" fill="#bc9e72"/>
<rect x="128.7" y="161.3" width="7.7" height="4.2" fill="#9e8159"/>
<rect x="135.8" y="161.3" width="6.1" height="4.2" fill="#9a7d57"/>
<rect x="141.4" y="161.3" width="13.1" height="4.2" fill="#c5a779"/>
<rect x="154.0" y="161.3" width="15.7" height="4.2" fill="#917550"/>
<rect x="169.2" y="161.3" width="13.5" height="4.2" fill="#ae9064"/>
<rect x="182.2" y="161.3" width="7.2" height="4.2" fill="#b29467"/>
<rect x="189.0" y="161.3" width="14.8" height="4.2" fill="#a98c61"/>
<rect x="203.3" y="161.3" width="13.0" height="4.2" fill="#977b55"/>
<rect x="215.8" y="161.3" width="12.5" height="4.2" fill="#ae9065"/>
<rect x="227.8" y="161.3" width="16.0" height="4.2" fill="#b8996b"/>
<rect x="243.3" y="161.3" width="8.0" height="4.2" fill="#a98c61"/>
<rect x="250.8" y="161.3" width="10.8" height="4.2" fill="#c9aa7b"/>
<rect x="261.1" y="161.3" width="14.4" height="4.2" fill="#9e8159"/>
<rect x="275.0" y="161.3" width="14.9" height="4.2" fill="#a88b60"/>
<rect x="289.4" y="161.3" width="5.7" height="4.2" fill="#a98b61"/>
<rect x="294.6" y="161.3" width="11.4" height="4.2" fill="#b19367"/>
<rect x="305.5" y="161.3" width="6.4" height="4.2" fill="#ac8e63"/>
<rect x="311.4" y="161.3" width="14.4" height="4.2" fill="#9e815a"/>
<rect x="325.3" y="161.3" width="13.4" height="4.2" fill="#7f6745"/>
<rect x="338.2" y="161.3" width="7.9" height="4.2" fill="#b89a6c"/>
<rect x="345.6" y="161.3" width="13.4" height="4.2" fill="#9b7f57"/>
<rect x="358.5" y="161.3" width="14.2" height="4.2" fill="#a88b60"/>
<rect x="372.2" y="161.3" width="6.3" height="4.2" fill="#8e734e"/>
<rect x="378.0" y="161.3" width="13.4" height="4.2" fill="#9b7e57"/>
<rect x="-3.0" y="165.0" width="9.0" height="4.0" fill="#7f6745"/>
<rect x="5.5" y="165.0" width="5.8" height="4.0" fill="#8d724e"/>
<rect x="10.8" y="165.0" width="8.4" height="4.0" fill="#ba9d71"/>
<rect x="18.6" y="165.0" width="15.3" height="4.0" fill="#7f6745"/>
<rect x="33.4" y="165.0" width="12.9" height="4.0" fill="#957953"/>
<rect x="45.8" y="165.0" width="7.2" height="4.0" fill="#c8aa7b"/>
<rect x="52.6" y="165.0" width="9.1" height="4.0" fill="#846c49"/>
<rect x="61.2" y="165.0" width="6.2" height="4.0" fill="#b7986b"/>
<rect x="66.9" y="165.0" width="13.5" height="4.0" fill="#aa8d62"/>
<rect x="79.9" y="165.0" width="10.2" height="4.0" fill="#b09266"/>
<rect x="89.6" y="165.0" width="7.6" height="4.0" fill="#a6895f"/>
<rect x="96.7" y="165.0" width="13.5" height="4.0" fill="#8e734e"/>
<rect x="109.7" y="165.0" width="9.8" height="4.0" fill="#ac8e63"/>
<rect x="119.0" y="165.0" width="13.7" height="4.0" fill="#9b7e57"/>
<rect x="132.2" y="165.0" width="11.3" height="4.0" fill="#9f825a"/>
<rect x="143.0" y="165.0" width="11.2" height="4.0" fill="#796241"/>
<rect x="153.7" y="165.0" width="13.0" height="4.0" fill="#ba9d71"/>
<rect x="166.2" y="165.0" width="13.6" height="4.0" fill="#977b54"/>
<rect x="179.3" y="165.0" width="12.5" height="4.0" fill="#ba9d71"/>
<rect x="191.3" y="165.0" width="10.6" height="4.0" fill="#826a47"/>
<rect x="201.5" y="165.0" width="10.5" height="4.0" fill="#927651"/>
<rect x="211.4" y="165.0" width="6.2" height="4.0" fill="#b99a6c"/>
<rect x="217.2" y="165.0" width="7.4" height="4.0" fill="#bea174"/>
<rect x="224.1" y="165.0" width="11.8" height="4.0" fill="#b49669"/>
<rect x="235.4" y="165.0" width="16.4" height="4.0" fill="#c9aa7b"/>
<rect x="251.2" y="165.0" width="10.8" height="4.0" fill="#977b55"/>
<rect x="261.6" y="165.0" width="9.0" height="4.0" fill="#bea074"/>
<rect x="270.1" y="165.0" width="10.3" height="4.0" fill="#b39568"/>
<rect x="279.9" y="165.0" width="6.4" height="4.0" fill="#c2a577"/>
<rect x="285.7" y="165.0" width="14.4" height="4.0" fill="#ccad7e"/>
<rect x="299.6" y="165.0" width="11.9" height="4.0" fill="#b49669"/>
<rect x="311.1" y="165.0" width="10.2" height="4.0" fill="#a88b60"/>
<rect x="320.8" y="165.0" width="10.0" height="4.0" fill="#ccad7e"/>
<rect x="330.3" y="165.0" width="9.5" height="4.0" fill="#856d49"/>
<rect x="339.3" y="165.0" width="9.5" height="4.0" fill="#9e8159"/>
<rect x="348.3" y="165.0" width="6.3" height="4.0" fill="#765f3f"/>
<rect x="354.1" y="165.0" width="14.8" height="4.0" fill="#9b7f58"/>
<rect x="368.4" y="165.0" width="14.9" height="4.0" fill="#9b7f58"/>
<rect x="382.8" y="165.0" width="11.7" height="4.0" fill="#9b7f57"/>
<rect x="-3.0" y="168.5" width="10.2" height="3.6" fill="#b19366"/>
<rect x="6.7" y="168.5" width="14.5" height="3.6" fill="#8c714d"/>
<rect x="20.8" y="168.5" width="6.2" height="3.6" fill="#967a54"/>
<rect x="26.5" y="168.5" width="6.7" height="3.6" fill="#a78a60"/>
<rect x="32.7" y="168.5" width="8.7" height="3.6" fill="#b49568"/>
<rect x="40.9" y="168.5" width="12.2" height="3.6" fill="#ac8e63"/>
<rect x="52.6" y="168.5" width="10.9" height="3.6" fill="#947852"/>
<rect x="63.0" y="168.5" width="9.6" height="3.6" fill="#a78a60"/>
<rect x="72.1" y="168.5" width="13.3" height="3.6" fill="#c8aa7b"/>
<rect x="84.9" y="168.5" width="11.3" height="3.6" fill="#bc9f72"/>
<rect x="95.7" y="168.5" width="14.3" height="3.6" fill="#b29367"/>
<rect x="109.4" y="168.5" width="10.9" height="3.6" fill="#9a7d56"/>
<rect x="119.8" y="168.5" width="13.9" height="3.6" fill="#977b55"/>
<rect x="133.3" y="168.5" width="6.1" height="3.6" fill="#a6895f"/>
<rect x="138.9" y="168.5" width="9.9" height="3.6" fill="#a98c61"/>
<rect x="148.3" y="168.5" width="8.3" height="3.6" fill="#a88a60"/>
<rect x="156.1" y="168.5" width="11.1" height="3.6" fill="#836b48"/>
<rect x="166.7" y="168.5" width="13.7" height="3.6" fill="#b09266"/>
<rect x="179.8" y="168.5" width="16.1" height="3.6" fill="#ba9d71"/>
<rect x="195.4" y="168.5" width="8.9" height="3.6" fill="#a98c61"/>
<rect x="203.8" y="168.5" width="7.3" height="3.6" fill="#a88b60"/>
<rect x="210.6" y="168.5" width="9.2" height="3.6" fill="#876e4b"/>
<rect x="219.3" y="168.5" width="14.0" height="3.6" fill="#bea174"/>
<rect x="232.8" y="168.5" width="11.6" height="3.6" fill="#ac8e63"/>
<rect x="244.0" y="168.5" width="6.0" height="3.6" fill="#c1a376"/>
<rect x="249.4" y="168.5" width="7.7" height="3.6" fill="#937752"/>
<rect x="256.7" y="168.5" width="7.7" height="3.6" fill="#826a47"/>
<rect x="263.9" y="168.5" width="7.3" height="3.6" fill="#b6986a"/>
<rect x="270.8" y="168.5" width="16.4" height="3.6" fill="#b09266"/>
<rect x="286.7" y="168.5" width="9.2" height="3.6" fill="#b29467"/>
<rect x="295.3" y="168.5" width="8.8" height="3.6" fill="#987c55"/>
<rect x="303.6" y="168.5" width="11.9" height="3.6" fill="#8d724e"/>
<rect x="315.0" y="168.5" width="16.0" height="3.6" fill="#a88b61"/>
<rect x="330.5" y="168.5" width="10.0" height="3.6" fill="#806846"/>
<rect x="340.0" y="168.5" width="9.1" height="3.6" fill="#aa8d62"/>
<rect x="348.6" y="168.5" width="12.4" height="3.6" fill="#89704c"/>
<rect x="360.5" y="168.5" width="15.6" height="3.6" fill="#7b6342"/>
<rect x="375.6" y="168.5" width="6.2" height="3.6" fill="#8c714d"/>
<rect x="381.4" y="168.5" width="11.1" height="3.6" fill="#bfa174"/>
<rect x="-3.0" y="171.6" width="8.0" height="3.3" fill="#987b55"/>
<rect x="4.5" y="171.6" width="8.5" height="3.3" fill="#c3a577"/>
<rect x="12.6" y="171.6" width="10.4" height="3.3" fill="#af9165"/>
<rect x="22.4" y="171.6" width="9.3" height="3.3" fill="#b7986b"/>
<rect x="31.2" y="171.6" width="14.8" height="3.3" fill="#a98c61"/>
<rect x="45.5" y="171.6" width="13.9" height="3.3" fill="#9e8159"/>
<rect x="59.0" y="171.6" width="15.8" height="3.3" fill="#927751"/>
<rect x="74.2" y="171.6" width="11.2" height="3.3" fill="#9c8058"/>
<rect x="85.0" y="171.6" width="8.7" height="3.3" fill="#937752"/>
<rect x="93.2" y="171.6" width="14.1" height="3.3" fill="#ad9064"/>
<rect x="106.8" y="171.6" width="5.8" height="3.3" fill="#bd9f73"/>
<rect x="112.1" y="171.6" width="16.1" height="3.3" fill="#a6895f"/>
<rect x="127.7" y="171.6" width="9.2" height="3.3" fill="#9e8159"/>
<rect x="136.4" y="171.6" width="16.0" height="3.3" fill="#ae9065"/>
<rect x="151.8" y="171.6" width="8.2" height="3.3" fill="#90744f"/>
<rect x="159.6" y="171.6" width="8.5" height="3.3" fill="#9c7f58"/>
<rect x="167.6" y="171.6" width="16.0" height="3.3" fill="#9a7e57"/>
<rect x="183.1" y="171.6" width="7.9" height="3.3" fill="#957953"/>
<rect x="190.5" y="171.6" width="8.1" height="3.3" fill="#a6895f"/>
<rect x="198.1" y="171.6" width="12.0" height="3.3" fill="#947852"/>
<rect x="209.6" y="171.6" width="12.7" height="3.3" fill="#bfa174"/>
<rect x="221.9" y="171.6" width="12.5" height="3.3" fill="#bea174"/>
<rect x="233.9" y="171.6" width="14.5" height="3.3" fill="#aa8d62"/>
<rect x="247.9" y="171.6" width="8.5" height="3.3" fill="#937752"/>
<rect x="255.8" y="171.6" width="10.7" height="3.3" fill="#bc9f73"/>
<rect x="266.1" y="171.6" width="12.9" height="3.3" fill="#a78a5f"/>
<rect x="278.4" y="171.6" width="15.4" height="3.3" fill="#b59669"/>
<rect x="293.3" y="171.6" width="16.1" height="3.3" fill="#9c8058"/>
<rect x="309.0" y="171.6" width="16.2" height="3.3" fill="#caac7c"/>
<rect x="324.7" y="171.6" width="13.6" height="3.3" fill="#c0a275"/>
<rect x="337.8" y="171.6" width="13.4" height="3.3" fill="#caab7c"/>
<rect x="350.7" y="171.6" width="6.5" height="3.3" fill="#9e8159"/>
<rect x="356.7" y="171.6" width="14.0" height="3.3" fill="#c3a577"/>
<rect x="370.3" y="171.6" width="15.0" height="3.3" fill="#8f734f"/>
<rect x="384.7" y="171.6" width="6.8" height="3.3" fill="#8c714d"/>
<rect x="-3.0" y="174.5" width="6.7" height="4.4" fill="#b49568"/>
<rect x="3.2" y="174.5" width="5.7" height="4.4" fill="#947853"/>
<rect x="8.4" y="174.5" width="12.5" height="4.4" fill="#c0a375"/>
<rect x="20.5" y="174.5" width="14.0" height="4.4" fill="#9d8059"/>
<rect x="34.0" y="174.5" width="7.4" height="4.4" fill="#9f825a"/>
<rect x="40.9" y="174.5" width="12.1" height="4.4" fill="#90744f"/>
<rect x="52.5" y="174.5" width="8.9" height="4.4" fill="#ae9064"/>
<rect x="60.9" y="174.5" width="11.4" height="4.4" fill="#a6895f"/>
<rect x="71.8" y="174.5" width="12.1" height="4.4" fill="#937852"/>
<rect x="83.4" y="174.5" width="6.6" height="4.4" fill="#ab8d62"/>
<rect x="89.5" y="174.5" width="15.1" height="4.4" fill="#a88a60"/>
<rect x="104.0" y="174.5" width="6.3" height="4.4" fill="#b19266"/>
<rect x="109.9" y="174.5" width="11.5" height="4.4" fill="#caac7c"/>
<rect x="120.8" y="174.5" width="8.3" height="4.4" fill="#9b7f58"/>
<rect x="128.6" y="174.5" width="10.5" height="4.4" fill="#8c714d"/>
<rect x="138.6" y="174.5" width="5.8" height="4.4" fill="#8f744f"/>
<rect x="143.9" y="174.5" width="10.4" height="4.4" fill="#b19366"/>
<rect x="153.8" y="174.5" width="7.8" height="4.4" fill="#b7986b"/>
<rect x="161.1" y="174.5" width="15.1" height="4.4" fill="#937751"/>
<rect x="175.7" y="174.5" width="10.7" height="4.4" fill="#c2a577"/>
<rect x="185.9" y="174.5" width="8.9" height="4.4" fill="#7c6443"/>
<rect x="194.3" y="174.5" width="6.4" height="4.4" fill="#af9165"/>
<rect x="200.2" y="174.5" width="13.1" height="4.4" fill="#b99a6c"/>
<rect x="212.8" y="174.5" width="7.2" height="4.4" fill="#89704c"/>
<rect x="219.5" y="174.5" width="9.0" height="4.4" fill="#776040"/>
<rect x="228.0" y="174.5" width="9.4" height="4.4" fill="#997d56"/>
<rect x="236.9" y="174.5" width="11.7" height="4.4" fill="#b29467"/>
<rect x="248.1" y="174.5" width="9.3" height="4.4" fill="#c3a577"/>
<rect x="257.0" y="174.5" width="16.0" height="4.4" fill="#826a47"/>
<rect x="272.4" y="174.5" width="11.0" height="4.4" fill="#917651"/>
<rect x="282.9" y="174.5" width="13.9" height="4.4" fill="#9a7e57"/>
<rect x="296.3" y="174.5" width="8.9" height="4.4" fill="#9b7e57"/>
<rect x="304.7" y="174.5" width="10.4" height="4.4" fill="#af9165"/>
<rect x="314.7" y="174.5" width="12.1" height="4.4" fill="#8f744f"/>
<rect x="326.2" y="174.5" width="7.1" height="4.4" fill="#9d8059"/>
<rect x="332.8" y="174.5" width="8.2" height="4.4" fill="#bfa274"/>
<rect x="340.4" y="174.5" width="13.0" height="4.4" fill="#a6895f"/>
<rect x="353.0" y="174.5" width="16.3" height="4.4" fill="#c2a477"/>
<rect x="368.7" y="174.5" width="15.1" height="4.4" fill="#b19367"/>
<rect x="383.3" y="174.5" width="11.9" height="4.4" fill="#a6895f"/>
<rect x="-3.0" y="178.4" width="11.6" height="3.6" fill="#957953"/>
<rect x="8.1" y="178.4" width="6.6" height="3.6" fill="#b29467"/>
<rect x="14.2" y="178.4" width="11.9" height="3.6" fill="#b49669"/>
<rect x="25.6" y="178.4" width="5.9" height="3.6" fill="#ac8e63"/>
<rect x="30.9" y="178.4" width="5.6" height="3.6" fill="#9f825a"/>
<rect x="36.0" y="178.4" width="13.8" height="3.6" fill="#b09266"/>
<rect x="49.3" y="178.4" width="14.6" height="3.6" fill="#caac7c"/>
<rect x="63.3" y="178.4" width="7.5" height="3.6" fill="#967a54"/>
<rect x="70.4" y="178.4" width="6.8" height="3.6" fill="#bc9f72"/>
<rect x="76.6" y="178.4" width="10.8" height="3.6" fill="#927651"/>
<rect x="86.9" y="178.4" width="6.6" height="3.6" fill="#8c714d"/>
<rect x="93.0" y="178.4" width="16.2" height="3.6" fill="#a98c61"/>
<rect x="108.7" y="178.4" width="11.2" height="3.6" fill="#9d8059"/>
<rect x="119.5" y="178.4" width="8.0" height="3.6" fill="#846c49"/>
<rect x="127.0" y="178.4" width="8.9" height="3.6" fill="#9f825a"/>
<rect x="135.4" y="178.4" width="16.0" height="3.6" fill="#c3a577"/>
<rect x="150.9" y="178.4" width="5.8" height="3.6" fill="#aa8d62"/>
<rect x="156.2" y="178.4" width="14.7" height="3.6" fill="#b49669"/>
<rect x="170.4" y="178.4" width="13.7" height="3.6" fill="#997c56"/>
<rect x="183.6" y="178.4" width="14.7" height="3.6" fill="#967a54"/>
<rect x="197.8" y="178.4" width="14.7" height="3.6" fill="#977a54"/>
<rect x="212.0" y="178.4" width="14.9" height="3.6" fill="#c0a375"/>
<rect x="226.3" y="178.4" width="16.0" height="3.6" fill="#997d56"/>
<rect x="241.8" y="178.4" width="10.6" height="3.6" fill="#77603f"/>
<rect x="252.0" y="178.4" width="14.8" height="3.6" fill="#b99a6c"/>
<rect x="266.3" y="178.4" width="14.6" height="3.6" fill="#ab8e62"/>
<rect x="280.4" y="178.4" width="6.0" height="3.6" fill="#997d56"/>
<rect x="285.9" y="178.4" width="6.6" height="3.6" fill="#957953"/>
<rect x="292.0" y="178.4" width="7.4" height="3.6" fill="#9f825a"/>
<rect x="298.9" y="178.4" width="7.9" height="3.6" fill="#b39468"/>
<rect x="306.3" y="178.4" width="9.2" height="3.6" fill="#8c714d"/>
<rect x="315.0" y="178.4" width="13.4" height="3.6" fill="#967a54"/>
<rect x="328.0" y="178.4" width="15.6" height="3.6" fill="#886f4b"/>
<rect x="343.1" y="178.4" width="16.5" height="3.6" fill="#77603f"/>
<rect x="359.1" y="178.4" width="13.8" height="3.6" fill="#89704c"/>
<rect x="372.3" y="178.4" width="8.4" height="3.6" fill="#886f4c"/>
<rect x="380.3" y="178.4" width="12.4" height="3.6" fill="#947953"/>
</g></g>
<g filter="url(#b1)">
<ellipse cx="182" cy="151" rx="24" ry="7" fill="#8e7454" opacity="0.75"/>
<ellipse cx="152" cy="140" rx="14" ry="6" fill="#4e3c2a" opacity="0.75"/>
<ellipse cx="227" cy="72" rx="13" ry="7" fill="#9a8060" opacity="0.75"/>
<ellipse cx="550" cy="102" rx="16" ry="6" fill="#3e3024" opacity="0.75"/>
<ellipse cx="427" cy="90" rx="10" ry="6" fill="#362a1e" opacity="0.75"/>
<ellipse cx="592" cy="170" rx="14" ry="6" fill="#7a6448" opacity="0.75"/>
<ellipse cx="462" cy="142" rx="8" ry="5" fill="#3a2c20" opacity="0.75"/>
<ellipse cx="92" cy="145" rx="10" ry="5" fill="#4a3828" opacity="0.75"/>
<ellipse cx="32" cy="138" rx="12" ry="5" fill="#5a4630" opacity="0.75"/>
<ellipse cx="512" cy="142" rx="18" ry="5" fill="#4a3a26" opacity="0.75"/>
<ellipse cx="582" cy="140" rx="14" ry="5" fill="#3a2e20" opacity="0.75"/>
</g>
<path d="M135.0 122.0 L130.0 90.0 L142.0 60.0 L162.0 48.0 L184.0 62.0 L197.0 95.0 L194.0 124.0 Z" fill="#7a7e52" filter="url(#bush)" opacity="0.85"/>
<path d="M0.0 88.0 L34.0 78.0 L48.0 108.0 L34.0 126.0 L0.0 128.0 Z" fill="#727650" filter="url(#bush)" opacity="0.75"/>
<path d="M0.0 128.0 L36.0 130.0 L54.0 146.0 L24.0 156.0 L0.0 152.0 Z" fill="#66683e" filter="url(#bush)" opacity="0.75"/>
<path d="M212.0 68.0 L244.0 60.0 L246.0 82.0 L214.0 86.0 Z" fill="#767c4c" filter="url(#bush)" opacity="0.8"/>
<path d="M264.0 116.0 L304.0 118.0 L306.0 132.0 L262.0 132.0 Z" fill="#6e7448" filter="url(#bush)" opacity="0.8"/>
<path d="M214.0 132.0 L240.0 130.0 L242.0 152.0 L216.0 154.0 Z" fill="#686c44" filter="url(#bush)" opacity="0.8"/>
<path d="M295.0 162.0 L312.0 160.0 L320.0 202.0 L300.0 208.0 Z" fill="#828a5c" filter="url(#bush)" opacity="0.8"/>
<path d="M344.0 78.0 L404.0 80.0 L424.0 120.0 L382.0 130.0 L348.0 116.0 Z" fill="#767c4e" filter="url(#bush)" opacity="0.75"/>
<path d="M450.0 138.0 L478.0 136.0 L476.0 156.0 L450.0 156.0 Z" fill="#666c44" filter="url(#bush)" opacity="0.8"/>
<path d="M392.0 115.0 L442.0 118.0 L437.0 135.0 L397.0 132.0 Z" fill="#6a7046" filter="url(#bush)" opacity="0.7"/>
<clipPath id="k8"><path d="M0.0 166.0 L112.0 170.0 L252.0 175.0 L392.0 179.0 L492.0 183.0 L608.0 185.0 L608.0 256.0 L0.0 256.0 Z"/></clipPath>
<g clip-path="url(#k8)"><g filter="url(#b05)">
<rect x="-5" y="160" width="618" height="106" fill="#9c8462"/>
<rect x="-8.0" y="164.2" width="26.4" height="2.9" fill="#554530"/>
<rect x="18.4" y="163.6" width="38.3" height="2.8" fill="#4f402c"/>
<rect x="56.7" y="163.6" width="44.7" height="2.2" fill="#62513a"/>
<rect x="101.4" y="164.5" width="21.7" height="2.8" fill="#5b4a34"/>
<rect x="123.1" y="164.5" width="31.4" height="2.3" fill="#62513a"/>
<rect x="154.5" y="164.4" width="26.2" height="2.6" fill="#574832"/>
<rect x="180.8" y="164.4" width="26.2" height="2.6" fill="#615139"/>
<rect x="207.0" y="164.4" width="19.1" height="2.6" fill="#5f4e37"/>
<rect x="226.1" y="163.9" width="49.1" height="2.8" fill="#50412d"/>
<rect x="275.1" y="163.8" width="29.0" height="2.8" fill="#594933"/>
<rect x="304.1" y="163.5" width="14.2" height="2.9" fill="#5a4a34"/>
<rect x="318.3" y="163.5" width="23.4" height="2.7" fill="#4e3f2b"/>
<rect x="341.7" y="163.5" width="34.4" height="2.7" fill="#5e4e37"/>
<rect x="376.0" y="164.0" width="41.6" height="2.8" fill="#4c3e2a"/>
<rect x="417.7" y="163.9" width="32.7" height="2.5" fill="#4b3d2a"/>
<rect x="450.3" y="164.0" width="16.1" height="2.6" fill="#5c4b35"/>
<rect x="466.4" y="163.5" width="20.7" height="2.3" fill="#63523a"/>
<rect x="487.1" y="164.4" width="23.7" height="2.3" fill="#4e3f2b"/>
<rect x="510.8" y="164.4" width="30.6" height="3.0" fill="#4b3d2a"/>
<rect x="541.5" y="164.2" width="26.5" height="2.3" fill="#65543c"/>
<rect x="567.9" y="163.6" width="33.7" height="2.9" fill="#4f402c"/>
<rect x="601.6" y="164.0" width="32.9" height="2.7" fill="#50412d"/>
<rect x="-8.0" y="167.0" width="39.4" height="3.0" fill="#b19b73"/>
<rect x="31.4" y="167.0" width="27.1" height="3.0" fill="#af9a72"/>
<rect x="58.5" y="167.0" width="31.8" height="3.0" fill="#a8946d"/>
<rect x="90.3" y="167.0" width="19.1" height="3.0" fill="#ab966f"/>
<rect x="109.4" y="167.0" width="31.2" height="3.0" fill="#9e8b66"/>
<rect x="140.7" y="167.0" width="11.2" height="3.0" fill="#a7936c"/>
<rect x="151.8" y="167.0" width="19.2" height="3.0" fill="#b29d74"/>
<rect x="171.1" y="167.0" width="37.3" height="3.0" fill="#958360"/>
<rect x="208.4" y="167.0" width="38.5" height="3.0" fill="#a28e69"/>
<rect x="246.9" y="167.0" width="37.8" height="3.0" fill="#968461"/>
<rect x="284.6" y="167.0" width="27.7" height="3.0" fill="#b59f76"/>
<rect x="312.3" y="167.0" width="11.1" height="3.0" fill="#968360"/>
<rect x="323.4" y="167.0" width="38.9" height="3.0" fill="#a08d68"/>
<rect x="362.3" y="167.0" width="29.5" height="3.0" fill="#ab9770"/>
<rect x="391.8" y="167.0" width="17.7" height="3.0" fill="#958360"/>
<rect x="409.5" y="167.0" width="18.0" height="3.0" fill="#b49e76"/>
<rect x="427.5" y="167.0" width="15.6" height="3.0" fill="#9c8965"/>
<rect x="443.0" y="167.0" width="37.4" height="3.0" fill="#a6926c"/>
<rect x="480.5" y="167.0" width="28.3" height="3.0" fill="#9e8b66"/>
<rect x="508.7" y="167.0" width="15.1" height="3.0" fill="#a7936d"/>
<rect x="523.8" y="167.0" width="34.4" height="3.0" fill="#9a8864"/>
<rect x="558.2" y="167.0" width="26.9" height="3.0" fill="#a7926c"/>
<rect x="585.1" y="167.0" width="28.5" height="3.0" fill="#9e8b67"/>
<rect x="613.5" y="167.0" width="31.8" height="3.0" fill="#9a8763"/>
<rect x="-8.0" y="169.7" width="43.8" height="2.7" fill="#594933"/>
<rect x="35.8" y="170.1" width="38.3" height="3.1" fill="#625139"/>
<rect x="74.1" y="169.4" width="32.8" height="2.8" fill="#50412d"/>
<rect x="106.9" y="170.5" width="33.7" height="3.2" fill="#5b4b35"/>
<rect x="140.6" y="170.3" width="34.4" height="2.6" fill="#54442f"/>
<rect x="175.0" y="169.5" width="39.5" height="2.7" fill="#5a4a34"/>
<rect x="214.5" y="170.1" width="22.1" height="2.2" fill="#5c4c35"/>
<rect x="236.6" y="170.4" width="26.1" height="3.3" fill="#68563d"/>
<rect x="262.7" y="169.8" width="24.8" height="3.3" fill="#544530"/>
<rect x="287.5" y="169.6" width="23.2" height="3.3" fill="#564631"/>
<rect x="310.8" y="170.5" width="42.0" height="2.3" fill="#5e4d36"/>
<rect x="352.7" y="169.6" width="33.6" height="2.7" fill="#68573e"/>
<rect x="386.4" y="169.7" width="22.3" height="2.9" fill="#4f402c"/>
<rect x="408.7" y="169.5" width="32.7" height="3.1" fill="#4e3f2b"/>
<rect x="441.5" y="170.1" width="33.6" height="2.4" fill="#554631"/>
<rect x="475.0" y="169.7" width="17.4" height="3.2" fill="#67563d"/>
<rect x="492.4" y="170.5" width="43.8" height="2.9" fill="#53442f"/>
<rect x="536.2" y="169.8" width="40.2" height="2.7" fill="#564631"/>
<rect x="576.4" y="170.2" width="44.2" height="2.4" fill="#66553c"/>
<rect x="-8.0" y="173.3" width="30.8" height="3.3" fill="#b39d75"/>
<rect x="22.8" y="173.3" width="27.9" height="3.3" fill="#ae9972"/>
<rect x="50.6" y="173.3" width="18.5" height="3.3" fill="#b29d75"/>
<rect x="69.2" y="173.3" width="20.1" height="3.3" fill="#b19c73"/>
<rect x="89.3" y="173.3" width="29.6" height="3.3" fill="#b09b73"/>
<rect x="118.9" y="173.3" width="38.1" height="3.3" fill="#a6926c"/>
<rect x="157.0" y="173.3" width="18.3" height="3.3" fill="#9b8864"/>
<rect x="175.3" y="173.3" width="29.2" height="3.3" fill="#b29c74"/>
<rect x="204.4" y="173.3" width="17.1" height="3.3" fill="#9f8c67"/>
<rect x="221.5" y="173.3" width="30.7" height="3.3" fill="#a7936c"/>
<rect x="252.3" y="173.3" width="11.8" height="3.3" fill="#aa956f"/>
<rect x="264.1" y="173.3" width="12.4" height="3.3" fill="#ac9770"/>
<rect x="276.5" y="173.3" width="10.6" height="3.3" fill="#a4906a"/>
<rect x="287.1" y="173.3" width="26.6" height="3.3" fill="#9b8864"/>
<rect x="313.7" y="173.3" width="21.4" height="3.3" fill="#9a8763"/>
<rect x="335.0" y="173.3" width="36.4" height="3.3" fill="#b7a178"/>
<rect x="371.4" y="173.3" width="38.8" height="3.3" fill="#b29d74"/>
<rect x="410.2" y="173.3" width="28.2" height="3.3" fill="#b49e76"/>
<rect x="438.4" y="173.3" width="39.9" height="3.3" fill="#9c8965"/>
<rect x="478.3" y="173.3" width="11.7" height="3.3" fill="#ab9770"/>
<rect x="490.0" y="173.3" width="22.2" height="3.3" fill="#a9956e"/>
<rect x="512.2" y="173.3" width="20.3" height="3.3" fill="#a5916b"/>
<rect x="532.5" y="173.3" width="24.7" height="3.3" fill="#948260"/>
<rect x="557.2" y="173.3" width="35.9" height="3.3" fill="#988562"/>
<rect x="593.1" y="173.3" width="16.2" height="3.3" fill="#af9a72"/>
<rect x="609.3" y="173.3" width="14.1" height="3.3" fill="#a5916b"/>
<rect x="-8.0" y="176.1" width="34.3" height="2.9" fill="#615039"/>
<rect x="26.3" y="176.3" width="46.2" height="3.2" fill="#5d4d36"/>
<rect x="72.5" y="177.0" width="47.3" height="2.6" fill="#69573e"/>
<rect x="119.8" y="176.8" width="42.6" height="2.6" fill="#63523a"/>
<rect x="162.4" y="177.0" width="33.8" height="2.4" fill="#63523a"/>
<rect x="196.2" y="176.5" width="29.5" height="2.6" fill="#66553c"/>
<rect x="225.8" y="176.9" width="47.5" height="3.5" fill="#5b4b35"/>
<rect x="273.2" y="176.1" width="19.2" height="2.8" fill="#5d4d36"/>
<rect x="292.5" y="177.1" width="47.3" height="3.3" fill="#4b3c29"/>
<rect x="339.8" y="176.3" width="18.8" height="3.2" fill="#4c3d2a"/>
<rect x="358.5" y="176.4" width="20.3" height="2.8" fill="#65543c"/>
<rect x="378.9" y="176.4" width="39.3" height="3.5" fill="#63523a"/>
<rect x="418.1" y="176.7" width="48.4" height="3.4" fill="#4c3d2a"/>
<rect x="466.5" y="176.9" width="39.4" height="3.0" fill="#65543b"/>
<rect x="505.9" y="176.7" width="33.7" height="3.0" fill="#594933"/>
<rect x="539.6" y="177.0" width="22.0" height="2.3" fill="#67563d"/>
<rect x="561.6" y="176.8" width="15.2" height="3.0" fill="#5f4f38"/>
<rect x="576.8" y="176.3" width="43.8" height="2.9" fill="#5b4b35"/>
<rect x="-8.0" y="180.0" width="38.5" height="3.4" fill="#9a8764"/>
<rect x="30.5" y="180.0" width="18.5" height="3.4" fill="#958360"/>
<rect x="49.0" y="180.0" width="19.8" height="3.4" fill="#b49f76"/>
<rect x="68.8" y="180.0" width="12.8" height="3.4" fill="#9b8864"/>
<rect x="81.6" y="180.0" width="19.5" height="3.4" fill="#ab976f"/>
<rect x="101.1" y="180.0" width="17.3" height="3.4" fill="#ab9770"/>
<rect x="118.4" y="180.0" width="15.9" height="3.4" fill="#9b8864"/>
<rect x="134.4" y="180.0" width="34.3" height="3.4" fill="#b39e75"/>
<rect x="168.6" y="180.0" width="38.5" height="3.4" fill="#988662"/>
<rect x="207.2" y="180.0" width="19.6" height="3.4" fill="#998663"/>
<rect x="226.7" y="180.0" width="15.9" height="3.4" fill="#b19c73"/>
<rect x="242.6" y="180.0" width="22.2" height="3.4" fill="#9f8b67"/>
<rect x="264.9" y="180.0" width="35.9" height="3.4" fill="#a38f6a"/>
<rect x="300.8" y="180.0" width="38.2" height="3.4" fill="#9d8a65"/>
<rect x="338.9" y="180.0" width="21.1" height="3.4" fill="#a7936d"/>
<rect x="360.1" y="180.0" width="30.6" height="3.4" fill="#b29d75"/>
<rect x="390.7" y="180.0" width="33.3" height="3.4" fill="#998663"/>
<rect x="424.0" y="180.0" width="20.9" height="3.4" fill="#af9a72"/>
<rect x="444.8" y="180.0" width="38.6" height="3.4" fill="#a18d68"/>
<rect x="483.4" y="180.0" width="31.5" height="3.4" fill="#9c8965"/>
<rect x="514.9" y="180.0" width="38.3" height="3.4" fill="#a18d68"/>
<rect x="553.2" y="180.0" width="38.1" height="3.4" fill="#a7936c"/>
<rect x="591.4" y="180.0" width="36.5" height="3.4" fill="#9a8764"/>
<rect x="-8.0" y="183.2" width="31.1" height="2.4" fill="#574732"/>
<rect x="23.1" y="183.1" width="45.1" height="3.3" fill="#5e4d37"/>
<rect x="68.1" y="183.6" width="15.5" height="2.7" fill="#544430"/>
<rect x="83.6" y="183.1" width="30.1" height="2.3" fill="#63523a"/>
<rect x="113.7" y="183.3" width="35.5" height="2.5" fill="#51422d"/>
<rect x="149.2" y="183.1" width="47.0" height="2.4" fill="#52422e"/>
<rect x="196.2" y="183.7" width="47.4" height="3.1" fill="#66553c"/>
<rect x="243.7" y="182.9" width="18.3" height="2.8" fill="#615139"/>
<rect x="261.9" y="183.5" width="30.7" height="3.3" fill="#68563e"/>
<rect x="292.6" y="183.0" width="40.0" height="2.5" fill="#50412d"/>
<rect x="332.7" y="183.5" width="23.2" height="3.0" fill="#5e4d37"/>
<rect x="355.8" y="183.7" width="23.0" height="3.2" fill="#605038"/>
<rect x="378.9" y="182.8" width="49.3" height="2.9" fill="#63523a"/>
<rect x="428.1" y="183.6" width="15.5" height="3.2" fill="#62513a"/>
<rect x="443.6" y="183.3" width="33.8" height="2.7" fill="#5c4b35"/>
<rect x="477.4" y="182.8" width="25.6" height="3.2" fill="#4a3b28"/>
<rect x="503.0" y="183.2" width="40.8" height="3.1" fill="#584832"/>
<rect x="543.8" y="183.2" width="26.6" height="2.6" fill="#64533b"/>
<rect x="570.5" y="183.6" width="34.4" height="3.5" fill="#54442f"/>
<rect x="604.8" y="182.9" width="34.6" height="3.2" fill="#5b4b35"/>
<rect x="-8.0" y="186.7" width="36.1" height="3.4" fill="#968461"/>
<rect x="28.1" y="186.7" width="24.7" height="3.4" fill="#b19b73"/>
<rect x="52.8" y="186.7" width="27.0" height="3.4" fill="#b39d75"/>
<rect x="79.8" y="186.7" width="27.0" height="3.4" fill="#9b8864"/>
<rect x="106.9" y="186.7" width="38.3" height="3.4" fill="#b19b73"/>
<rect x="145.1" y="186.7" width="34.7" height="3.4" fill="#b6a177"/>
<rect x="179.9" y="186.7" width="27.6" height="3.4" fill="#b39e75"/>
<rect x="207.5" y="186.7" width="39.3" height="3.4" fill="#9e8b66"/>
<rect x="246.8" y="186.7" width="29.8" height="3.4" fill="#b7a178"/>
<rect x="276.7" y="186.7" width="32.8" height="3.4" fill="#9c8965"/>
<rect x="309.5" y="186.7" width="23.7" height="3.4" fill="#9c8965"/>
<rect x="333.1" y="186.7" width="19.6" height="3.4" fill="#a7936d"/>
<rect x="352.7" y="186.7" width="23.5" height="3.4" fill="#af9a72"/>
<rect x="376.2" y="186.7" width="28.5" height="3.4" fill="#b19c74"/>
<rect x="404.7" y="186.7" width="26.6" height="3.4" fill="#9a8764"/>
<rect x="431.3" y="186.7" width="16.2" height="3.4" fill="#968361"/>
<rect x="447.4" y="186.7" width="12.3" height="3.4" fill="#a18d68"/>
<rect x="459.7" y="186.7" width="14.2" height="3.4" fill="#ac9770"/>
<rect x="473.9" y="186.7" width="35.1" height="3.4" fill="#a28f69"/>
<rect x="509.1" y="186.7" width="31.6" height="3.4" fill="#b6a077"/>
<rect x="540.7" y="186.7" width="37.7" height="3.4" fill="#ac9770"/>
<rect x="578.4" y="186.7" width="17.9" height="3.4" fill="#b39e75"/>
<rect x="596.3" y="186.7" width="31.2" height="3.4" fill="#b09b73"/>
<rect x="-8.0" y="189.7" width="19.8" height="2.3" fill="#67553d"/>
<rect x="11.8" y="190.5" width="21.3" height="2.5" fill="#5b4b35"/>
<rect x="33.2" y="189.6" width="16.5" height="2.6" fill="#605038"/>
<rect x="49.7" y="190.7" width="30.4" height="2.7" fill="#594933"/>
<rect x="80.0" y="190.5" width="27.4" height="2.2" fill="#63523a"/>
<rect x="107.5" y="189.9" width="46.1" height="2.8" fill="#51422d"/>
<rect x="153.6" y="190.0" width="30.6" height="2.8" fill="#615139"/>
<rect x="184.2" y="190.0" width="21.0" height="2.5" fill="#62513a"/>
<rect x="205.2" y="189.7" width="25.8" height="2.9" fill="#5b4a34"/>
<rect x="231.0" y="190.0" width="49.4" height="2.2" fill="#564731"/>
<rect x="280.5" y="190.3" width="29.9" height="2.9" fill="#5d4d36"/>
<rect x="310.4" y="190.1" width="27.7" height="2.1" fill="#625139"/>
<rect x="338.1" y="189.6" width="32.5" height="2.7" fill="#64533b"/>
<rect x="370.6" y="189.5" width="45.1" height="2.3" fill="#4d3f2b"/>
<rect x="415.7" y="190.6" width="19.4" height="2.1" fill="#67553d"/>
<rect x="435.1" y="190.4" width="28.1" height="2.9" fill="#54442f"/>
<rect x="463.2" y="190.4" width="30.6" height="2.1" fill="#51422d"/>
<rect x="493.8" y="190.5" width="30.2" height="2.1" fill="#574732"/>
<rect x="524.0" y="190.4" width="40.2" height="2.2" fill="#4e3f2b"/>
<rect x="564.1" y="190.7" width="28.9" height="2.3" fill="#564631"/>
<rect x="593.0" y="190.5" width="29.9" height="2.3" fill="#4e3f2c"/>
<rect x="-8.0" y="193.1" width="37.0" height="2.9" fill="#b6a177"/>
<rect x="29.0" y="193.1" width="16.4" height="2.9" fill="#aa966f"/>
<rect x="45.4" y="193.1" width="13.9" height="2.9" fill="#a9956e"/>
<rect x="59.3" y="193.1" width="15.5" height="2.9" fill="#b59f76"/>
<rect x="74.8" y="193.1" width="13.3" height="2.9" fill="#aa956e"/>
<rect x="88.1" y="193.1" width="18.7" height="2.9" fill="#958360"/>
<rect x="106.7" y="193.1" width="10.3" height="2.9" fill="#b19c74"/>
<rect x="117.0" y="193.1" width="33.9" height="2.9" fill="#968461"/>
<rect x="150.9" y="193.1" width="23.7" height="2.9" fill="#978461"/>
<rect x="174.6" y="193.1" width="14.3" height="2.9" fill="#b7a177"/>
<rect x="188.9" y="193.1" width="38.8" height="2.9" fill="#a4906b"/>
<rect x="227.6" y="193.1" width="17.8" height="2.9" fill="#9c8965"/>
<rect x="245.4" y="193.1" width="33.2" height="2.9" fill="#a6926c"/>
<rect x="278.6" y="193.1" width="16.5" height="2.9" fill="#a6926c"/>
<rect x="295.1" y="193.1" width="24.6" height="2.9" fill="#af9a72"/>
<rect x="319.6" y="193.1" width="33.1" height="2.9" fill="#b5a077"/>
<rect x="352.7" y="193.1" width="28.6" height="2.9" fill="#b7a178"/>
<rect x="381.3" y="193.1" width="16.0" height="2.9" fill="#9a8763"/>
<rect x="397.3" y="193.1" width="18.2" height="2.9" fill="#a6926c"/>
<rect x="415.5" y="193.1" width="27.7" height="2.9" fill="#a28e69"/>
<rect x="443.2" y="193.1" width="21.5" height="2.9" fill="#b19c73"/>
<rect x="464.7" y="193.1" width="31.0" height="2.9" fill="#a08c67"/>
<rect x="495.7" y="193.1" width="10.2" height="2.9" fill="#9a8763"/>
<rect x="505.9" y="193.1" width="26.3" height="2.9" fill="#b6a077"/>
<rect x="532.2" y="193.1" width="12.6" height="2.9" fill="#9e8a66"/>
<rect x="544.8" y="193.1" width="30.0" height="2.9" fill="#9b8864"/>
<rect x="574.9" y="193.1" width="37.0" height="2.9" fill="#af9a72"/>
<rect x="611.9" y="193.1" width="19.5" height="2.9" fill="#a28e69"/>
<rect x="-8.0" y="195.8" width="21.9" height="2.6" fill="#53432f"/>
<rect x="13.9" y="195.4" width="35.0" height="2.2" fill="#625139"/>
<rect x="48.9" y="195.9" width="14.5" height="2.3" fill="#4f402c"/>
<rect x="63.4" y="195.9" width="19.4" height="1.9" fill="#544430"/>
<rect x="82.8" y="195.8" width="45.3" height="2.4" fill="#544530"/>
<rect x="128.1" y="196.4" width="24.6" height="2.3" fill="#66553c"/>
<rect x="152.7" y="195.6" width="16.6" height="2.8" fill="#69573e"/>
<rect x="169.3" y="195.9" width="25.0" height="1.9" fill="#53442f"/>
<rect x="194.3" y="195.9" width="46.8" height="2.3" fill="#564631"/>
<rect x="241.2" y="196.6" width="43.6" height="2.3" fill="#62513a"/>
<rect x="284.8" y="195.7" width="18.6" height="2.0" fill="#4e3f2b"/>
<rect x="303.3" y="196.3" width="44.5" height="2.1" fill="#67563d"/>
<rect x="347.9" y="196.1" width="30.6" height="2.2" fill="#69583f"/>
<rect x="378.5" y="196.2" width="26.4" height="2.3" fill="#66553c"/>
<rect x="404.8" y="195.6" width="41.9" height="2.1" fill="#66553c"/>
<rect x="446.7" y="195.6" width="18.4" height="2.6" fill="#66553c"/>
<rect x="465.1" y="195.9" width="19.8" height="2.9" fill="#53442f"/>
<rect x="484.9" y="196.2" width="14.4" height="2.2" fill="#4d3e2b"/>
<rect x="499.3" y="195.7" width="18.1" height="2.6" fill="#5c4c36"/>
<rect x="517.5" y="195.7" width="15.6" height="2.3" fill="#605038"/>
<rect x="533.0" y="196.4" width="16.6" height="2.2" fill="#5a4a34"/>
<rect x="549.6" y="196.0" width="28.4" height="2.1" fill="#4e3f2b"/>
<rect x="578.0" y="196.3" width="25.9" height="1.9" fill="#5e4e37"/>
<rect x="603.9" y="196.3" width="14.2" height="2.1" fill="#53442f"/>
<rect x="-8.0" y="198.8" width="20.5" height="2.8" fill="#af9a72"/>
<rect x="12.5" y="198.8" width="15.0" height="2.8" fill="#a9956e"/>
<rect x="27.6" y="198.8" width="11.1" height="2.8" fill="#968461"/>
<rect x="38.6" y="198.8" width="16.8" height="2.8" fill="#b6a077"/>
<rect x="55.4" y="198.8" width="38.9" height="2.8" fill="#ab976f"/>
<rect x="94.3" y="198.8" width="38.5" height="2.8" fill="#a8946e"/>
<rect x="132.8" y="198.8" width="11.0" height="2.8" fill="#978461"/>
<rect x="143.7" y="198.8" width="17.1" height="2.8" fill="#a18e69"/>
<rect x="160.9" y="198.8" width="20.8" height="2.8" fill="#968461"/>
<rect x="181.7" y="198.8" width="31.2" height="2.8" fill="#b29c74"/>
<rect x="212.9" y="198.8" width="24.3" height="2.8" fill="#ab966f"/>
<rect x="237.2" y="198.8" width="12.3" height="2.8" fill="#a4906b"/>
<rect x="249.5" y="198.8" width="33.6" height="2.8" fill="#a18d68"/>
<rect x="283.0" y="198.8" width="18.5" height="2.8" fill="#ac9770"/>
<rect x="301.5" y="198.8" width="34.2" height="2.8" fill="#a28e69"/>
<rect x="335.7" y="198.8" width="25.1" height="2.8" fill="#988562"/>
<rect x="360.8" y="198.8" width="33.7" height="2.8" fill="#9d8a66"/>
<rect x="394.5" y="198.8" width="15.5" height="2.8" fill="#9b8864"/>
<rect x="410.0" y="198.8" width="22.5" height="2.8" fill="#b19c74"/>
<rect x="432.6" y="198.8" width="21.4" height="2.8" fill="#998663"/>
<rect x="454.0" y="198.8" width="23.8" height="2.8" fill="#9a8764"/>
<rect x="477.8" y="198.8" width="26.7" height="2.8" fill="#b6a077"/>
<rect x="504.5" y="198.8" width="16.6" height="2.8" fill="#b5a076"/>
<rect x="521.1" y="198.8" width="34.4" height="2.8" fill="#958260"/>
<rect x="555.5" y="198.8" width="13.0" height="2.8" fill="#a8946e"/>
<rect x="568.5" y="198.8" width="25.3" height="2.8" fill="#9e8a66"/>
<rect x="593.9" y="198.8" width="13.6" height="2.8" fill="#a8946d"/>
<rect x="607.5" y="198.8" width="37.9" height="2.8" fill="#a8946e"/>
<rect x="-8.0" y="201.1" width="27.3" height="2.2" fill="#584933"/>
<rect x="19.3" y="202.0" width="40.8" height="2.0" fill="#51422e"/>
<rect x="60.1" y="201.3" width="24.3" height="3.0" fill="#584832"/>
<rect x="84.4" y="201.3" width="15.4" height="2.3" fill="#4e3f2c"/>
<rect x="99.8" y="201.3" width="48.7" height="2.9" fill="#4b3c29"/>
<rect x="148.5" y="201.2" width="14.2" height="3.0" fill="#4c3d2a"/>
<rect x="162.7" y="201.0" width="31.3" height="2.6" fill="#5e4e37"/>
<rect x="194.0" y="201.9" width="19.7" height="2.9" fill="#604f38"/>
<rect x="213.7" y="201.2" width="25.7" height="3.1" fill="#50412d"/>
<rect x="239.4" y="201.4" width="42.3" height="2.1" fill="#5b4b34"/>
<rect x="281.7" y="201.5" width="27.7" height="2.5" fill="#554530"/>
<rect x="309.4" y="202.0" width="18.6" height="3.0" fill="#5c4c36"/>
<rect x="328.0" y="201.5" width="24.9" height="2.2" fill="#4a3c29"/>
<rect x="352.9" y="202.1" width="29.8" height="2.1" fill="#5b4b34"/>
<rect x="382.6" y="202.0" width="45.4" height="2.3" fill="#52432e"/>
<rect x="428.0" y="201.5" width="41.9" height="2.7" fill="#5c4c35"/>
<rect x="469.9" y="201.2" width="39.4" height="3.0" fill="#5c4c35"/>
<rect x="509.4" y="201.0" width="17.5" height="2.3" fill="#66543c"/>
<rect x="526.8" y="201.4" width="45.3" height="2.1" fill="#53442f"/>
<rect x="572.1" y="201.2" width="39.4" height="3.1" fill="#4d3f2b"/>
<rect x="611.6" y="201.0" width="21.8" height="2.4" fill="#5d4d36"/>
<rect x="-8.0" y="204.5" width="34.4" height="3.0" fill="#968361"/>
<rect x="26.4" y="204.5" width="37.5" height="3.0" fill="#b49e76"/>
<rect x="63.9" y="204.5" width="26.6" height="3.0" fill="#9e8b66"/>
<rect x="90.5" y="204.5" width="19.7" height="3.0" fill="#9d8a65"/>
<rect x="110.2" y="204.5" width="23.3" height="3.0" fill="#af9a72"/>
<rect x="133.5" y="204.5" width="23.6" height="3.0" fill="#a08d68"/>
<rect x="157.1" y="204.5" width="16.6" height="3.0" fill="#b19c73"/>
<rect x="173.7" y="204.5" width="33.0" height="3.0" fill="#ae9972"/>
<rect x="206.7" y="204.5" width="28.4" height="3.0" fill="#a4906a"/>
<rect x="235.1" y="204.5" width="37.3" height="3.0" fill="#a6926c"/>
<rect x="272.4" y="204.5" width="15.6" height="3.0" fill="#9d8a66"/>
<rect x="288.0" y="204.5" width="17.4" height="3.0" fill="#a7926c"/>
<rect x="305.4" y="204.5" width="29.5" height="3.0" fill="#9d8a65"/>
<rect x="334.9" y="204.5" width="29.9" height="3.0" fill="#b29c74"/>
<rect x="364.8" y="204.5" width="39.4" height="3.0" fill="#b29d74"/>
<rect x="404.2" y="204.5" width="10.1" height="3.0" fill="#a7936d"/>
<rect x="414.3" y="204.5" width="34.6" height="3.0" fill="#968461"/>
<rect x="448.9" y="204.5" width="36.0" height="3.0" fill="#a7936d"/>
<rect x="484.9" y="204.5" width="39.4" height="3.0" fill="#b09b73"/>
<rect x="524.3" y="204.5" width="36.0" height="3.0" fill="#ac9770"/>
<rect x="560.3" y="204.5" width="33.4" height="3.0" fill="#998663"/>
<rect x="593.7" y="204.5" width="34.4" height="3.0" fill="#b49f76"/>
<rect x="-8.0" y="207.5" width="19.5" height="2.9" fill="#554630"/>
<rect x="11.5" y="207.7" width="36.8" height="2.1" fill="#5e4d36"/>
<rect x="48.3" y="208.0" width="16.4" height="2.4" fill="#5f4e37"/>
<rect x="64.6" y="207.3" width="48.2" height="2.6" fill="#52432e"/>
<rect x="112.8" y="207.0" width="49.3" height="2.9" fill="#574732"/>
<rect x="162.2" y="208.0" width="27.7" height="2.4" fill="#5b4b35"/>
<rect x="189.8" y="207.9" width="31.1" height="3.1" fill="#67553d"/>
<rect x="220.9" y="207.3" width="23.0" height="3.0" fill="#67563d"/>
<rect x="243.9" y="207.5" width="29.2" height="2.4" fill="#53442f"/>
<rect x="273.1" y="207.9" width="37.1" height="2.3" fill="#50412d"/>
<rect x="310.2" y="207.2" width="35.5" height="3.0" fill="#574732"/>
<rect x="345.7" y="207.1" width="38.2" height="2.8" fill="#4b3d29"/>
<rect x="384.0" y="207.9" width="48.6" height="3.0" fill="#574731"/>
<rect x="432.6" y="207.6" width="28.5" height="2.1" fill="#64533b"/>
<rect x="461.1" y="207.5" width="49.9" height="2.9" fill="#584833"/>
<rect x="511.1" y="207.1" width="28.5" height="2.7" fill="#615039"/>
<rect x="539.6" y="207.5" width="35.5" height="2.2" fill="#4a3c29"/>
<rect x="575.1" y="207.4" width="18.1" height="2.2" fill="#5a4a34"/>
<rect x="593.2" y="207.5" width="16.3" height="2.5" fill="#5e4d37"/>
<rect x="609.5" y="207.7" width="15.4" height="3.0" fill="#4c3e2a"/>
<rect x="-8.0" y="210.5" width="19.0" height="3.1" fill="#a08d68"/>
<rect x="11.0" y="210.5" width="31.8" height="3.1" fill="#9d8a66"/>
<rect x="42.9" y="210.5" width="27.7" height="3.1" fill="#a7936c"/>
<rect x="70.5" y="210.5" width="34.8" height="3.1" fill="#a9956e"/>
<rect x="105.3" y="210.5" width="18.4" height="3.1" fill="#b59f76"/>
<rect x="123.7" y="210.5" width="36.1" height="3.1" fill="#9f8b67"/>
<rect x="159.8" y="210.5" width="26.9" height="3.1" fill="#af9a72"/>
<rect x="186.7" y="210.5" width="21.2" height="3.1" fill="#a9946e"/>
<rect x="207.9" y="210.5" width="14.0" height="3.1" fill="#b19c74"/>
<rect x="221.9" y="210.5" width="21.9" height="3.1" fill="#b59f76"/>
<rect x="243.8" y="210.5" width="18.6" height="3.1" fill="#9c8965"/>
<rect x="262.4" y="210.5" width="19.8" height="3.1" fill="#a18e69"/>
<rect x="282.2" y="210.5" width="20.0" height="3.1" fill="#ac9770"/>
<rect x="302.2" y="210.5" width="33.5" height="3.1" fill="#ac9770"/>
<rect x="335.7" y="210.5" width="36.7" height="3.1" fill="#9c8965"/>
<rect x="372.5" y="210.5" width="20.6" height="3.1" fill="#b6a177"/>
<rect x="393.1" y="210.5" width="37.6" height="3.1" fill="#b19c74"/>
<rect x="430.7" y="210.5" width="19.8" height="3.1" fill="#958360"/>
<rect x="450.5" y="210.5" width="31.0" height="3.1" fill="#ad9871"/>
<rect x="481.5" y="210.5" width="10.9" height="3.1" fill="#b09b73"/>
<rect x="492.4" y="210.5" width="18.1" height="3.1" fill="#a38f6a"/>
<rect x="510.5" y="210.5" width="10.7" height="3.1" fill="#968461"/>
<rect x="521.2" y="210.5" width="10.3" height="3.1" fill="#a8946d"/>
<rect x="531.5" y="210.5" width="21.7" height="3.1" fill="#a08c68"/>
<rect x="553.2" y="210.5" width="27.1" height="3.1" fill="#b39e75"/>
<rect x="580.3" y="210.5" width="15.8" height="3.1" fill="#a38f6a"/>
<rect x="596.1" y="210.5" width="16.5" height="3.1" fill="#aa966f"/>
<rect x="612.6" y="210.5" width="15.5" height="3.1" fill="#9f8c67"/>
<rect x="-8.0" y="213.8" width="20.8" height="2.3" fill="#4d3e2b"/>
<rect x="12.8" y="213.0" width="36.7" height="2.2" fill="#5b4b35"/>
<rect x="49.4" y="213.2" width="37.5" height="2.5" fill="#4a3c29"/>
<rect x="87.0" y="213.1" width="44.5" height="2.2" fill="#554631"/>
<rect x="131.4" y="213.9" width="25.7" height="2.2" fill="#53432f"/>
<rect x="157.2" y="213.2" width="16.5" height="2.6" fill="#4e3f2b"/>
<rect x="173.7" y="214.2" width="37.9" height="2.3" fill="#5a4a34"/>
<rect x="211.6" y="213.8" width="22.3" height="2.4" fill="#51422d"/>
<rect x="233.9" y="214.1" width="26.4" height="2.8" fill="#5e4e37"/>
<rect x="260.3" y="213.2" width="19.8" height="2.3" fill="#4d3e2b"/>
<rect x="280.1" y="213.7" width="42.7" height="3.0" fill="#54442f"/>
<rect x="322.8" y="213.8" width="44.1" height="2.6" fill="#564631"/>
<rect x="367.0" y="213.9" width="36.9" height="2.2" fill="#4b3c29"/>
<rect x="403.8" y="213.6" width="28.9" height="2.3" fill="#625139"/>
<rect x="432.8" y="213.8" width="46.8" height="2.9" fill="#63523a"/>
<rect x="479.6" y="213.5" width="42.6" height="2.3" fill="#594933"/>
<rect x="522.1" y="214.2" width="46.2" height="2.9" fill="#5a4a34"/>
<rect x="568.3" y="213.2" width="49.9" height="2.6" fill="#564631"/>
<rect x="-8.0" y="216.6" width="38.3" height="3.0" fill="#a28e69"/>
<rect x="30.3" y="216.6" width="23.7" height="3.0" fill="#9b8864"/>
<rect x="53.9" y="216.6" width="20.4" height="3.0" fill="#af9a72"/>
<rect x="74.4" y="216.6" width="36.2" height="3.0" fill="#988662"/>
<rect x="110.6" y="216.6" width="13.2" height="3.0" fill="#a28f69"/>
<rect x="123.7" y="216.6" width="10.9" height="3.0" fill="#988562"/>
<rect x="134.7" y="216.6" width="10.4" height="3.0" fill="#ae9972"/>
<rect x="145.1" y="216.6" width="28.3" height="3.0" fill="#b7a178"/>
<rect x="173.4" y="216.6" width="22.3" height="3.0" fill="#ae9972"/>
<rect x="195.7" y="216.6" width="13.9" height="3.0" fill="#958360"/>
<rect x="209.6" y="216.6" width="28.4" height="3.0" fill="#978461"/>
<rect x="238.0" y="216.6" width="19.8" height="3.0" fill="#ae9972"/>
<rect x="257.8" y="216.6" width="18.7" height="3.0" fill="#ab9770"/>
<rect x="276.5" y="216.6" width="39.6" height="3.0" fill="#ad9871"/>
<rect x="316.1" y="216.6" width="17.8" height="3.0" fill="#998663"/>
<rect x="333.9" y="216.6" width="14.3" height="3.0" fill="#a7936d"/>
<rect x="348.2" y="216.6" width="19.0" height="3.0" fill="#b49e75"/>
<rect x="367.2" y="216.6" width="29.4" height="3.0" fill="#a28f69"/>
<rect x="396.6" y="216.6" width="29.5" height="3.0" fill="#b5a076"/>
<rect x="426.2" y="216.6" width="22.9" height="3.0" fill="#a8946d"/>
<rect x="449.1" y="216.6" width="36.0" height="3.0" fill="#b39d75"/>
<rect x="485.1" y="216.6" width="23.4" height="3.0" fill="#9a8763"/>
<rect x="508.5" y="216.6" width="39.4" height="3.0" fill="#a4906b"/>
<rect x="547.9" y="216.6" width="37.5" height="3.0" fill="#b59f76"/>
<rect x="585.4" y="216.6" width="40.0" height="3.0" fill="#a6926c"/>
<rect x="-8.0" y="220.1" width="24.1" height="2.8" fill="#604f38"/>
<rect x="16.1" y="220.1" width="16.6" height="2.4" fill="#53442f"/>
<rect x="32.7" y="220.0" width="35.2" height="2.5" fill="#65543b"/>
<rect x="67.9" y="219.7" width="25.4" height="3.0" fill="#4d3e2b"/>
<rect x="93.3" y="219.8" width="24.1" height="2.9" fill="#5b4b35"/>
<rect x="117.3" y="219.2" width="35.7" height="2.5" fill="#5d4d36"/>
<rect x="153.1" y="219.9" width="28.9" height="2.2" fill="#67563d"/>
<rect x="182.0" y="219.4" width="48.7" height="2.8" fill="#5c4c35"/>
<rect x="230.7" y="219.5" width="30.6" height="2.9" fill="#4d3e2b"/>
<rect x="261.3" y="219.8" width="45.1" height="2.5" fill="#54442f"/>
<rect x="306.4" y="219.9" width="20.1" height="2.2" fill="#53442f"/>
<rect x="326.5" y="219.6" width="28.5" height="2.4" fill="#544530"/>
<rect x="355.0" y="219.4" width="19.0" height="2.9" fill="#5f4e37"/>
<rect x="374.0" y="219.2" width="29.7" height="2.6" fill="#68563d"/>
<rect x="403.8" y="219.9" width="25.0" height="2.5" fill="#584833"/>
<rect x="428.8" y="219.3" width="21.8" height="2.5" fill="#5c4c35"/>
<rect x="450.6" y="220.1" width="47.5" height="2.7" fill="#50412d"/>
<rect x="498.1" y="219.7" width="42.3" height="2.9" fill="#4a3b28"/>
<rect x="540.4" y="219.8" width="47.2" height="2.2" fill="#4b3c29"/>
<rect x="587.6" y="219.4" width="14.1" height="2.3" fill="#4f402c"/>
<rect x="601.7" y="219.4" width="30.7" height="2.5" fill="#4f402c"/>
<rect x="-8.0" y="222.7" width="35.2" height="3.1" fill="#ad9971"/>
<rect x="27.2" y="222.7" width="36.5" height="3.1" fill="#a4906a"/>
<rect x="63.7" y="222.7" width="20.8" height="3.1" fill="#968461"/>
<rect x="84.5" y="222.7" width="28.2" height="3.1" fill="#ab966f"/>
<rect x="112.7" y="222.7" width="27.1" height="3.1" fill="#b29d75"/>
<rect x="139.8" y="222.7" width="29.3" height="3.1" fill="#ac9870"/>
<rect x="169.2" y="222.7" width="21.9" height="3.1" fill="#988562"/>
<rect x="191.1" y="222.7" width="27.1" height="3.1" fill="#b49e75"/>
<rect x="218.1" y="222.7" width="18.8" height="3.1" fill="#b7a178"/>
<rect x="236.9" y="222.7" width="31.8" height="3.1" fill="#ab9770"/>
<rect x="268.7" y="222.7" width="20.8" height="3.1" fill="#b19b73"/>
<rect x="289.5" y="222.7" width="39.9" height="3.1" fill="#998663"/>
<rect x="329.4" y="222.7" width="11.5" height="3.1" fill="#9c8965"/>
<rect x="341.0" y="222.7" width="26.8" height="3.1" fill="#a28e69"/>
<rect x="367.7" y="222.7" width="32.4" height="3.1" fill="#b09b73"/>
<rect x="400.1" y="222.7" width="10.2" height="3.1" fill="#ae9971"/>
<rect x="410.3" y="222.7" width="29.1" height="3.1" fill="#9c8965"/>
<rect x="439.5" y="222.7" width="31.8" height="3.1" fill="#978461"/>
<rect x="471.3" y="222.7" width="19.6" height="3.1" fill="#a9946e"/>
<rect x="490.9" y="222.7" width="12.9" height="3.1" fill="#aa966f"/>
<rect x="503.8" y="222.7" width="20.1" height="3.1" fill="#ad9870"/>
<rect x="523.8" y="222.7" width="13.7" height="3.1" fill="#aa956e"/>
<rect x="537.5" y="222.7" width="13.4" height="3.1" fill="#a38f6a"/>
<rect x="550.9" y="222.7" width="15.0" height="3.1" fill="#a38f6a"/>
<rect x="565.9" y="222.7" width="33.6" height="3.1" fill="#9a8763"/>
<rect x="599.5" y="222.7" width="19.7" height="3.1" fill="#ad9871"/>
<rect x="-8.0" y="225.5" width="23.9" height="2.6" fill="#4a3b29"/>
<rect x="15.9" y="225.5" width="41.5" height="2.4" fill="#64533b"/>
<rect x="57.4" y="225.8" width="47.1" height="2.4" fill="#5c4c36"/>
<rect x="104.4" y="225.5" width="43.7" height="2.2" fill="#65543c"/>
<rect x="148.1" y="225.6" width="36.5" height="2.7" fill="#4f402c"/>
<rect x="184.6" y="226.2" width="43.8" height="2.8" fill="#4d3f2b"/>
<rect x="228.4" y="226.1" width="45.3" height="2.4" fill="#604f38"/>
<rect x="273.7" y="225.5" width="40.2" height="2.5" fill="#625139"/>
<rect x="313.9" y="225.6" width="16.4" height="2.8" fill="#594933"/>
<rect x="330.3" y="226.1" width="29.9" height="2.8" fill="#50412d"/>
<rect x="360.2" y="225.6" width="47.4" height="2.8" fill="#68563e"/>
<rect x="407.6" y="226.3" width="18.1" height="2.5" fill="#50412d"/>
<rect x="425.7" y="225.9" width="44.7" height="3.0" fill="#63523a"/>
<rect x="470.4" y="226.0" width="37.1" height="2.9" fill="#544430"/>
<rect x="507.6" y="226.4" width="46.7" height="2.1" fill="#66553c"/>
<rect x="554.3" y="225.7" width="29.0" height="2.3" fill="#51422d"/>
<rect x="583.3" y="225.9" width="22.5" height="2.5" fill="#625139"/>
<rect x="605.7" y="226.0" width="34.5" height="2.6" fill="#574732"/>
<rect x="-8.0" y="228.8" width="35.1" height="2.9" fill="#b7a278"/>
<rect x="27.1" y="228.8" width="29.5" height="2.9" fill="#9a8864"/>
<rect x="56.6" y="228.8" width="23.1" height="2.9" fill="#a28e69"/>
<rect x="79.7" y="228.8" width="38.8" height="2.9" fill="#9f8c67"/>
<rect x="118.5" y="228.8" width="20.7" height="2.9" fill="#9b8864"/>
<rect x="139.1" y="228.8" width="28.8" height="2.9" fill="#b49e75"/>
<rect x="167.9" y="228.8" width="29.1" height="2.9" fill="#9a8763"/>
<rect x="197.0" y="228.8" width="31.9" height="2.9" fill="#b7a178"/>
<rect x="228.9" y="228.8" width="38.3" height="2.9" fill="#a9956e"/>
<rect x="267.3" y="228.8" width="18.7" height="2.9" fill="#9b8864"/>
<rect x="286.0" y="228.8" width="29.2" height="2.9" fill="#a6926c"/>
<rect x="315.2" y="228.8" width="28.5" height="2.9" fill="#ae9972"/>
<rect x="343.7" y="228.8" width="14.4" height="2.9" fill="#a38f69"/>
<rect x="358.0" y="228.8" width="28.8" height="2.9" fill="#b7a178"/>
<rect x="386.9" y="228.8" width="38.8" height="2.9" fill="#aa966f"/>
<rect x="425.6" y="228.8" width="25.5" height="2.9" fill="#a9956e"/>
<rect x="451.1" y="228.8" width="33.5" height="2.9" fill="#ab966f"/>
<rect x="484.6" y="228.8" width="33.5" height="2.9" fill="#a3906a"/>
<rect x="518.1" y="228.8" width="27.4" height="2.9" fill="#aa966f"/>
<rect x="545.5" y="228.8" width="26.8" height="2.9" fill="#a08d68"/>
<rect x="572.4" y="228.8" width="28.0" height="2.9" fill="#b6a077"/>
<rect x="600.3" y="228.8" width="34.5" height="2.9" fill="#9e8b66"/>
<rect x="-8.0" y="232.3" width="38.1" height="2.3" fill="#4a3b29"/>
<rect x="30.1" y="232.0" width="45.3" height="2.2" fill="#5f4e37"/>
<rect x="75.4" y="232.3" width="22.4" height="2.4" fill="#4f402c"/>
<rect x="97.8" y="231.8" width="33.4" height="2.3" fill="#4b3d2a"/>
<rect x="131.2" y="232.0" width="40.2" height="2.2" fill="#50412d"/>
<rect x="171.4" y="231.5" width="31.2" height="2.8" fill="#67553d"/>
<rect x="202.6" y="231.4" width="38.1" height="2.3" fill="#554530"/>
<rect x="240.7" y="231.9" width="41.3" height="2.2" fill="#564631"/>
<rect x="282.0" y="231.9" width="28.5" height="2.8" fill="#50412d"/>
<rect x="310.4" y="231.7" width="47.3" height="2.6" fill="#604f38"/>
<rect x="357.8" y="231.6" width="41.6" height="2.9" fill="#4c3e2a"/>
<rect x="399.4" y="231.5" width="19.6" height="2.5" fill="#50412d"/>
<rect x="419.0" y="232.0" width="22.4" height="2.7" fill="#4e3f2b"/>
<rect x="441.4" y="231.4" width="31.4" height="2.5" fill="#5e4e37"/>
<rect x="472.8" y="231.9" width="41.6" height="2.8" fill="#584832"/>
<rect x="514.4" y="231.8" width="25.7" height="2.9" fill="#67563d"/>
<rect x="540.1" y="231.2" width="46.1" height="2.5" fill="#4e3f2b"/>
<rect x="586.2" y="231.8" width="22.2" height="2.5" fill="#4b3d2a"/>
<rect x="608.3" y="232.3" width="15.9" height="2.1" fill="#69583f"/>
<rect x="-8.0" y="234.6" width="39.3" height="2.9" fill="#a5916b"/>
<rect x="31.3" y="234.6" width="25.4" height="2.9" fill="#998662"/>
<rect x="56.7" y="234.6" width="15.0" height="2.9" fill="#af9a72"/>
<rect x="71.8" y="234.6" width="31.6" height="2.9" fill="#9a8764"/>
<rect x="103.4" y="234.6" width="13.2" height="2.9" fill="#ae9972"/>
<rect x="116.6" y="234.6" width="21.7" height="2.9" fill="#b5a076"/>
<rect x="138.3" y="234.6" width="33.3" height="2.9" fill="#9c8965"/>
<rect x="171.5" y="234.6" width="25.4" height="2.9" fill="#94825f"/>
<rect x="196.9" y="234.6" width="17.7" height="2.9" fill="#a18e69"/>
<rect x="214.6" y="234.6" width="31.3" height="2.9" fill="#b59f76"/>
<rect x="245.9" y="234.6" width="35.4" height="2.9" fill="#a8946d"/>
<rect x="281.3" y="234.6" width="14.5" height="2.9" fill="#a08c67"/>
<rect x="295.8" y="234.6" width="20.2" height="2.9" fill="#ac9770"/>
<rect x="316.0" y="234.6" width="30.5" height="2.9" fill="#958260"/>
<rect x="346.5" y="234.6" width="20.9" height="2.9" fill="#a7936d"/>
<rect x="367.4" y="234.6" width="22.3" height="2.9" fill="#ae9972"/>
<rect x="389.7" y="234.6" width="39.0" height="2.9" fill="#9c8965"/>
<rect x="428.7" y="234.6" width="32.1" height="2.9" fill="#968360"/>
<rect x="460.8" y="234.6" width="20.0" height="2.9" fill="#af9a72"/>
<rect x="480.8" y="234.6" width="27.8" height="2.9" fill="#a6926c"/>
<rect x="508.6" y="234.6" width="28.5" height="2.9" fill="#aa966f"/>
<rect x="537.1" y="234.6" width="31.6" height="2.9" fill="#a9956e"/>
<rect x="568.7" y="234.6" width="21.8" height="2.9" fill="#9e8b66"/>
<rect x="590.5" y="234.6" width="35.9" height="2.9" fill="#b49e75"/>
<rect x="-8.0" y="237.9" width="30.7" height="2.7" fill="#63523a"/>
<rect x="22.7" y="236.9" width="35.3" height="2.4" fill="#4f402c"/>
<rect x="58.0" y="237.6" width="41.4" height="2.8" fill="#68573e"/>
<rect x="99.4" y="237.9" width="19.7" height="2.1" fill="#584832"/>
<rect x="119.1" y="237.9" width="35.1" height="2.5" fill="#52432e"/>
<rect x="154.2" y="237.6" width="36.4" height="3.0" fill="#63523a"/>
<rect x="190.7" y="237.4" width="15.5" height="2.6" fill="#4e3f2b"/>
<rect x="206.2" y="237.4" width="49.2" height="2.8" fill="#53442f"/>
<rect x="255.4" y="237.0" width="35.1" height="2.5" fill="#66553d"/>
<rect x="290.5" y="237.7" width="26.5" height="2.0" fill="#564731"/>
<rect x="317.0" y="237.0" width="22.4" height="2.7" fill="#4a3c29"/>
<rect x="339.4" y="237.3" width="41.0" height="2.1" fill="#615139"/>
<rect x="380.4" y="237.3" width="46.0" height="2.9" fill="#66553c"/>
<rect x="426.4" y="236.9" width="33.3" height="2.7" fill="#594933"/>
<rect x="459.7" y="237.0" width="37.0" height="2.0" fill="#5a4a34"/>
<rect x="496.7" y="237.4" width="35.5" height="2.4" fill="#69573e"/>
<rect x="532.2" y="236.9" width="22.0" height="2.9" fill="#5c4c35"/>
<rect x="554.2" y="237.5" width="25.3" height="2.1" fill="#5b4a34"/>
<rect x="579.5" y="237.9" width="30.4" height="2.7" fill="#54442f"/>
<rect x="610.0" y="237.6" width="36.0" height="2.3" fill="#67563d"/>
<rect x="-8.0" y="240.4" width="30.0" height="2.9" fill="#ae9972"/>
<rect x="22.0" y="240.4" width="11.3" height="2.9" fill="#9e8a66"/>
<rect x="33.4" y="240.4" width="35.4" height="2.9" fill="#a6926c"/>
<rect x="68.8" y="240.4" width="14.2" height="2.9" fill="#a4906b"/>
<rect x="83.0" y="240.4" width="39.1" height="2.9" fill="#ad9871"/>
<rect x="122.1" y="240.4" width="11.8" height="2.9" fill="#b5a076"/>
<rect x="133.9" y="240.4" width="39.8" height="2.9" fill="#9a8764"/>
<rect x="173.7" y="240.4" width="26.5" height="2.9" fill="#b29d74"/>
<rect x="200.2" y="240.4" width="27.5" height="2.9" fill="#b39e75"/>
<rect x="227.7" y="240.4" width="34.3" height="2.9" fill="#a28e69"/>
<rect x="262.0" y="240.4" width="16.0" height="2.9" fill="#9c8965"/>
<rect x="278.1" y="240.4" width="21.1" height="2.9" fill="#a5916b"/>
<rect x="299.1" y="240.4" width="25.2" height="2.9" fill="#a9946e"/>
<rect x="324.3" y="240.4" width="28.6" height="2.9" fill="#a08d68"/>
<rect x="352.9" y="240.4" width="18.5" height="2.9" fill="#af9a72"/>
<rect x="371.5" y="240.4" width="15.7" height="2.9" fill="#9b8864"/>
<rect x="387.2" y="240.4" width="38.2" height="2.9" fill="#b6a077"/>
<rect x="425.3" y="240.4" width="28.4" height="2.9" fill="#af9a72"/>
<rect x="453.8" y="240.4" width="22.5" height="2.9" fill="#a8946d"/>
<rect x="476.2" y="240.4" width="30.9" height="2.9" fill="#9c8965"/>
<rect x="507.1" y="240.4" width="34.9" height="2.9" fill="#9c8965"/>
<rect x="542.0" y="240.4" width="36.5" height="2.9" fill="#94825f"/>
<rect x="578.5" y="240.4" width="31.8" height="2.9" fill="#a8936d"/>
<rect x="610.3" y="240.4" width="39.9" height="2.9" fill="#9d8a65"/>
<rect x="-8.0" y="243.1" width="29.2" height="2.0" fill="#4d3e2b"/>
<rect x="21.2" y="243.1" width="32.6" height="2.8" fill="#5e4e37"/>
<rect x="53.8" y="243.6" width="20.0" height="2.2" fill="#4b3d29"/>
<rect x="73.9" y="243.7" width="44.0" height="2.8" fill="#5c4c35"/>
<rect x="117.9" y="243.4" width="41.5" height="2.3" fill="#4e3f2b"/>
<rect x="159.4" y="243.8" width="25.2" height="2.3" fill="#544530"/>
<rect x="184.6" y="243.9" width="39.7" height="2.2" fill="#4d3e2b"/>
<rect x="224.3" y="243.2" width="42.9" height="2.4" fill="#5a4a34"/>
<rect x="267.3" y="243.0" width="27.0" height="2.5" fill="#5e4e37"/>
<rect x="294.3" y="243.6" width="26.8" height="2.1" fill="#5e4e37"/>
<rect x="321.1" y="243.0" width="38.5" height="2.4" fill="#554530"/>
<rect x="359.6" y="243.9" width="26.6" height="2.4" fill="#594933"/>
<rect x="386.2" y="242.8" width="39.9" height="2.6" fill="#4f402c"/>
<rect x="426.2" y="242.8" width="22.0" height="2.2" fill="#4f402c"/>
<rect x="448.2" y="242.9" width="28.0" height="2.7" fill="#5a4a34"/>
<rect x="476.2" y="243.6" width="21.6" height="2.4" fill="#5f4f38"/>
<rect x="497.8" y="242.8" width="26.6" height="2.9" fill="#554630"/>
<rect x="524.4" y="243.2" width="15.6" height="2.0" fill="#544530"/>
<rect x="540.0" y="243.2" width="29.8" height="3.0" fill="#50412d"/>
<rect x="569.8" y="243.8" width="28.3" height="3.0" fill="#574832"/>
<rect x="598.1" y="243.5" width="28.0" height="2.5" fill="#4c3d2a"/>
<rect x="-8.0" y="246.2" width="14.0" height="2.9" fill="#a5916b"/>
<rect x="6.0" y="246.2" width="27.6" height="2.9" fill="#b09b73"/>
<rect x="33.6" y="246.2" width="35.9" height="2.9" fill="#b29d75"/>
<rect x="69.5" y="246.2" width="13.1" height="2.9" fill="#b39e75"/>
<rect x="82.7" y="246.2" width="14.0" height="2.9" fill="#a18e69"/>
<rect x="96.7" y="246.2" width="38.8" height="2.9" fill="#9d8a66"/>
<rect x="135.5" y="246.2" width="31.4" height="2.9" fill="#b7a178"/>
<rect x="166.9" y="246.2" width="10.4" height="2.9" fill="#9d8a65"/>
<rect x="177.3" y="246.2" width="22.1" height="2.9" fill="#ae9971"/>
<rect x="199.4" y="246.2" width="26.5" height="2.9" fill="#b19c74"/>
<rect x="225.9" y="246.2" width="27.9" height="2.9" fill="#af9a72"/>
<rect x="253.8" y="246.2" width="21.9" height="2.9" fill="#978461"/>
<rect x="275.7" y="246.2" width="37.4" height="2.9" fill="#988562"/>
<rect x="313.2" y="246.2" width="31.0" height="2.9" fill="#a8946d"/>
<rect x="344.2" y="246.2" width="23.7" height="2.9" fill="#9f8b67"/>
<rect x="367.9" y="246.2" width="26.3" height="2.9" fill="#b39e75"/>
<rect x="394.1" y="246.2" width="12.4" height="2.9" fill="#a9956e"/>
<rect x="406.5" y="246.2" width="38.2" height="2.9" fill="#ad9871"/>
<rect x="444.8" y="246.2" width="39.6" height="2.9" fill="#9a8763"/>
<rect x="484.4" y="246.2" width="21.5" height="2.9" fill="#968461"/>
<rect x="505.9" y="246.2" width="37.4" height="2.9" fill="#a18e69"/>
<rect x="543.3" y="246.2" width="36.6" height="2.9" fill="#b39e75"/>
<rect x="579.9" y="246.2" width="17.2" height="2.9" fill="#ad9871"/>
<rect x="597.2" y="246.2" width="22.3" height="2.9" fill="#aa966f"/>
<rect x="-8.0" y="249.7" width="47.7" height="2.7" fill="#5b4b35"/>
<rect x="39.7" y="248.5" width="43.9" height="2.6" fill="#50412d"/>
<rect x="83.6" y="248.6" width="39.2" height="2.8" fill="#564731"/>
<rect x="122.7" y="249.6" width="48.6" height="2.5" fill="#5c4b35"/>
<rect x="171.3" y="249.7" width="30.8" height="2.7" fill="#52432e"/>
<rect x="202.2" y="249.2" width="21.6" height="2.2" fill="#4c3d2a"/>
<rect x="223.8" y="249.0" width="24.6" height="2.5" fill="#594933"/>
<rect x="248.4" y="249.6" width="34.2" height="2.5" fill="#5b4b35"/>
<rect x="282.5" y="249.0" width="40.5" height="2.2" fill="#5c4c35"/>
<rect x="323.0" y="249.3" width="50.0" height="2.3" fill="#4f402c"/>
<rect x="373.0" y="248.6" width="34.2" height="2.7" fill="#51422e"/>
<rect x="407.2" y="249.2" width="29.3" height="2.7" fill="#5a4a34"/>
<rect x="436.4" y="248.7" width="27.3" height="2.1" fill="#66553c"/>
<rect x="463.7" y="249.5" width="44.2" height="2.0" fill="#5a4a34"/>
<rect x="507.9" y="249.3" width="36.4" height="2.3" fill="#63523a"/>
<rect x="544.3" y="248.9" width="18.7" height="2.5" fill="#5b4b34"/>
<rect x="563.0" y="248.9" width="42.8" height="2.1" fill="#584833"/>
<rect x="605.8" y="248.6" width="29.9" height="2.6" fill="#4c3d2a"/>
<rect x="-8.0" y="251.9" width="23.4" height="2.8" fill="#b7a178"/>
<rect x="15.4" y="251.9" width="39.7" height="2.8" fill="#a28e69"/>
<rect x="55.1" y="251.9" width="28.7" height="2.8" fill="#a38f6a"/>
<rect x="83.8" y="251.9" width="24.9" height="2.8" fill="#9a8763"/>
<rect x="108.7" y="251.9" width="14.0" height="2.8" fill="#a4906a"/>
<rect x="122.7" y="251.9" width="12.4" height="2.8" fill="#a7936c"/>
<rect x="135.1" y="251.9" width="29.8" height="2.8" fill="#94825f"/>
<rect x="165.0" y="251.9" width="23.4" height="2.8" fill="#9b8864"/>
<rect x="188.3" y="251.9" width="21.5" height="2.8" fill="#b49f76"/>
<rect x="209.9" y="251.9" width="16.0" height="2.8" fill="#af9a72"/>
<rect x="225.8" y="251.9" width="24.4" height="2.8" fill="#a6926c"/>
<rect x="250.3" y="251.9" width="11.2" height="2.8" fill="#988562"/>
<rect x="261.5" y="251.9" width="40.0" height="2.8" fill="#9c8965"/>
<rect x="301.4" y="251.9" width="32.5" height="2.8" fill="#aa966f"/>
<rect x="334.0" y="251.9" width="19.9" height="2.8" fill="#b19c74"/>
<rect x="353.8" y="251.9" width="32.3" height="2.8" fill="#b7a177"/>
<rect x="386.2" y="251.9" width="30.0" height="2.8" fill="#a6926c"/>
<rect x="416.2" y="251.9" width="19.0" height="2.8" fill="#a4906a"/>
<rect x="435.2" y="251.9" width="23.6" height="2.8" fill="#94825f"/>
<rect x="458.8" y="251.9" width="22.0" height="2.8" fill="#b6a077"/>
<rect x="480.8" y="251.9" width="17.2" height="2.8" fill="#9a8764"/>
<rect x="498.0" y="251.9" width="28.3" height="2.8" fill="#ab9770"/>
<rect x="526.3" y="251.9" width="15.2" height="2.8" fill="#b59f76"/>
<rect x="541.5" y="251.9" width="19.0" height="2.8" fill="#9f8b67"/>
<rect x="560.5" y="251.9" width="33.1" height="2.8" fill="#9e8b66"/>
<rect x="593.6" y="251.9" width="12.2" height="2.8" fill="#9c8965"/>
<rect x="605.8" y="251.9" width="17.9" height="2.8" fill="#b39d75"/>
<rect x="-8.0" y="254.8" width="31.9" height="3.1" fill="#4a3b29"/>
<rect x="23.9" y="254.3" width="41.0" height="2.4" fill="#52432f"/>
<rect x="64.9" y="254.7" width="30.5" height="2.7" fill="#65543b"/>
<rect x="95.4" y="254.7" width="35.9" height="3.2" fill="#604f38"/>
<rect x="131.3" y="254.6" width="46.8" height="2.4" fill="#5b4b35"/>
<rect x="178.1" y="254.2" width="30.2" height="3.0" fill="#615038"/>
<rect x="208.3" y="255.1" width="44.8" height="2.9" fill="#68563e"/>
<rect x="253.1" y="254.1" width="28.2" height="2.5" fill="#53442f"/>
<rect x="281.3" y="255.2" width="38.6" height="2.7" fill="#604f38"/>
<rect x="319.9" y="255.1" width="16.6" height="2.8" fill="#5f4e37"/>
<rect x="336.5" y="255.1" width="31.8" height="2.3" fill="#54442f"/>
<rect x="368.3" y="254.1" width="21.0" height="2.3" fill="#66553c"/>
<rect x="389.2" y="254.5" width="44.0" height="2.4" fill="#4e3f2c"/>
<rect x="433.3" y="254.4" width="40.1" height="3.0" fill="#5a4a34"/>
<rect x="473.4" y="254.5" width="33.0" height="2.4" fill="#53442f"/>
<rect x="506.4" y="254.9" width="32.8" height="3.3" fill="#5e4d36"/>
<rect x="539.2" y="254.2" width="41.6" height="2.4" fill="#5f4e37"/>
<rect x="580.9" y="254.2" width="39.6" height="3.2" fill="#5b4b35"/>
<rect x="-8.0" y="258.0" width="30.2" height="3.3" fill="#968360"/>
<rect x="22.2" y="258.0" width="28.8" height="3.3" fill="#988662"/>
<rect x="51.0" y="258.0" width="17.8" height="3.3" fill="#a8936d"/>
<rect x="68.9" y="258.0" width="12.9" height="3.3" fill="#a5916b"/>
<rect x="81.8" y="258.0" width="33.9" height="3.3" fill="#a38f6a"/>
<rect x="115.7" y="258.0" width="20.9" height="3.3" fill="#9e8a66"/>
<rect x="136.6" y="258.0" width="38.3" height="3.3" fill="#9d8a66"/>
<rect x="174.9" y="258.0" width="10.6" height="3.3" fill="#a08d68"/>
<rect x="185.5" y="258.0" width="19.2" height="3.3" fill="#b7a178"/>
<rect x="204.7" y="258.0" width="16.4" height="3.3" fill="#b29c74"/>
<rect x="221.1" y="258.0" width="10.6" height="3.3" fill="#a28e69"/>
<rect x="231.7" y="258.0" width="26.5" height="3.3" fill="#b29d74"/>
<rect x="258.2" y="258.0" width="12.2" height="3.3" fill="#a5916b"/>
<rect x="270.4" y="258.0" width="31.6" height="3.3" fill="#b29c74"/>
<rect x="302.0" y="258.0" width="39.6" height="3.3" fill="#998663"/>
<rect x="341.6" y="258.0" width="30.3" height="3.3" fill="#9c8965"/>
<rect x="371.9" y="258.0" width="15.6" height="3.3" fill="#b5a077"/>
<rect x="387.5" y="258.0" width="27.9" height="3.3" fill="#ad9871"/>
<rect x="415.4" y="258.0" width="18.2" height="3.3" fill="#b19c73"/>
<rect x="433.6" y="258.0" width="33.8" height="3.3" fill="#9a8763"/>
<rect x="467.4" y="258.0" width="29.2" height="3.3" fill="#988562"/>
<rect x="496.6" y="258.0" width="29.3" height="3.3" fill="#9e8b66"/>
<rect x="525.9" y="258.0" width="26.7" height="3.3" fill="#958360"/>
<rect x="552.6" y="258.0" width="37.7" height="3.3" fill="#a08d68"/>
<rect x="590.3" y="258.0" width="21.2" height="3.3" fill="#b39e75"/>
<rect x="611.5" y="258.0" width="37.6" height="3.3" fill="#a8946d"/>
<rect x="-8.0" y="261.5" width="15.1" height="2.1" fill="#584832"/>
<rect x="7.1" y="261.3" width="32.2" height="2.1" fill="#5b4b34"/>
<rect x="39.3" y="261.0" width="20.0" height="2.6" fill="#69573e"/>
<rect x="59.3" y="261.1" width="39.3" height="3.2" fill="#4a3c29"/>
<rect x="98.6" y="261.3" width="28.7" height="2.2" fill="#5c4b35"/>
<rect x="127.4" y="261.6" width="44.3" height="3.2" fill="#5f4e37"/>
<rect x="171.6" y="261.2" width="15.2" height="3.1" fill="#66553c"/>
<rect x="186.8" y="260.9" width="16.4" height="3.1" fill="#604f38"/>
<rect x="203.3" y="261.6" width="17.9" height="2.7" fill="#4b3c29"/>
<rect x="221.1" y="261.1" width="24.8" height="2.3" fill="#4a3c29"/>
<rect x="245.9" y="260.8" width="48.0" height="2.8" fill="#564631"/>
<rect x="293.9" y="261.1" width="36.1" height="2.3" fill="#67563d"/>
<rect x="330.0" y="261.0" width="36.0" height="3.1" fill="#68563d"/>
<rect x="366.0" y="260.8" width="24.3" height="2.2" fill="#554530"/>
<rect x="390.3" y="261.8" width="25.6" height="3.1" fill="#594933"/>
<rect x="415.9" y="261.4" width="18.1" height="2.6" fill="#615139"/>
<rect x="434.0" y="261.8" width="14.5" height="2.3" fill="#544530"/>
<rect x="448.5" y="261.7" width="43.3" height="2.1" fill="#63523a"/>
<rect x="491.8" y="261.1" width="32.7" height="2.4" fill="#584832"/>
<rect x="524.5" y="260.9" width="41.3" height="2.8" fill="#63523a"/>
<rect x="565.8" y="261.2" width="36.9" height="2.4" fill="#554530"/>
<rect x="602.6" y="261.7" width="43.6" height="2.5" fill="#5e4d36"/>
<rect x="-8.0" y="264.4" width="29.7" height="3.1" fill="#ae9971"/>
<rect x="21.7" y="264.4" width="19.3" height="3.1" fill="#a7926c"/>
<rect x="40.9" y="264.4" width="22.5" height="3.1" fill="#a8946d"/>
<rect x="63.4" y="264.4" width="32.9" height="3.1" fill="#9f8b67"/>
<rect x="96.3" y="264.4" width="18.7" height="3.1" fill="#9c8965"/>
<rect x="115.0" y="264.4" width="24.7" height="3.1" fill="#9b8864"/>
<rect x="139.7" y="264.4" width="12.7" height="3.1" fill="#b6a177"/>
<rect x="152.4" y="264.4" width="15.8" height="3.1" fill="#a7936d"/>
<rect x="168.1" y="264.4" width="13.8" height="3.1" fill="#a7936d"/>
<rect x="181.9" y="264.4" width="21.2" height="3.1" fill="#aa966f"/>
<rect x="203.1" y="264.4" width="36.0" height="3.1" fill="#a4916b"/>
<rect x="239.1" y="264.4" width="32.9" height="3.1" fill="#9b8864"/>
<rect x="272.0" y="264.4" width="25.9" height="3.1" fill="#a18e68"/>
<rect x="297.9" y="264.4" width="30.0" height="3.1" fill="#9a8764"/>
<rect x="327.9" y="264.4" width="12.5" height="3.1" fill="#b39e75"/>
<rect x="340.4" y="264.4" width="15.8" height="3.1" fill="#968461"/>
<rect x="356.2" y="264.4" width="10.4" height="3.1" fill="#ab976f"/>
<rect x="366.6" y="264.4" width="32.0" height="3.1" fill="#b5a077"/>
<rect x="398.6" y="264.4" width="32.3" height="3.1" fill="#b29c74"/>
<rect x="430.8" y="264.4" width="32.6" height="3.1" fill="#b6a077"/>
<rect x="463.4" y="264.4" width="38.3" height="3.1" fill="#958260"/>
<rect x="501.7" y="264.4" width="33.6" height="3.1" fill="#a38f69"/>
<rect x="535.3" y="264.4" width="27.8" height="3.1" fill="#b09b73"/>
<rect x="563.2" y="264.4" width="14.0" height="3.1" fill="#af9a72"/>
<rect x="577.2" y="264.4" width="11.0" height="3.1" fill="#9f8b67"/>
<rect x="588.2" y="264.4" width="20.6" height="3.1" fill="#a8936d"/>
<rect x="608.8" y="264.4" width="24.2" height="3.1" fill="#b7a178"/>
</g></g>
<g filter="url(#b1)">
<path d="M0.0 164.0 L14.0 164.0 L28.0 172.0 L38.0 182.0 L50.0 192.0 L62.0 206.0 L74.0 220.0 L80.0 237.0 L83.0 256.0 L0.0 256.0 Z" fill="#2e2218" opacity="0.7"/>
<path d="M608.0 180.0 L592.0 186.0 L570.0 204.0 L552.0 210.0 L542.0 221.0 L524.0 238.0 L520.0 256.0 L608.0 256.0 Z" fill="#2e2218" opacity="0.7"/>
<path d="M16.0 166.0 L52.0 167.0 L92.0 177.0 L94.0 240.0 L80.0 238.0 L55.0 198.0 L36.0 179.0 Z" fill="#a88c62" opacity="0.7"/>
</g>
<radialGradient id="vig" cx="0.5" cy="0.58" r="0.72"><stop offset="0.45" stop-color="#1e140a" stop-opacity="0"/><stop offset="0.85" stop-color="#1e140a" stop-opacity="0.32"/><stop offset="1" stop-color="#1e140a" stop-opacity="0.5"/></radialGradient>
<rect width="608" height="256" fill="url(#vig)"/>
</g>
<g filter="url(#b05)">
<linearGradient id="rg1" x1="0" y1="0" x2="1" y2="0"><stop offset="0" stop-color="#000" stop-opacity="0.25"/><stop offset="0.5" stop-color="#000" stop-opacity="0"/><stop offset="1" stop-color="#000" stop-opacity="0.3"/></linearGradient>
<path d="M262.0 45.0 L294.0 42.0 L298.0 70.0 L298.0 118.0 L288.0 124.0 L270.0 122.0 L263.0 110.0 L260.0 70.0 Z" fill="#94202e"/>
<path d="M270.0 60.0 L280.0 58.0 L285.0 116.0 L274.0 118.0 Z" fill="#741624" opacity="0.6"/>
<path d="M278.0 88.0 L298.0 88.0 L298.0 118.0 L282.0 118.0 Z" fill="#b02c3c" opacity="0.5"/>
<path d="M289.0 118.0 L294.0 118.0 L295.0 130.0 L289.0 130.0 Z" fill="#c8a880"/>
<path d="M262.0 45.0 L294.0 42.0 L298.0 70.0 L298.0 118.0 L288.0 124.0 L270.0 122.0 L263.0 110.0 L260.0 70.0 Z" fill="url(#rg1)"/>
<path d="M286.0 130.0 L298.0 130.0 L298.0 139.0 L286.0 139.0 Z" fill="#4a3626"/>
<path d="M265.0 120.0 L273.0 121.0 L272.0 131.0 L263.0 130.0 Z" fill="#5a4432"/>
<ellipse cx="287" cy="25.5" rx="36" ry="22.5" fill="#cc7894"/>
<ellipse cx="287" cy="25.5" rx="35" ry="21.5" fill="none" stroke="#9a4866" stroke-width="1.5" opacity="0.8"/>
<ellipse cx="289" cy="24" rx="27" ry="16" fill="none" stroke="#e2a4b8" stroke-width="4" opacity="0.5" stroke-dasharray="3 2"/>
<ellipse cx="291" cy="21" rx="12" ry="8" fill="none" stroke="#eab8c8" stroke-width="3" opacity="0.5"/>
<ellipse cx="291" cy="20" rx="6.5" ry="5" fill="#25202a"/>
<path d="M310.0 92.0 L345.0 94.0 L348.0 130.0 L345.0 155.0 L330.0 161.0 L314.0 158.0 L309.0 130.0 Z" fill="#a82636"/>
<path d="M320.0 110.0 L332.0 108.0 L336.0 155.0 L322.0 158.0 Z" fill="#861a2a" opacity="0.55"/>
<path d="M310.0 92.0 L345.0 94.0 L348.0 130.0 L345.0 155.0 L330.0 161.0 L314.0 158.0 L309.0 130.0 Z" fill="url(#rg1)"/>
<path d="M312.0 158.0 L330.0 160.0 L328.0 168.0 L310.0 166.0 Z" fill="#4e3a2a"/>
<ellipse cx="331" cy="63" rx="34" ry="31.5" fill="#d2445a"/>
<line x1="329" y1="62" x2="362.0" y2="62.0" stroke="#b02e48" stroke-width="0.9" opacity="0.6"/>
<line x1="329" y1="62" x2="361.3" y2="68.2" stroke="#b02e48" stroke-width="0.9" opacity="0.6"/>
<line x1="329" y1="62" x2="359.1" y2="74.2" stroke="#b02e48" stroke-width="0.9" opacity="0.6"/>
<line x1="329" y1="62" x2="355.7" y2="79.6" stroke="#b02e48" stroke-width="0.9" opacity="0.6"/>
<line x1="329" y1="62" x2="351.1" y2="84.3" stroke="#b02e48" stroke-width="0.9" opacity="0.6"/>
<line x1="329" y1="62" x2="345.5" y2="88.0" stroke="#b02e48" stroke-width="0.9" opacity="0.6"/>
<line x1="329" y1="62" x2="339.2" y2="90.5" stroke="#b02e48" stroke-width="0.9" opacity="0.6"/>
<line x1="329" y1="62" x2="332.4" y2="91.8" stroke="#b02e48" stroke-width="0.9" opacity="0.6"/>
<line x1="329" y1="62" x2="325.6" y2="91.8" stroke="#b02e48" stroke-width="0.9" opacity="0.6"/>
<line x1="329" y1="62" x2="318.8" y2="90.5" stroke="#b02e48" stroke-width="0.9" opacity="0.6"/>
<line x1="329" y1="62" x2="312.5" y2="88.0" stroke="#b02e48" stroke-width="0.9" opacity="0.6"/>
<line x1="329" y1="62" x2="306.9" y2="84.3" stroke="#b02e48" stroke-width="0.9" opacity="0.6"/>
<line x1="329" y1="62" x2="302.3" y2="79.6" stroke="#b02e48" stroke-width="0.9" opacity="0.6"/>
<line x1="329" y1="62" x2="298.9" y2="74.2" stroke="#b02e48" stroke-width="0.9" opacity="0.6"/>
<line x1="329" y1="62" x2="296.7" y2="68.2" stroke="#b02e48" stroke-width="0.9" opacity="0.6"/>
<line x1="329" y1="62" x2="296.0" y2="62.0" stroke="#b02e48" stroke-width="0.9" opacity="0.6"/>
<line x1="329" y1="62" x2="296.7" y2="55.8" stroke="#b02e48" stroke-width="0.9" opacity="0.6"/>
<line x1="329" y1="62" x2="298.9" y2="49.8" stroke="#b02e48" stroke-width="0.9" opacity="0.6"/>
<line x1="329" y1="62" x2="302.3" y2="44.4" stroke="#b02e48" stroke-width="0.9" opacity="0.6"/>
<line x1="329" y1="62" x2="306.9" y2="39.7" stroke="#b02e48" stroke-width="0.9" opacity="0.6"/>
<line x1="329" y1="62" x2="312.5" y2="36.0" stroke="#b02e48" stroke-width="0.9" opacity="0.6"/>
<line x1="329" y1="62" x2="318.8" y2="33.5" stroke="#b02e48" stroke-width="0.9" opacity="0.6"/>
<line x1="329" y1="62" x2="325.6" y2="32.2" stroke="#b02e48" stroke-width="0.9" opacity="0.6"/>
<line x1="329" y1="62" x2="332.4" y2="32.2" stroke="#b02e48" stroke-width="0.9" opacity="0.6"/>
<line x1="329" y1="62" x2="339.2" y2="33.5" stroke="#b02e48" stroke-width="0.9" opacity="0.6"/>
<line x1="329" y1="62" x2="345.5" y2="36.0" stroke="#b02e48" stroke-width="0.9" opacity="0.6"/>
<line x1="329" y1="62" x2="351.1" y2="39.7" stroke="#b02e48" stroke-width="0.9" opacity="0.6"/>
<line x1="329" y1="62" x2="355.7" y2="44.4" stroke="#b02e48" stroke-width="0.9" opacity="0.6"/>
<line x1="329" y1="62" x2="359.1" y2="49.8" stroke="#b02e48" stroke-width="0.9" opacity="0.6"/>
<line x1="329" y1="62" x2="361.3" y2="55.8" stroke="#b02e48" stroke-width="0.9" opacity="0.6"/>
<ellipse cx="331" cy="63" rx="33.5" ry="31" fill="none" stroke="#6e1c2a" stroke-width="1.8"/>
<circle cx="329" cy="62" r="3.5" fill="#2a1a1e"/>
<path d="M344.0 160.0 L374.0 158.0 L380.0 185.0 L376.0 215.0 L372.0 240.0 L362.0 246.0 L352.0 240.0 L346.0 210.0 L340.0 185.0 Z" fill="#581620"/>
<path d="M348.0 205.0 L374.0 202.0 L372.0 238.0 L354.0 240.0 Z" fill="#741e2c" opacity="0.6"/>
<path d="M344.0 160.0 L374.0 158.0 L380.0 185.0 L376.0 215.0 L372.0 240.0 L362.0 246.0 L352.0 240.0 L346.0 210.0 L340.0 185.0 Z" fill="url(#rg1)"/>
<path d="M356.0 238.0 L368.0 238.0 L370.0 250.0 L356.0 250.0 Z" fill="#d0b490"/>
<path d="M332.0 170.0 L346.0 168.0 L348.0 180.0 L334.0 182.0 Z" fill="#b88866" opacity="0.8"/>
<ellipse cx="366" cy="146" rx="33" ry="21.5" transform="rotate(38 366 146)" fill="#dc6476"/>
<ellipse cx="366" cy="146" rx="32.3" ry="20.8" transform="rotate(38 366 146)" fill="none" stroke="#a03646" stroke-width="1.4"/>
<circle cx="371" cy="141" r="3" fill="#2a1a1e"/>
</g>
</svg><!--/PHOTO--></div>
<div class="a" style="left:848px;top:606px;width:608px;height:85px;background:#f7f7f7"></div>

<div class="ln" id="para" style="left:234.03px;top:29.70px;font-size:22.49px;color:#333;transform:scaleX(0.9750)">Paragraph</div>
<div class="ln" id="h1" style="left:238.19px;top:144.31px;font-size:43.22px;color:#000;transform:scaleX(0.9532)">The three greatest things you learn from traveling</div>
<div class="ln" id="p1" style="left:236.80px;top:240.39px;font-size:24.88px;color:#1e1e1e;transform:scaleX(0.9719)">Like all the great things on earth traveling teaches us by example. Here are some of the most precious lessons</div>
<div class="ln" id="p2" style="left:238.43px;top:280.49px;font-size:25.16px;color:#1e1e1e;transform:scaleX(0.9649)">I’ve learned over the years of traveling.</div>
<div class="ln" id="h2" style="left:239.20px;top:367.24px;font-size:36.21px;color:#000;transform:scaleX(0.9211)">Appreciation of diversity</div>
<div class="ln" id="l1" style="left:238.45px;top:429.19px;font-size:25.30px;color:#1e1e1e;transform:scaleX(0.9719)">Getting used to an entirely different culture can be</div>
<div class="ln" id="l2" style="left:238.47px;top:469.19px;font-size:25.30px;color:#1e1e1e;transform:scaleX(0.9653)">challenging. While it’s also nice to learn about</div>
<div class="ln" id="l3" style="left:238.47px;top:509.19px;font-size:25.30px;color:#1e1e1e;transform:scaleX(0.9592)">cultures online or from books, nothing comes close</div>
<div class="ln" id="l4" style="left:239.49px;top:549.19px;font-size:25.30px;color:#1e1e1e;transform:scaleX(0.9671)">to experiencing cultural diversity in person. You</div>
<div class="ln" id="l5" style="left:237.46px;top:589.19px;font-size:25.30px;color:#1e1e1e;transform:scaleX(0.9555)">learn to appreciate each and every single one of the</div>
<div class="ln" id="l6" style="left:238.45px;top:629.19px;font-size:25.30px;color:#1e1e1e;transform:scaleX(0.9724)">differences while you become more culturally fluid.</div>
<div class="ln" id="q1" style="left:284.78px;top:699.69px;font-size:25.30px;color:#555;transform:scaleX(0.9470);font-style:italic">The real voyage of discovery consists not in</div>
<div class="ln" id="q2" style="left:287.00px;top:739.99px;font-size:25.30px;color:#555;transform:scaleX(0.9364);font-style:italic">seeking new landscapes, but having new eyes.</div>
<div class="ln" id="q3" style="left:285.14px;top:823.08px;font-size:26.47px;color:#555;transform:scaleX(0.8983);font-style:italic">Marcel Proust</div>
<div class="ln" id="c1" style="left:872.00px;top:624.11px;font-size:19.49px;color:#555;transform:scaleX(0.9344)">Leaving your comfort zone might lead you to such beautiful sceneries</div>
<div class="ln" id="c2" style="left:1098.90px;top:653.41px;font-size:19.79px;color:#555;transform:scaleX(0.9405)">like this one.</div>
<div id="fade" class="a"></div>
</body></html>
